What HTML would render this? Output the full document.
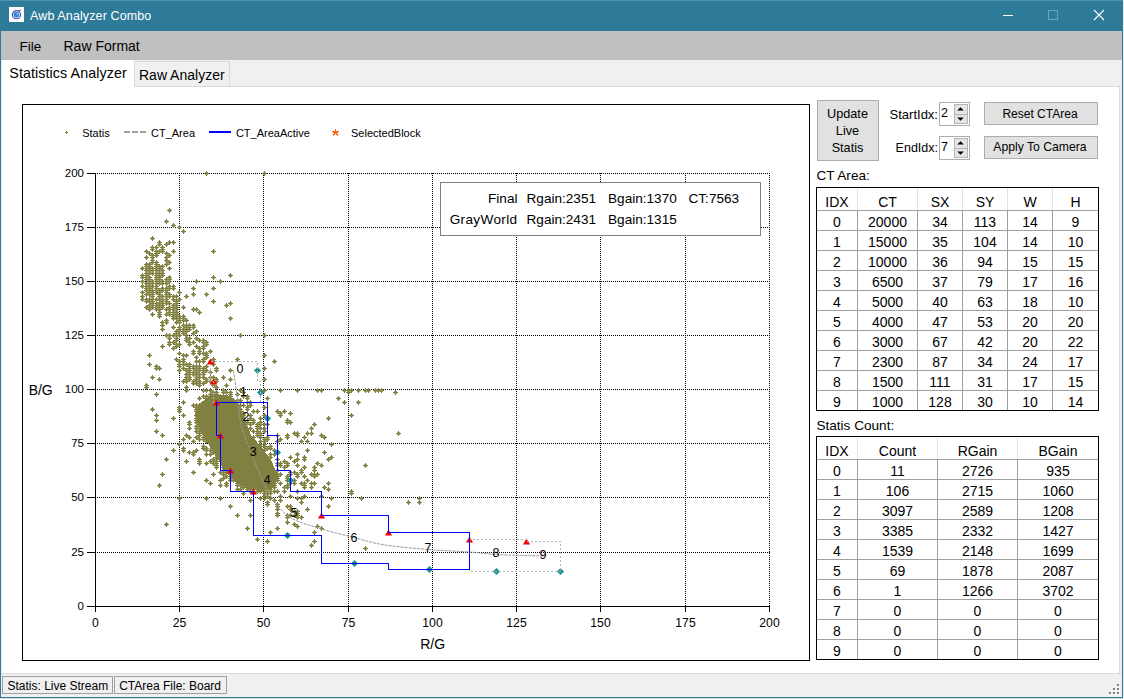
<!DOCTYPE html>
<html><head><meta charset="utf-8"><style>
html,body{margin:0;padding:0;width:1124px;height:699px;overflow:hidden;background:#f0f0f0}
body{position:relative;font-family:"Liberation Sans",sans-serif}
.b{position:absolute}
.t{position:absolute;white-space:pre}
svg.b{overflow:visible}
</style></head><body>
<div class="b" style="left:0px;top:0px;width:1124px;height:699px;background:#f0f0f0"></div>
<div class="b" style="left:0px;top:0px;width:1123px;height:31px;background:#2e7a99"></div>
<div class="b" style="left:0px;top:0px;width:1px;height:699px;background:#2e7a99"></div>
<div class="b" style="left:1122px;top:0px;width:1px;height:699px;background:#2e7a99"></div>
<div class="b" style="left:0px;top:697px;width:1123px;height:1px;background:#2e7a99"></div>
<div class="b" style="left:0px;top:698px;width:1124px;height:1px;background:#d8dcde"></div>
<div class="b" style="left:1123px;top:0px;width:1px;height:699px;background:#e8eef0"></div>
<svg class="b" style="left:9px;top:7px" width="15" height="15" viewBox="0 0 15 15"><rect width="15" height="15" fill="#fff"/><circle cx="7.5" cy="7.7" r="4.1" fill="none" stroke="#5246a8" stroke-width="1.1"/><circle cx="7.5" cy="7.7" r="2.9" fill="#2a8ae0"/><circle cx="8.3" cy="6.9" r="0.9" fill="#8cc4f4"/><path d="M9.8 4.4 L11.6 3.0" stroke="#5246a8" stroke-width="1.2"/></svg>
<div class="b" style="left:0px;top:0px;width:1123px;height:1px;background:#4f90aa"></div>
<div class="t" style="left:30.00px;top:9.72px;font-size:12.5px;line-height:12.5px;color:#fff;letter-spacing:0.12px">Awb Analyzer Combo</div>
<div class="b" style="left:1003px;top:15px;width:10px;height:1px;background:#fff"></div>
<div class="b" style="left:1048px;top:10px;width:10px;height:10px;border:1px solid #6fa3b8;box-sizing:border-box"></div>
<svg class="b" style="left:1094px;top:10px" width="10" height="10" viewBox="0 0 10 10"><path d="M0 0 L10 10 M10 0 L0 10" stroke="#fff" stroke-width="1.1"/></svg>
<div class="b" style="left:1px;top:31px;width:1121px;height:29px;background:#c0c0c0"></div>
<div class="t" style="left:19.50px;top:39.57px;font-size:13.5px;line-height:13.5px;color:#000;">File</div>
<div class="t" style="left:63.50px;top:39.15px;font-size:14px;line-height:14px;color:#000;">Raw Format</div>
<div class="b" style="left:1px;top:60px;width:1121px;height:27px;background:#f0f0f0"></div>
<div class="b" style="left:2px;top:86px;width:1118px;height:588px;background:#fff;border:1px solid #dadada;border-left:none;box-sizing:border-box"></div>
<div class="b" style="left:2px;top:60px;width:132px;height:28px;background:#fff"></div>
<div class="t" style="left:9.30px;top:65.90px;font-size:14.3px;line-height:14.3px;color:#000;letter-spacing:0.08px">Statistics Analyzer</div>
<div class="b" style="left:134px;top:61px;width:96px;height:25px;background:#f0f0f0;border:1px solid #d9d9d9;border-bottom:none;box-sizing:border-box"></div>
<div class="t" style="left:139.00px;top:68.15px;font-size:14px;line-height:14px;color:#000;">Raw Analyzer</div>
<div class="b" style="left:1px;top:673px;width:1121px;height:24px;background:#f0f0f0;border-top:1px solid #dcdcdc;box-sizing:border-box"></div>
<div class="b" style="left:2px;top:676px;width:111px;height:18px;border:1px solid #a0a0a0;box-sizing:border-box"></div>
<div class="t" style="left:7.50px;top:680.04px;font-size:12px;line-height:12px;color:#000;">Statis: Live Stream</div>
<div class="b" style="left:114px;top:676px;width:113px;height:18px;border:1px solid #a0a0a0;box-sizing:border-box"></div>
<div class="t" style="left:119.20px;top:679.64px;font-size:12px;line-height:12px;color:#000;">CTArea File: Board</div>
<div class="b" style="left:1118px;top:685px;width:2px;height:2px;background:#fff"></div>
<div class="b" style="left:1117px;top:684px;width:2px;height:2px;background:#808080"></div>
<div class="b" style="left:1114px;top:689px;width:2px;height:2px;background:#fff"></div>
<div class="b" style="left:1113px;top:688px;width:2px;height:2px;background:#808080"></div>
<div class="b" style="left:1118px;top:689px;width:2px;height:2px;background:#fff"></div>
<div class="b" style="left:1117px;top:688px;width:2px;height:2px;background:#808080"></div>
<div class="b" style="left:1110px;top:693px;width:2px;height:2px;background:#fff"></div>
<div class="b" style="left:1109px;top:692px;width:2px;height:2px;background:#808080"></div>
<div class="b" style="left:1114px;top:693px;width:2px;height:2px;background:#fff"></div>
<div class="b" style="left:1113px;top:692px;width:2px;height:2px;background:#808080"></div>
<div class="b" style="left:1118px;top:693px;width:2px;height:2px;background:#fff"></div>
<div class="b" style="left:1117px;top:692px;width:2px;height:2px;background:#808080"></div>
<div class="b" style="left:22px;top:104px;width:788px;height:557px;border:1px solid #000;box-sizing:border-box;background:#fff"></div>
<div class="b" style="left:817px;top:100px;width:62px;height:61px;background:#e1e1e1;border:1px solid #adadad;box-sizing:border-box"></div>
<div class="t" style="left:547.50px;width:600px;text-align:center;top:108.25px;font-size:12.7px;line-height:12.7px;color:#000;">Update</div>
<div class="t" style="left:547.50px;width:600px;text-align:center;top:125.25px;font-size:12.7px;line-height:12.7px;color:#000;">Live</div>
<div class="t" style="left:547.50px;width:600px;text-align:center;top:142.25px;font-size:12.7px;line-height:12.7px;color:#000;">Statis</div>
<div class="t" style="left:338.00px;width:600px;text-align:right;top:107.50px;font-size:13px;line-height:13px;color:#000;">StartIdx:</div>
<div class="t" style="left:338.00px;width:600px;text-align:right;top:141.72px;font-size:12.5px;line-height:12.5px;color:#000;">EndIdx:</div>
<div class="b" style="left:939px;top:102px;width:31px;height:24px;background:#fff;border:1px solid #adadad;box-sizing:border-box"></div>
<div class="t" style="left:941.00px;top:106.92px;font-size:12.5px;line-height:12.5px;color:#000;">2</div>
<div class="b" style="left:954px;top:104px;width:14px;height:11px;background:#e5e5e5;border:1px solid #b4b4b4;box-sizing:border-box"></div>
<div class="b" style="left:954px;top:114px;width:14px;height:10px;background:#e5e5e5;border:1px solid #b4b4b4;box-sizing:border-box"></div>
<svg class="b" style="left:957px;top:107px" width="8" height="16" viewBox="0 0 8 16"><path d="M3.5 0.3 L6.8 3.6 L0.2 3.6Z M3.5 13.8 L6.8 10.5 L0.2 10.5Z" fill="#000"/></svg>
<div class="b" style="left:939px;top:136px;width:31px;height:24px;background:#fff;border:1px solid #adadad;box-sizing:border-box"></div>
<div class="t" style="left:941.00px;top:140.92px;font-size:12.5px;line-height:12.5px;color:#000;">7</div>
<div class="b" style="left:954px;top:138px;width:14px;height:11px;background:#e5e5e5;border:1px solid #b4b4b4;box-sizing:border-box"></div>
<div class="b" style="left:954px;top:148px;width:14px;height:10px;background:#e5e5e5;border:1px solid #b4b4b4;box-sizing:border-box"></div>
<svg class="b" style="left:957px;top:141px" width="8" height="16" viewBox="0 0 8 16"><path d="M3.5 0.3 L6.8 3.6 L0.2 3.6Z M3.5 13.8 L6.8 10.5 L0.2 10.5Z" fill="#000"/></svg>
<div class="b" style="left:984px;top:102px;width:114px;height:23px;background:#e1e1e1;border:1px solid #adadad;box-sizing:border-box"></div>
<div class="t" style="left:740.00px;width:600px;text-align:center;top:108.04px;font-size:12px;line-height:12px;color:#000;">Reset CTArea</div>
<div class="b" style="left:984px;top:136px;width:114px;height:23px;background:#e1e1e1;border:1px solid #adadad;box-sizing:border-box"></div>
<div class="t" style="left:740.00px;width:600px;text-align:center;top:141.47px;font-size:12.2px;line-height:12.2px;color:#000;">Apply To Camera</div>
<div class="t" style="left:816.40px;top:168.89px;font-size:13.6px;line-height:13.6px;color:#000;">CT Area:</div>
<div class="t" style="left:816.40px;top:418.79px;font-size:13.6px;line-height:13.6px;color:#000;">Statis Count:</div>
<div class="b" style="left:816px;top:187px;width:283px;height:224px;border:1px solid #000;box-sizing:border-box;background:#fff"></div>
<div class="b" style="left:857px;top:188px;width:1px;height:22px;background:#e3e3e3"></div>
<div class="b" style="left:857px;top:210px;width:1px;height:200px;background:#a0a0a0"></div>
<div class="b" style="left:917px;top:188px;width:1px;height:22px;background:#e3e3e3"></div>
<div class="b" style="left:917px;top:210px;width:1px;height:200px;background:#a0a0a0"></div>
<div class="b" style="left:962px;top:188px;width:1px;height:22px;background:#e3e3e3"></div>
<div class="b" style="left:962px;top:210px;width:1px;height:200px;background:#a0a0a0"></div>
<div class="b" style="left:1007px;top:188px;width:1px;height:22px;background:#e3e3e3"></div>
<div class="b" style="left:1007px;top:210px;width:1px;height:200px;background:#a0a0a0"></div>
<div class="b" style="left:1052px;top:188px;width:1px;height:22px;background:#e3e3e3"></div>
<div class="b" style="left:1052px;top:210px;width:1px;height:200px;background:#a0a0a0"></div>
<div class="b" style="left:817px;top:210px;width:281px;height:1px;background:#a0a0a0"></div>
<div class="b" style="left:817px;top:230px;width:281px;height:1px;background:#a0a0a0"></div>
<div class="b" style="left:817px;top:250px;width:281px;height:1px;background:#a0a0a0"></div>
<div class="b" style="left:817px;top:270px;width:281px;height:1px;background:#a0a0a0"></div>
<div class="b" style="left:817px;top:290px;width:281px;height:1px;background:#a0a0a0"></div>
<div class="b" style="left:817px;top:310px;width:281px;height:1px;background:#a0a0a0"></div>
<div class="b" style="left:817px;top:330px;width:281px;height:1px;background:#a0a0a0"></div>
<div class="b" style="left:817px;top:350px;width:281px;height:1px;background:#a0a0a0"></div>
<div class="b" style="left:817px;top:370px;width:281px;height:1px;background:#a0a0a0"></div>
<div class="b" style="left:817px;top:390px;width:281px;height:1px;background:#a0a0a0"></div>
<div class="t" style="left:537.00px;width:600px;text-align:center;top:194.75px;font-size:14px;line-height:14px;color:#000;">IDX</div>
<div class="t" style="left:587.50px;width:600px;text-align:center;top:194.75px;font-size:14px;line-height:14px;color:#000;">CT</div>
<div class="t" style="left:640.00px;width:600px;text-align:center;top:194.75px;font-size:14px;line-height:14px;color:#000;">SX</div>
<div class="t" style="left:685.00px;width:600px;text-align:center;top:194.75px;font-size:14px;line-height:14px;color:#000;">SY</div>
<div class="t" style="left:730.00px;width:600px;text-align:center;top:194.75px;font-size:14px;line-height:14px;color:#000;">W</div>
<div class="t" style="left:775.50px;width:600px;text-align:center;top:194.75px;font-size:14px;line-height:14px;color:#000;">H</div>
<div class="t" style="left:537.00px;width:600px;text-align:center;top:215.25px;font-size:14px;line-height:14px;color:#000;">0</div>
<div class="t" style="left:587.50px;width:600px;text-align:center;top:215.25px;font-size:14px;line-height:14px;color:#000;">20000</div>
<div class="t" style="left:640.00px;width:600px;text-align:center;top:215.25px;font-size:14px;line-height:14px;color:#000;">34</div>
<div class="t" style="left:685.00px;width:600px;text-align:center;top:215.25px;font-size:14px;line-height:14px;color:#000;">113</div>
<div class="t" style="left:730.00px;width:600px;text-align:center;top:215.25px;font-size:14px;line-height:14px;color:#000;">14</div>
<div class="t" style="left:775.50px;width:600px;text-align:center;top:215.25px;font-size:14px;line-height:14px;color:#000;">9</div>
<div class="t" style="left:537.00px;width:600px;text-align:center;top:235.25px;font-size:14px;line-height:14px;color:#000;">1</div>
<div class="t" style="left:587.50px;width:600px;text-align:center;top:235.25px;font-size:14px;line-height:14px;color:#000;">15000</div>
<div class="t" style="left:640.00px;width:600px;text-align:center;top:235.25px;font-size:14px;line-height:14px;color:#000;">35</div>
<div class="t" style="left:685.00px;width:600px;text-align:center;top:235.25px;font-size:14px;line-height:14px;color:#000;">104</div>
<div class="t" style="left:730.00px;width:600px;text-align:center;top:235.25px;font-size:14px;line-height:14px;color:#000;">14</div>
<div class="t" style="left:775.50px;width:600px;text-align:center;top:235.25px;font-size:14px;line-height:14px;color:#000;">10</div>
<div class="t" style="left:537.00px;width:600px;text-align:center;top:255.25px;font-size:14px;line-height:14px;color:#000;">2</div>
<div class="t" style="left:587.50px;width:600px;text-align:center;top:255.25px;font-size:14px;line-height:14px;color:#000;">10000</div>
<div class="t" style="left:640.00px;width:600px;text-align:center;top:255.25px;font-size:14px;line-height:14px;color:#000;">36</div>
<div class="t" style="left:685.00px;width:600px;text-align:center;top:255.25px;font-size:14px;line-height:14px;color:#000;">94</div>
<div class="t" style="left:730.00px;width:600px;text-align:center;top:255.25px;font-size:14px;line-height:14px;color:#000;">15</div>
<div class="t" style="left:775.50px;width:600px;text-align:center;top:255.25px;font-size:14px;line-height:14px;color:#000;">15</div>
<div class="t" style="left:537.00px;width:600px;text-align:center;top:275.25px;font-size:14px;line-height:14px;color:#000;">3</div>
<div class="t" style="left:587.50px;width:600px;text-align:center;top:275.25px;font-size:14px;line-height:14px;color:#000;">6500</div>
<div class="t" style="left:640.00px;width:600px;text-align:center;top:275.25px;font-size:14px;line-height:14px;color:#000;">37</div>
<div class="t" style="left:685.00px;width:600px;text-align:center;top:275.25px;font-size:14px;line-height:14px;color:#000;">79</div>
<div class="t" style="left:730.00px;width:600px;text-align:center;top:275.25px;font-size:14px;line-height:14px;color:#000;">17</div>
<div class="t" style="left:775.50px;width:600px;text-align:center;top:275.25px;font-size:14px;line-height:14px;color:#000;">16</div>
<div class="t" style="left:537.00px;width:600px;text-align:center;top:295.25px;font-size:14px;line-height:14px;color:#000;">4</div>
<div class="t" style="left:587.50px;width:600px;text-align:center;top:295.25px;font-size:14px;line-height:14px;color:#000;">5000</div>
<div class="t" style="left:640.00px;width:600px;text-align:center;top:295.25px;font-size:14px;line-height:14px;color:#000;">40</div>
<div class="t" style="left:685.00px;width:600px;text-align:center;top:295.25px;font-size:14px;line-height:14px;color:#000;">63</div>
<div class="t" style="left:730.00px;width:600px;text-align:center;top:295.25px;font-size:14px;line-height:14px;color:#000;">18</div>
<div class="t" style="left:775.50px;width:600px;text-align:center;top:295.25px;font-size:14px;line-height:14px;color:#000;">10</div>
<div class="t" style="left:537.00px;width:600px;text-align:center;top:315.25px;font-size:14px;line-height:14px;color:#000;">5</div>
<div class="t" style="left:587.50px;width:600px;text-align:center;top:315.25px;font-size:14px;line-height:14px;color:#000;">4000</div>
<div class="t" style="left:640.00px;width:600px;text-align:center;top:315.25px;font-size:14px;line-height:14px;color:#000;">47</div>
<div class="t" style="left:685.00px;width:600px;text-align:center;top:315.25px;font-size:14px;line-height:14px;color:#000;">53</div>
<div class="t" style="left:730.00px;width:600px;text-align:center;top:315.25px;font-size:14px;line-height:14px;color:#000;">20</div>
<div class="t" style="left:775.50px;width:600px;text-align:center;top:315.25px;font-size:14px;line-height:14px;color:#000;">20</div>
<div class="t" style="left:537.00px;width:600px;text-align:center;top:335.25px;font-size:14px;line-height:14px;color:#000;">6</div>
<div class="t" style="left:587.50px;width:600px;text-align:center;top:335.25px;font-size:14px;line-height:14px;color:#000;">3000</div>
<div class="t" style="left:640.00px;width:600px;text-align:center;top:335.25px;font-size:14px;line-height:14px;color:#000;">67</div>
<div class="t" style="left:685.00px;width:600px;text-align:center;top:335.25px;font-size:14px;line-height:14px;color:#000;">42</div>
<div class="t" style="left:730.00px;width:600px;text-align:center;top:335.25px;font-size:14px;line-height:14px;color:#000;">20</div>
<div class="t" style="left:775.50px;width:600px;text-align:center;top:335.25px;font-size:14px;line-height:14px;color:#000;">22</div>
<div class="t" style="left:537.00px;width:600px;text-align:center;top:355.25px;font-size:14px;line-height:14px;color:#000;">7</div>
<div class="t" style="left:587.50px;width:600px;text-align:center;top:355.25px;font-size:14px;line-height:14px;color:#000;">2300</div>
<div class="t" style="left:640.00px;width:600px;text-align:center;top:355.25px;font-size:14px;line-height:14px;color:#000;">87</div>
<div class="t" style="left:685.00px;width:600px;text-align:center;top:355.25px;font-size:14px;line-height:14px;color:#000;">34</div>
<div class="t" style="left:730.00px;width:600px;text-align:center;top:355.25px;font-size:14px;line-height:14px;color:#000;">24</div>
<div class="t" style="left:775.50px;width:600px;text-align:center;top:355.25px;font-size:14px;line-height:14px;color:#000;">17</div>
<div class="t" style="left:537.00px;width:600px;text-align:center;top:375.25px;font-size:14px;line-height:14px;color:#000;">8</div>
<div class="t" style="left:587.50px;width:600px;text-align:center;top:375.25px;font-size:14px;line-height:14px;color:#000;">1500</div>
<div class="t" style="left:640.00px;width:600px;text-align:center;top:375.25px;font-size:14px;line-height:14px;color:#000;">111</div>
<div class="t" style="left:685.00px;width:600px;text-align:center;top:375.25px;font-size:14px;line-height:14px;color:#000;">31</div>
<div class="t" style="left:730.00px;width:600px;text-align:center;top:375.25px;font-size:14px;line-height:14px;color:#000;">17</div>
<div class="t" style="left:775.50px;width:600px;text-align:center;top:375.25px;font-size:14px;line-height:14px;color:#000;">15</div>
<div class="t" style="left:537.00px;width:600px;text-align:center;top:395.25px;font-size:14px;line-height:14px;color:#000;">9</div>
<div class="t" style="left:587.50px;width:600px;text-align:center;top:395.25px;font-size:14px;line-height:14px;color:#000;">1000</div>
<div class="t" style="left:640.00px;width:600px;text-align:center;top:395.25px;font-size:14px;line-height:14px;color:#000;">128</div>
<div class="t" style="left:685.00px;width:600px;text-align:center;top:395.25px;font-size:14px;line-height:14px;color:#000;">30</div>
<div class="t" style="left:730.00px;width:600px;text-align:center;top:395.25px;font-size:14px;line-height:14px;color:#000;">10</div>
<div class="t" style="left:775.50px;width:600px;text-align:center;top:395.25px;font-size:14px;line-height:14px;color:#000;">14</div>
<div class="b" style="left:816px;top:436px;width:283px;height:224px;border:1px solid #000;box-sizing:border-box;background:#fff"></div>
<div class="b" style="left:857px;top:437px;width:1px;height:22px;background:#e3e3e3"></div>
<div class="b" style="left:857px;top:459px;width:1px;height:200px;background:#a0a0a0"></div>
<div class="b" style="left:937px;top:437px;width:1px;height:22px;background:#e3e3e3"></div>
<div class="b" style="left:937px;top:459px;width:1px;height:200px;background:#a0a0a0"></div>
<div class="b" style="left:1017px;top:437px;width:1px;height:22px;background:#e3e3e3"></div>
<div class="b" style="left:1017px;top:459px;width:1px;height:200px;background:#a0a0a0"></div>
<div class="b" style="left:817px;top:459px;width:281px;height:1px;background:#a0a0a0"></div>
<div class="b" style="left:817px;top:479px;width:281px;height:1px;background:#a0a0a0"></div>
<div class="b" style="left:817px;top:499px;width:281px;height:1px;background:#a0a0a0"></div>
<div class="b" style="left:817px;top:519px;width:281px;height:1px;background:#a0a0a0"></div>
<div class="b" style="left:817px;top:539px;width:281px;height:1px;background:#a0a0a0"></div>
<div class="b" style="left:817px;top:559px;width:281px;height:1px;background:#a0a0a0"></div>
<div class="b" style="left:817px;top:579px;width:281px;height:1px;background:#a0a0a0"></div>
<div class="b" style="left:817px;top:599px;width:281px;height:1px;background:#a0a0a0"></div>
<div class="b" style="left:817px;top:619px;width:281px;height:1px;background:#a0a0a0"></div>
<div class="b" style="left:817px;top:639px;width:281px;height:1px;background:#a0a0a0"></div>
<div class="t" style="left:537.00px;width:600px;text-align:center;top:443.75px;font-size:14px;line-height:14px;color:#000;">IDX</div>
<div class="t" style="left:597.50px;width:600px;text-align:center;top:443.75px;font-size:14px;line-height:14px;color:#000;">Count</div>
<div class="t" style="left:677.50px;width:600px;text-align:center;top:443.75px;font-size:14px;line-height:14px;color:#000;">RGain</div>
<div class="t" style="left:758.00px;width:600px;text-align:center;top:443.75px;font-size:14px;line-height:14px;color:#000;">BGain</div>
<div class="t" style="left:537.00px;width:600px;text-align:center;top:464.25px;font-size:14px;line-height:14px;color:#000;">0</div>
<div class="t" style="left:597.50px;width:600px;text-align:center;top:464.25px;font-size:14px;line-height:14px;color:#000;">11</div>
<div class="t" style="left:677.50px;width:600px;text-align:center;top:464.25px;font-size:14px;line-height:14px;color:#000;">2726</div>
<div class="t" style="left:758.00px;width:600px;text-align:center;top:464.25px;font-size:14px;line-height:14px;color:#000;">935</div>
<div class="t" style="left:537.00px;width:600px;text-align:center;top:484.25px;font-size:14px;line-height:14px;color:#000;">1</div>
<div class="t" style="left:597.50px;width:600px;text-align:center;top:484.25px;font-size:14px;line-height:14px;color:#000;">106</div>
<div class="t" style="left:677.50px;width:600px;text-align:center;top:484.25px;font-size:14px;line-height:14px;color:#000;">2715</div>
<div class="t" style="left:758.00px;width:600px;text-align:center;top:484.25px;font-size:14px;line-height:14px;color:#000;">1060</div>
<div class="t" style="left:537.00px;width:600px;text-align:center;top:504.25px;font-size:14px;line-height:14px;color:#000;">2</div>
<div class="t" style="left:597.50px;width:600px;text-align:center;top:504.25px;font-size:14px;line-height:14px;color:#000;">3097</div>
<div class="t" style="left:677.50px;width:600px;text-align:center;top:504.25px;font-size:14px;line-height:14px;color:#000;">2589</div>
<div class="t" style="left:758.00px;width:600px;text-align:center;top:504.25px;font-size:14px;line-height:14px;color:#000;">1208</div>
<div class="t" style="left:537.00px;width:600px;text-align:center;top:524.25px;font-size:14px;line-height:14px;color:#000;">3</div>
<div class="t" style="left:597.50px;width:600px;text-align:center;top:524.25px;font-size:14px;line-height:14px;color:#000;">3385</div>
<div class="t" style="left:677.50px;width:600px;text-align:center;top:524.25px;font-size:14px;line-height:14px;color:#000;">2332</div>
<div class="t" style="left:758.00px;width:600px;text-align:center;top:524.25px;font-size:14px;line-height:14px;color:#000;">1427</div>
<div class="t" style="left:537.00px;width:600px;text-align:center;top:544.25px;font-size:14px;line-height:14px;color:#000;">4</div>
<div class="t" style="left:597.50px;width:600px;text-align:center;top:544.25px;font-size:14px;line-height:14px;color:#000;">1539</div>
<div class="t" style="left:677.50px;width:600px;text-align:center;top:544.25px;font-size:14px;line-height:14px;color:#000;">2148</div>
<div class="t" style="left:758.00px;width:600px;text-align:center;top:544.25px;font-size:14px;line-height:14px;color:#000;">1699</div>
<div class="t" style="left:537.00px;width:600px;text-align:center;top:564.25px;font-size:14px;line-height:14px;color:#000;">5</div>
<div class="t" style="left:597.50px;width:600px;text-align:center;top:564.25px;font-size:14px;line-height:14px;color:#000;">69</div>
<div class="t" style="left:677.50px;width:600px;text-align:center;top:564.25px;font-size:14px;line-height:14px;color:#000;">1878</div>
<div class="t" style="left:758.00px;width:600px;text-align:center;top:564.25px;font-size:14px;line-height:14px;color:#000;">2087</div>
<div class="t" style="left:537.00px;width:600px;text-align:center;top:584.25px;font-size:14px;line-height:14px;color:#000;">6</div>
<div class="t" style="left:597.50px;width:600px;text-align:center;top:584.25px;font-size:14px;line-height:14px;color:#000;">1</div>
<div class="t" style="left:677.50px;width:600px;text-align:center;top:584.25px;font-size:14px;line-height:14px;color:#000;">1266</div>
<div class="t" style="left:758.00px;width:600px;text-align:center;top:584.25px;font-size:14px;line-height:14px;color:#000;">3702</div>
<div class="t" style="left:537.00px;width:600px;text-align:center;top:604.25px;font-size:14px;line-height:14px;color:#000;">7</div>
<div class="t" style="left:597.50px;width:600px;text-align:center;top:604.25px;font-size:14px;line-height:14px;color:#000;">0</div>
<div class="t" style="left:677.50px;width:600px;text-align:center;top:604.25px;font-size:14px;line-height:14px;color:#000;">0</div>
<div class="t" style="left:758.00px;width:600px;text-align:center;top:604.25px;font-size:14px;line-height:14px;color:#000;">0</div>
<div class="t" style="left:537.00px;width:600px;text-align:center;top:624.25px;font-size:14px;line-height:14px;color:#000;">8</div>
<div class="t" style="left:597.50px;width:600px;text-align:center;top:624.25px;font-size:14px;line-height:14px;color:#000;">0</div>
<div class="t" style="left:677.50px;width:600px;text-align:center;top:624.25px;font-size:14px;line-height:14px;color:#000;">0</div>
<div class="t" style="left:758.00px;width:600px;text-align:center;top:624.25px;font-size:14px;line-height:14px;color:#000;">0</div>
<div class="t" style="left:537.00px;width:600px;text-align:center;top:644.25px;font-size:14px;line-height:14px;color:#000;">9</div>
<div class="t" style="left:597.50px;width:600px;text-align:center;top:644.25px;font-size:14px;line-height:14px;color:#000;">0</div>
<div class="t" style="left:677.50px;width:600px;text-align:center;top:644.25px;font-size:14px;line-height:14px;color:#000;">0</div>
<div class="t" style="left:758.00px;width:600px;text-align:center;top:644.25px;font-size:14px;line-height:14px;color:#000;">0</div>
<svg class="b" style="left:0;top:0" width="1124" height="699" font-family="Liberation Sans, sans-serif" shape-rendering="crispEdges"><path d="M179.5 173V606" stroke="#000" stroke-width="1" stroke-dasharray="1 1" /><path d="M263.5 173V606" stroke="#000" stroke-width="1" stroke-dasharray="1 1" /><path d="M348.5 173V606" stroke="#000" stroke-width="1" stroke-dasharray="1 1" /><path d="M432.5 173V606" stroke="#000" stroke-width="1" stroke-dasharray="1 1" /><path d="M516.5 173V606" stroke="#000" stroke-width="1" stroke-dasharray="1 1" /><path d="M600.5 173V606" stroke="#000" stroke-width="1" stroke-dasharray="1 1" /><path d="M685.5 173V606" stroke="#000" stroke-width="1" stroke-dasharray="1 1" /><path d="M769.5 173V606" stroke="#000" stroke-width="1" stroke-dasharray="1 1" /><path d="M97 552.5H770" stroke="#000" stroke-width="1" stroke-dasharray="1 1" /><path d="M97 497.5H770" stroke="#000" stroke-width="1" stroke-dasharray="1 1" /><path d="M97 443.5H770" stroke="#000" stroke-width="1" stroke-dasharray="1 1" /><path d="M97 389.5H770" stroke="#000" stroke-width="1" stroke-dasharray="1 1" /><path d="M97 335.5H770" stroke="#000" stroke-width="1" stroke-dasharray="1 1" /><path d="M97 281.5H770" stroke="#000" stroke-width="1" stroke-dasharray="1 1" /><path d="M97 227.5H770" stroke="#000" stroke-width="1" stroke-dasharray="1 1" /><path d="M97 173.5H770" stroke="#000" stroke-width="1" stroke-dasharray="1 1" /><path d="M95.5 173V606M87 606.5H770" stroke="#000" stroke-width="1" fill="none"/><path d="M87 606.5H95M87 552.5H95M87 497.5H95M87 443.5H95M87 389.5H95M87 335.5H95M87 281.5H95M87 227.5H95M87 173.5H95M95.5 607V612M179.5 607V612M263.5 607V612M348.5 607V612M432.5 607V612M516.5 607V612M600.5 607V612M685.5 607V612M769.5 607V612" stroke="#000" stroke-width="1"/><text x="84" y="610" font-size="11.5" text-anchor="end" fill="#000" >0</text><text x="84" y="556" font-size="11.5" text-anchor="end" fill="#000" >25</text><text x="84" y="501" font-size="11.5" text-anchor="end" fill="#000" >50</text><text x="84" y="447" font-size="11.5" text-anchor="end" fill="#000" >75</text><text x="84" y="393" font-size="11.5" text-anchor="end" fill="#000" >100</text><text x="84" y="339" font-size="11.5" text-anchor="end" fill="#000" >125</text><text x="84" y="285" font-size="11.5" text-anchor="end" fill="#000" >150</text><text x="84" y="231" font-size="11.5" text-anchor="end" fill="#000" >175</text><text x="84" y="177" font-size="11.5" text-anchor="end" fill="#000" >200</text><text x="95.5" y="627" font-size="12.2" text-anchor="middle" fill="#000" >0</text><text x="179.5" y="627" font-size="12.2" text-anchor="middle" fill="#000" >25</text><text x="263.5" y="627" font-size="12.2" text-anchor="middle" fill="#000" >50</text><text x="348.5" y="627" font-size="12.2" text-anchor="middle" fill="#000" >75</text><text x="432.5" y="627" font-size="12.2" text-anchor="middle" fill="#000" >100</text><text x="516.5" y="627" font-size="12.2" text-anchor="middle" fill="#000" >125</text><text x="600.5" y="627" font-size="12.2" text-anchor="middle" fill="#000" >150</text><text x="685.5" y="627" font-size="12.2" text-anchor="middle" fill="#000" >175</text><text x="769.5" y="627" font-size="12.2" text-anchor="middle" fill="#000" >200</text><text x="40.7" y="395.4" font-size="14" text-anchor="middle" fill="#000" >B/G</text><text x="432.6" y="649.4" font-size="14" text-anchor="middle" fill="#000" >R/G</text><path d="M66 130.5h1v1h1v1h-1v1h-1v-1h-1v-1h1z" fill="#7f7f3f"/><text x="82.2" y="136.8" font-size="11" text-anchor="start" fill="#000" >Statis</text><path d="M124 132H146" stroke="#a0a0a0" stroke-width="2" stroke-dasharray="6 2"/><text x="151" y="136.8" font-size="11" text-anchor="start" fill="#000" >CT_Area</text><path d="M209 132H231" stroke="#0000ff" stroke-width="2"/><text x="235.9" y="136.8" font-size="11" text-anchor="start" fill="#000" >CT_AreaActive</text><path d="M335.5 128.5l1.2 2.6 2.8 0.2-2.2 1.8 0.8 2.8-2.6-1.6-2.6 1.6 0.8-2.8-2.2-1.8 2.8-0.2z" fill="#ff6a1a"/><text x="351" y="136.8" font-size="11" text-anchor="start" fill="#000" >SelectedBlock</text><rect x="440.5" y="182.5" width="320" height="53" fill="#fff" stroke="#808080"/><text x="517.5" y="203" font-size="13.6" text-anchor="end" fill="#000" >Final</text><text x="517.5" y="224" font-size="13.6" text-anchor="end" fill="#000" letter-spacing="0.35">GrayWorld</text><text x="526.5" y="203" font-size="13.6" text-anchor="start" fill="#000" >Rgain:2351</text><text x="608" y="203" font-size="13.6" text-anchor="start" fill="#000" >Bgain:1370</text><text x="688.5" y="203" font-size="13.6" text-anchor="start" fill="#000" >CT:7563</text><text x="526.5" y="224" font-size="13.6" text-anchor="start" fill="#000" >Rgain:2431</text><text x="608" y="224" font-size="13.6" text-anchor="start" fill="#000" >Bgain:1315</text><path d="M200 403L212 395L227 395L239 404L245 420L251 435L262 448L272 462L278 477L274 488L262 491L247 489L234 481L224 469L215 455L207 442L199 429L195 414Z" fill="#808040"/><path d="M141 298h1v1h-1zM143 298h1v1h-1zM141 300h1v1h-1zM143 300h1v1h-1zM141 295h1v1h-1zM143 295h1v1h-1zM141 297h1v1h-1zM143 297h1v1h-1zM141 291h1v1h-1zM143 291h1v1h-1zM141 293h1v1h-1zM143 293h1v1h-1zM141 285h1v1h-1zM143 285h1v1h-1zM141 287h1v1h-1zM143 287h1v1h-1zM141 280h1v1h-1zM143 280h1v1h-1zM141 282h1v1h-1zM143 282h1v1h-1zM141 276h1v1h-1zM143 276h1v1h-1zM141 278h1v1h-1zM143 278h1v1h-1zM141 274h1v1h-1zM143 274h1v1h-1zM141 276h1v1h-1zM143 276h1v1h-1zM141 267h1v1h-1zM143 267h1v1h-1zM141 269h1v1h-1zM143 269h1v1h-1zM145 386h1v1h-1zM147 386h1v1h-1zM145 388h1v1h-1zM147 388h1v1h-1zM145 384h1v1h-1zM147 384h1v1h-1zM145 386h1v1h-1zM147 386h1v1h-1zM145 306h1v1h-1zM147 306h1v1h-1zM145 308h1v1h-1zM147 308h1v1h-1zM145 300h1v1h-1zM147 300h1v1h-1zM145 302h1v1h-1zM147 302h1v1h-1zM145 298h1v1h-1zM147 298h1v1h-1zM145 300h1v1h-1zM147 300h1v1h-1zM145 293h1v1h-1zM147 293h1v1h-1zM145 295h1v1h-1zM147 295h1v1h-1zM145 289h1v1h-1zM147 289h1v1h-1zM145 291h1v1h-1zM147 291h1v1h-1zM145 287h1v1h-1zM147 287h1v1h-1zM145 289h1v1h-1zM147 289h1v1h-1zM145 285h1v1h-1zM147 285h1v1h-1zM145 287h1v1h-1zM147 287h1v1h-1zM145 282h1v1h-1zM147 282h1v1h-1zM145 284h1v1h-1zM147 284h1v1h-1zM145 278h1v1h-1zM147 278h1v1h-1zM145 280h1v1h-1zM147 280h1v1h-1zM145 276h1v1h-1zM147 276h1v1h-1zM145 278h1v1h-1zM147 278h1v1h-1zM145 274h1v1h-1zM147 274h1v1h-1zM145 276h1v1h-1zM147 276h1v1h-1zM145 272h1v1h-1zM147 272h1v1h-1zM145 274h1v1h-1zM147 274h1v1h-1zM145 269h1v1h-1zM147 269h1v1h-1zM145 271h1v1h-1zM147 271h1v1h-1zM145 267h1v1h-1zM147 267h1v1h-1zM145 269h1v1h-1zM147 269h1v1h-1zM145 265h1v1h-1zM147 265h1v1h-1zM145 267h1v1h-1zM147 267h1v1h-1zM145 263h1v1h-1zM147 263h1v1h-1zM145 265h1v1h-1zM147 265h1v1h-1zM145 256h1v1h-1zM147 256h1v1h-1zM145 258h1v1h-1zM147 258h1v1h-1zM145 250h1v1h-1zM147 250h1v1h-1zM145 252h1v1h-1zM147 252h1v1h-1zM148 363h1v1h-1zM150 363h1v1h-1zM148 365h1v1h-1zM150 365h1v1h-1zM148 354h1v1h-1zM150 354h1v1h-1zM148 356h1v1h-1zM150 356h1v1h-1zM148 308h1v1h-1zM150 308h1v1h-1zM148 310h1v1h-1zM150 310h1v1h-1zM148 304h1v1h-1zM150 304h1v1h-1zM148 306h1v1h-1zM150 306h1v1h-1zM148 300h1v1h-1zM150 300h1v1h-1zM148 302h1v1h-1zM150 302h1v1h-1zM148 298h1v1h-1zM150 298h1v1h-1zM148 300h1v1h-1zM150 300h1v1h-1zM148 293h1v1h-1zM150 293h1v1h-1zM148 295h1v1h-1zM150 295h1v1h-1zM148 291h1v1h-1zM150 291h1v1h-1zM148 293h1v1h-1zM150 293h1v1h-1zM148 289h1v1h-1zM150 289h1v1h-1zM148 291h1v1h-1zM150 291h1v1h-1zM148 287h1v1h-1zM150 287h1v1h-1zM148 289h1v1h-1zM150 289h1v1h-1zM148 285h1v1h-1zM150 285h1v1h-1zM148 287h1v1h-1zM150 287h1v1h-1zM148 282h1v1h-1zM150 282h1v1h-1zM148 284h1v1h-1zM150 284h1v1h-1zM148 280h1v1h-1zM150 280h1v1h-1zM148 282h1v1h-1zM150 282h1v1h-1zM148 278h1v1h-1zM150 278h1v1h-1zM148 280h1v1h-1zM150 280h1v1h-1zM148 276h1v1h-1zM150 276h1v1h-1zM148 278h1v1h-1zM150 278h1v1h-1zM148 272h1v1h-1zM150 272h1v1h-1zM148 274h1v1h-1zM150 274h1v1h-1zM148 269h1v1h-1zM150 269h1v1h-1zM148 271h1v1h-1zM150 271h1v1h-1zM148 267h1v1h-1zM150 267h1v1h-1zM148 269h1v1h-1zM150 269h1v1h-1zM148 265h1v1h-1zM150 265h1v1h-1zM148 267h1v1h-1zM150 267h1v1h-1zM148 263h1v1h-1zM150 263h1v1h-1zM148 265h1v1h-1zM150 265h1v1h-1zM148 252h1v1h-1zM150 252h1v1h-1zM148 254h1v1h-1zM150 254h1v1h-1zM151 408h1v1h-1zM153 408h1v1h-1zM151 410h1v1h-1zM153 410h1v1h-1zM151 376h1v1h-1zM153 376h1v1h-1zM151 378h1v1h-1zM153 378h1v1h-1zM151 313h1v1h-1zM153 313h1v1h-1zM151 315h1v1h-1zM153 315h1v1h-1zM151 306h1v1h-1zM153 306h1v1h-1zM151 308h1v1h-1zM153 308h1v1h-1zM151 304h1v1h-1zM153 304h1v1h-1zM151 306h1v1h-1zM153 306h1v1h-1zM151 302h1v1h-1zM153 302h1v1h-1zM151 304h1v1h-1zM153 304h1v1h-1zM151 300h1v1h-1zM153 300h1v1h-1zM151 302h1v1h-1zM153 302h1v1h-1zM151 298h1v1h-1zM153 298h1v1h-1zM151 300h1v1h-1zM153 300h1v1h-1zM151 295h1v1h-1zM153 295h1v1h-1zM151 297h1v1h-1zM153 297h1v1h-1zM151 293h1v1h-1zM153 293h1v1h-1zM151 295h1v1h-1zM153 295h1v1h-1zM151 291h1v1h-1zM153 291h1v1h-1zM151 293h1v1h-1zM153 293h1v1h-1zM151 289h1v1h-1zM153 289h1v1h-1zM151 291h1v1h-1zM153 291h1v1h-1zM151 285h1v1h-1zM153 285h1v1h-1zM151 287h1v1h-1zM153 287h1v1h-1zM151 282h1v1h-1zM153 282h1v1h-1zM151 284h1v1h-1zM153 284h1v1h-1zM151 280h1v1h-1zM153 280h1v1h-1zM151 282h1v1h-1zM153 282h1v1h-1zM151 272h1v1h-1zM153 272h1v1h-1zM151 274h1v1h-1zM153 274h1v1h-1zM151 269h1v1h-1zM153 269h1v1h-1zM151 271h1v1h-1zM153 271h1v1h-1zM151 267h1v1h-1zM153 267h1v1h-1zM151 269h1v1h-1zM153 269h1v1h-1zM151 261h1v1h-1zM153 261h1v1h-1zM151 263h1v1h-1zM153 263h1v1h-1zM151 259h1v1h-1zM153 259h1v1h-1zM151 261h1v1h-1zM153 261h1v1h-1zM151 256h1v1h-1zM153 256h1v1h-1zM151 258h1v1h-1zM153 258h1v1h-1zM151 254h1v1h-1zM153 254h1v1h-1zM151 256h1v1h-1zM153 256h1v1h-1zM151 248h1v1h-1zM153 248h1v1h-1zM151 250h1v1h-1zM153 250h1v1h-1zM151 246h1v1h-1zM153 246h1v1h-1zM151 248h1v1h-1zM153 248h1v1h-1zM151 237h1v1h-1zM153 237h1v1h-1zM151 239h1v1h-1zM153 239h1v1h-1zM155 430h1v1h-1zM157 430h1v1h-1zM155 432h1v1h-1zM157 432h1v1h-1zM155 419h1v1h-1zM157 419h1v1h-1zM155 421h1v1h-1zM157 421h1v1h-1zM155 414h1v1h-1zM157 414h1v1h-1zM155 416h1v1h-1zM157 416h1v1h-1zM155 393h1v1h-1zM157 393h1v1h-1zM155 395h1v1h-1zM157 395h1v1h-1zM155 367h1v1h-1zM157 367h1v1h-1zM155 369h1v1h-1zM157 369h1v1h-1zM155 365h1v1h-1zM157 365h1v1h-1zM155 367h1v1h-1zM157 367h1v1h-1zM155 308h1v1h-1zM157 308h1v1h-1zM155 310h1v1h-1zM157 310h1v1h-1zM155 306h1v1h-1zM157 306h1v1h-1zM155 308h1v1h-1zM157 308h1v1h-1zM155 304h1v1h-1zM157 304h1v1h-1zM155 306h1v1h-1zM157 306h1v1h-1zM155 302h1v1h-1zM157 302h1v1h-1zM155 304h1v1h-1zM157 304h1v1h-1zM155 298h1v1h-1zM157 298h1v1h-1zM155 300h1v1h-1zM157 300h1v1h-1zM155 291h1v1h-1zM157 291h1v1h-1zM155 293h1v1h-1zM157 293h1v1h-1zM155 289h1v1h-1zM157 289h1v1h-1zM155 291h1v1h-1zM157 291h1v1h-1zM155 287h1v1h-1zM157 287h1v1h-1zM155 289h1v1h-1zM157 289h1v1h-1zM155 285h1v1h-1zM157 285h1v1h-1zM155 287h1v1h-1zM157 287h1v1h-1zM155 282h1v1h-1zM157 282h1v1h-1zM155 284h1v1h-1zM157 284h1v1h-1zM155 280h1v1h-1zM157 280h1v1h-1zM155 282h1v1h-1zM157 282h1v1h-1zM155 278h1v1h-1zM157 278h1v1h-1zM155 280h1v1h-1zM157 280h1v1h-1zM155 276h1v1h-1zM157 276h1v1h-1zM155 278h1v1h-1zM157 278h1v1h-1zM155 274h1v1h-1zM157 274h1v1h-1zM155 276h1v1h-1zM157 276h1v1h-1zM155 272h1v1h-1zM157 272h1v1h-1zM155 274h1v1h-1zM157 274h1v1h-1zM155 269h1v1h-1zM157 269h1v1h-1zM155 271h1v1h-1zM157 271h1v1h-1zM155 267h1v1h-1zM157 267h1v1h-1zM155 269h1v1h-1zM157 269h1v1h-1zM155 265h1v1h-1zM157 265h1v1h-1zM155 267h1v1h-1zM157 267h1v1h-1zM155 263h1v1h-1zM157 263h1v1h-1zM155 265h1v1h-1zM157 265h1v1h-1zM155 261h1v1h-1zM157 261h1v1h-1zM155 263h1v1h-1zM157 263h1v1h-1zM155 254h1v1h-1zM157 254h1v1h-1zM155 256h1v1h-1zM157 256h1v1h-1zM155 252h1v1h-1zM157 252h1v1h-1zM155 254h1v1h-1zM157 254h1v1h-1zM155 250h1v1h-1zM157 250h1v1h-1zM155 252h1v1h-1zM157 252h1v1h-1zM155 246h1v1h-1zM157 246h1v1h-1zM155 248h1v1h-1zM157 248h1v1h-1zM158 484h1v1h-1zM160 484h1v1h-1zM158 486h1v1h-1zM160 486h1v1h-1zM158 378h1v1h-1zM160 378h1v1h-1zM158 380h1v1h-1zM160 380h1v1h-1zM158 367h1v1h-1zM160 367h1v1h-1zM158 369h1v1h-1zM160 369h1v1h-1zM158 315h1v1h-1zM160 315h1v1h-1zM158 317h1v1h-1zM160 317h1v1h-1zM158 313h1v1h-1zM160 313h1v1h-1zM158 315h1v1h-1zM160 315h1v1h-1zM158 311h1v1h-1zM160 311h1v1h-1zM158 313h1v1h-1zM160 313h1v1h-1zM158 308h1v1h-1zM160 308h1v1h-1zM158 310h1v1h-1zM160 310h1v1h-1zM158 304h1v1h-1zM160 304h1v1h-1zM158 306h1v1h-1zM160 306h1v1h-1zM158 302h1v1h-1zM160 302h1v1h-1zM158 304h1v1h-1zM160 304h1v1h-1zM158 298h1v1h-1zM160 298h1v1h-1zM158 300h1v1h-1zM160 300h1v1h-1zM158 295h1v1h-1zM160 295h1v1h-1zM158 297h1v1h-1zM160 297h1v1h-1zM158 293h1v1h-1zM160 293h1v1h-1zM158 295h1v1h-1zM160 295h1v1h-1zM158 291h1v1h-1zM160 291h1v1h-1zM158 293h1v1h-1zM160 293h1v1h-1zM158 289h1v1h-1zM160 289h1v1h-1zM158 291h1v1h-1zM160 291h1v1h-1zM158 282h1v1h-1zM160 282h1v1h-1zM158 284h1v1h-1zM160 284h1v1h-1zM158 280h1v1h-1zM160 280h1v1h-1zM158 282h1v1h-1zM160 282h1v1h-1zM158 278h1v1h-1zM160 278h1v1h-1zM158 280h1v1h-1zM160 280h1v1h-1zM158 276h1v1h-1zM160 276h1v1h-1zM158 278h1v1h-1zM160 278h1v1h-1zM158 274h1v1h-1zM160 274h1v1h-1zM158 276h1v1h-1zM160 276h1v1h-1zM158 272h1v1h-1zM160 272h1v1h-1zM158 274h1v1h-1zM160 274h1v1h-1zM158 269h1v1h-1zM160 269h1v1h-1zM158 271h1v1h-1zM160 271h1v1h-1zM158 267h1v1h-1zM160 267h1v1h-1zM158 269h1v1h-1zM160 269h1v1h-1zM158 265h1v1h-1zM160 265h1v1h-1zM158 267h1v1h-1zM160 267h1v1h-1zM158 250h1v1h-1zM160 250h1v1h-1zM158 252h1v1h-1zM160 252h1v1h-1zM158 243h1v1h-1zM160 243h1v1h-1zM158 245h1v1h-1zM160 245h1v1h-1zM158 241h1v1h-1zM160 241h1v1h-1zM158 243h1v1h-1zM160 243h1v1h-1zM161 473h1v1h-1zM163 473h1v1h-1zM161 475h1v1h-1zM163 475h1v1h-1zM161 434h1v1h-1zM163 434h1v1h-1zM161 436h1v1h-1zM163 436h1v1h-1zM161 345h1v1h-1zM163 345h1v1h-1zM161 347h1v1h-1zM163 347h1v1h-1zM161 328h1v1h-1zM163 328h1v1h-1zM161 330h1v1h-1zM163 330h1v1h-1zM161 324h1v1h-1zM163 324h1v1h-1zM161 326h1v1h-1zM163 326h1v1h-1zM161 321h1v1h-1zM163 321h1v1h-1zM161 323h1v1h-1zM163 323h1v1h-1zM161 306h1v1h-1zM163 306h1v1h-1zM161 308h1v1h-1zM163 308h1v1h-1zM161 304h1v1h-1zM163 304h1v1h-1zM161 306h1v1h-1zM163 306h1v1h-1zM161 302h1v1h-1zM163 302h1v1h-1zM161 304h1v1h-1zM163 304h1v1h-1zM161 300h1v1h-1zM163 300h1v1h-1zM161 302h1v1h-1zM163 302h1v1h-1zM161 298h1v1h-1zM163 298h1v1h-1zM161 300h1v1h-1zM163 300h1v1h-1zM161 295h1v1h-1zM163 295h1v1h-1zM161 297h1v1h-1zM163 297h1v1h-1zM161 289h1v1h-1zM163 289h1v1h-1zM161 291h1v1h-1zM163 291h1v1h-1zM161 287h1v1h-1zM163 287h1v1h-1zM161 289h1v1h-1zM163 289h1v1h-1zM161 282h1v1h-1zM163 282h1v1h-1zM161 284h1v1h-1zM163 284h1v1h-1zM161 280h1v1h-1zM163 280h1v1h-1zM161 282h1v1h-1zM163 282h1v1h-1zM161 274h1v1h-1zM163 274h1v1h-1zM161 276h1v1h-1zM163 276h1v1h-1zM161 272h1v1h-1zM163 272h1v1h-1zM161 274h1v1h-1zM163 274h1v1h-1zM161 269h1v1h-1zM163 269h1v1h-1zM161 271h1v1h-1zM163 271h1v1h-1zM161 265h1v1h-1zM163 265h1v1h-1zM161 267h1v1h-1zM163 267h1v1h-1zM161 250h1v1h-1zM163 250h1v1h-1zM161 252h1v1h-1zM163 252h1v1h-1zM161 248h1v1h-1zM163 248h1v1h-1zM161 250h1v1h-1zM163 250h1v1h-1zM161 246h1v1h-1zM163 246h1v1h-1zM161 248h1v1h-1zM163 248h1v1h-1zM165 523h1v1h-1zM167 523h1v1h-1zM165 525h1v1h-1zM167 525h1v1h-1zM165 458h1v1h-1zM167 458h1v1h-1zM165 460h1v1h-1zM167 460h1v1h-1zM165 334h1v1h-1zM167 334h1v1h-1zM165 336h1v1h-1zM167 336h1v1h-1zM165 321h1v1h-1zM167 321h1v1h-1zM165 323h1v1h-1zM167 323h1v1h-1zM165 319h1v1h-1zM167 319h1v1h-1zM165 321h1v1h-1zM167 321h1v1h-1zM165 313h1v1h-1zM167 313h1v1h-1zM165 315h1v1h-1zM167 315h1v1h-1zM165 308h1v1h-1zM167 308h1v1h-1zM165 310h1v1h-1zM167 310h1v1h-1zM165 302h1v1h-1zM167 302h1v1h-1zM165 304h1v1h-1zM167 304h1v1h-1zM165 300h1v1h-1zM167 300h1v1h-1zM165 302h1v1h-1zM167 302h1v1h-1zM165 298h1v1h-1zM167 298h1v1h-1zM165 300h1v1h-1zM167 300h1v1h-1zM165 295h1v1h-1zM167 295h1v1h-1zM165 297h1v1h-1zM167 297h1v1h-1zM165 293h1v1h-1zM167 293h1v1h-1zM165 295h1v1h-1zM167 295h1v1h-1zM165 291h1v1h-1zM167 291h1v1h-1zM165 293h1v1h-1zM167 293h1v1h-1zM165 289h1v1h-1zM167 289h1v1h-1zM165 291h1v1h-1zM167 291h1v1h-1zM165 287h1v1h-1zM167 287h1v1h-1zM165 289h1v1h-1zM167 289h1v1h-1zM165 282h1v1h-1zM167 282h1v1h-1zM165 284h1v1h-1zM167 284h1v1h-1zM165 280h1v1h-1zM167 280h1v1h-1zM165 282h1v1h-1zM167 282h1v1h-1zM165 278h1v1h-1zM167 278h1v1h-1zM165 280h1v1h-1zM167 280h1v1h-1zM165 263h1v1h-1zM167 263h1v1h-1zM165 265h1v1h-1zM167 265h1v1h-1zM165 259h1v1h-1zM167 259h1v1h-1zM165 261h1v1h-1zM167 261h1v1h-1zM165 256h1v1h-1zM167 256h1v1h-1zM165 258h1v1h-1zM167 258h1v1h-1zM165 252h1v1h-1zM167 252h1v1h-1zM165 254h1v1h-1zM167 254h1v1h-1zM165 243h1v1h-1zM167 243h1v1h-1zM165 245h1v1h-1zM167 245h1v1h-1zM165 220h1v1h-1zM167 220h1v1h-1zM165 222h1v1h-1zM167 222h1v1h-1zM168 343h1v1h-1zM170 343h1v1h-1zM168 345h1v1h-1zM170 345h1v1h-1zM168 341h1v1h-1zM170 341h1v1h-1zM168 343h1v1h-1zM170 343h1v1h-1zM168 337h1v1h-1zM170 337h1v1h-1zM168 339h1v1h-1zM170 339h1v1h-1zM168 334h1v1h-1zM170 334h1v1h-1zM168 336h1v1h-1zM170 336h1v1h-1zM168 313h1v1h-1zM170 313h1v1h-1zM168 315h1v1h-1zM170 315h1v1h-1zM168 311h1v1h-1zM170 311h1v1h-1zM168 313h1v1h-1zM170 313h1v1h-1zM168 308h1v1h-1zM170 308h1v1h-1zM168 310h1v1h-1zM170 310h1v1h-1zM168 306h1v1h-1zM170 306h1v1h-1zM168 308h1v1h-1zM170 308h1v1h-1zM168 302h1v1h-1zM170 302h1v1h-1zM168 304h1v1h-1zM170 304h1v1h-1zM168 295h1v1h-1zM170 295h1v1h-1zM168 297h1v1h-1zM170 297h1v1h-1zM168 293h1v1h-1zM170 293h1v1h-1zM168 295h1v1h-1zM170 295h1v1h-1zM168 287h1v1h-1zM170 287h1v1h-1zM168 289h1v1h-1zM170 289h1v1h-1zM168 285h1v1h-1zM170 285h1v1h-1zM168 287h1v1h-1zM170 287h1v1h-1zM168 280h1v1h-1zM170 280h1v1h-1zM168 282h1v1h-1zM170 282h1v1h-1zM168 278h1v1h-1zM170 278h1v1h-1zM168 280h1v1h-1zM170 280h1v1h-1zM168 276h1v1h-1zM170 276h1v1h-1zM168 278h1v1h-1zM170 278h1v1h-1zM168 267h1v1h-1zM170 267h1v1h-1zM168 269h1v1h-1zM170 269h1v1h-1zM168 261h1v1h-1zM170 261h1v1h-1zM168 263h1v1h-1zM170 263h1v1h-1zM168 254h1v1h-1zM170 254h1v1h-1zM168 256h1v1h-1zM170 256h1v1h-1zM168 241h1v1h-1zM170 241h1v1h-1zM168 243h1v1h-1zM170 243h1v1h-1zM168 209h1v1h-1zM170 209h1v1h-1zM168 211h1v1h-1zM170 211h1v1h-1zM172 449h1v1h-1zM174 449h1v1h-1zM172 451h1v1h-1zM174 451h1v1h-1zM172 417h1v1h-1zM174 417h1v1h-1zM172 419h1v1h-1zM174 419h1v1h-1zM172 347h1v1h-1zM174 347h1v1h-1zM172 349h1v1h-1zM174 349h1v1h-1zM172 341h1v1h-1zM174 341h1v1h-1zM172 343h1v1h-1zM174 343h1v1h-1zM172 334h1v1h-1zM174 334h1v1h-1zM172 336h1v1h-1zM174 336h1v1h-1zM172 326h1v1h-1zM174 326h1v1h-1zM172 328h1v1h-1zM174 328h1v1h-1zM172 317h1v1h-1zM174 317h1v1h-1zM172 319h1v1h-1zM174 319h1v1h-1zM172 315h1v1h-1zM174 315h1v1h-1zM172 317h1v1h-1zM174 317h1v1h-1zM172 313h1v1h-1zM174 313h1v1h-1zM172 315h1v1h-1zM174 315h1v1h-1zM172 311h1v1h-1zM174 311h1v1h-1zM172 313h1v1h-1zM174 313h1v1h-1zM172 308h1v1h-1zM174 308h1v1h-1zM172 310h1v1h-1zM174 310h1v1h-1zM172 306h1v1h-1zM174 306h1v1h-1zM172 308h1v1h-1zM174 308h1v1h-1zM172 304h1v1h-1zM174 304h1v1h-1zM172 306h1v1h-1zM174 306h1v1h-1zM172 298h1v1h-1zM174 298h1v1h-1zM172 300h1v1h-1zM174 300h1v1h-1zM172 295h1v1h-1zM174 295h1v1h-1zM172 297h1v1h-1zM174 297h1v1h-1zM172 287h1v1h-1zM174 287h1v1h-1zM172 289h1v1h-1zM174 289h1v1h-1zM172 285h1v1h-1zM174 285h1v1h-1zM172 287h1v1h-1zM174 287h1v1h-1zM172 250h1v1h-1zM174 250h1v1h-1zM172 252h1v1h-1zM174 252h1v1h-1zM172 241h1v1h-1zM174 241h1v1h-1zM172 243h1v1h-1zM174 243h1v1h-1zM172 224h1v1h-1zM174 224h1v1h-1zM172 226h1v1h-1zM174 226h1v1h-1zM175 358h1v1h-1zM177 358h1v1h-1zM175 360h1v1h-1zM177 360h1v1h-1zM175 345h1v1h-1zM177 345h1v1h-1zM175 347h1v1h-1zM177 347h1v1h-1zM175 343h1v1h-1zM177 343h1v1h-1zM175 345h1v1h-1zM177 345h1v1h-1zM175 339h1v1h-1zM177 339h1v1h-1zM175 341h1v1h-1zM177 341h1v1h-1zM175 337h1v1h-1zM177 337h1v1h-1zM175 339h1v1h-1zM177 339h1v1h-1zM175 334h1v1h-1zM177 334h1v1h-1zM175 336h1v1h-1zM177 336h1v1h-1zM175 332h1v1h-1zM177 332h1v1h-1zM175 334h1v1h-1zM177 334h1v1h-1zM175 330h1v1h-1zM177 330h1v1h-1zM175 332h1v1h-1zM177 332h1v1h-1zM175 321h1v1h-1zM177 321h1v1h-1zM175 323h1v1h-1zM177 323h1v1h-1zM175 317h1v1h-1zM177 317h1v1h-1zM175 319h1v1h-1zM177 319h1v1h-1zM175 315h1v1h-1zM177 315h1v1h-1zM175 317h1v1h-1zM177 317h1v1h-1zM175 313h1v1h-1zM177 313h1v1h-1zM175 315h1v1h-1zM177 315h1v1h-1zM175 311h1v1h-1zM177 311h1v1h-1zM175 313h1v1h-1zM177 313h1v1h-1zM175 308h1v1h-1zM177 308h1v1h-1zM175 310h1v1h-1zM177 310h1v1h-1zM175 306h1v1h-1zM177 306h1v1h-1zM175 308h1v1h-1zM177 308h1v1h-1zM175 304h1v1h-1zM177 304h1v1h-1zM175 306h1v1h-1zM177 306h1v1h-1zM175 302h1v1h-1zM177 302h1v1h-1zM175 304h1v1h-1zM177 304h1v1h-1zM175 300h1v1h-1zM177 300h1v1h-1zM175 302h1v1h-1zM177 302h1v1h-1zM175 295h1v1h-1zM177 295h1v1h-1zM175 297h1v1h-1zM177 297h1v1h-1zM178 497h1v1h-1zM180 497h1v1h-1zM178 499h1v1h-1zM180 499h1v1h-1zM178 443h1v1h-1zM180 443h1v1h-1zM178 445h1v1h-1zM180 445h1v1h-1zM178 410h1v1h-1zM180 410h1v1h-1zM178 412h1v1h-1zM180 412h1v1h-1zM178 408h1v1h-1zM180 408h1v1h-1zM178 410h1v1h-1zM180 410h1v1h-1zM178 406h1v1h-1zM180 406h1v1h-1zM178 408h1v1h-1zM180 408h1v1h-1zM178 369h1v1h-1zM180 369h1v1h-1zM178 371h1v1h-1zM180 371h1v1h-1zM178 365h1v1h-1zM180 365h1v1h-1zM178 367h1v1h-1zM180 367h1v1h-1zM178 363h1v1h-1zM180 363h1v1h-1zM178 365h1v1h-1zM180 365h1v1h-1zM178 360h1v1h-1zM180 360h1v1h-1zM178 362h1v1h-1zM180 362h1v1h-1zM178 352h1v1h-1zM180 352h1v1h-1zM178 354h1v1h-1zM180 354h1v1h-1zM178 343h1v1h-1zM180 343h1v1h-1zM178 345h1v1h-1zM180 345h1v1h-1zM178 334h1v1h-1zM180 334h1v1h-1zM178 336h1v1h-1zM180 336h1v1h-1zM178 330h1v1h-1zM180 330h1v1h-1zM178 332h1v1h-1zM180 332h1v1h-1zM178 328h1v1h-1zM180 328h1v1h-1zM178 330h1v1h-1zM180 330h1v1h-1zM178 326h1v1h-1zM180 326h1v1h-1zM178 328h1v1h-1zM180 328h1v1h-1zM178 321h1v1h-1zM180 321h1v1h-1zM178 323h1v1h-1zM180 323h1v1h-1zM178 319h1v1h-1zM180 319h1v1h-1zM178 321h1v1h-1zM180 321h1v1h-1zM178 317h1v1h-1zM180 317h1v1h-1zM178 319h1v1h-1zM180 319h1v1h-1zM178 315h1v1h-1zM180 315h1v1h-1zM178 317h1v1h-1zM180 317h1v1h-1zM178 298h1v1h-1zM180 298h1v1h-1zM178 300h1v1h-1zM180 300h1v1h-1zM178 291h1v1h-1zM180 291h1v1h-1zM178 293h1v1h-1zM180 293h1v1h-1zM178 226h1v1h-1zM180 226h1v1h-1zM178 228h1v1h-1zM180 228h1v1h-1zM182 449h1v1h-1zM184 449h1v1h-1zM182 451h1v1h-1zM184 451h1v1h-1zM182 447h1v1h-1zM184 447h1v1h-1zM182 449h1v1h-1zM184 449h1v1h-1zM182 438h1v1h-1zM184 438h1v1h-1zM182 440h1v1h-1zM184 440h1v1h-1zM182 414h1v1h-1zM184 414h1v1h-1zM182 416h1v1h-1zM184 416h1v1h-1zM182 401h1v1h-1zM184 401h1v1h-1zM182 403h1v1h-1zM184 403h1v1h-1zM182 380h1v1h-1zM184 380h1v1h-1zM182 382h1v1h-1zM184 382h1v1h-1zM182 367h1v1h-1zM184 367h1v1h-1zM182 369h1v1h-1zM184 369h1v1h-1zM182 363h1v1h-1zM184 363h1v1h-1zM182 365h1v1h-1zM184 365h1v1h-1zM182 360h1v1h-1zM184 360h1v1h-1zM182 362h1v1h-1zM184 362h1v1h-1zM182 358h1v1h-1zM184 358h1v1h-1zM182 360h1v1h-1zM184 360h1v1h-1zM182 354h1v1h-1zM184 354h1v1h-1zM182 356h1v1h-1zM184 356h1v1h-1zM182 332h1v1h-1zM184 332h1v1h-1zM182 334h1v1h-1zM184 334h1v1h-1zM182 330h1v1h-1zM184 330h1v1h-1zM182 332h1v1h-1zM184 332h1v1h-1zM182 328h1v1h-1zM184 328h1v1h-1zM182 330h1v1h-1zM184 330h1v1h-1zM182 324h1v1h-1zM184 324h1v1h-1zM182 326h1v1h-1zM184 326h1v1h-1zM182 319h1v1h-1zM184 319h1v1h-1zM182 321h1v1h-1zM184 321h1v1h-1zM182 317h1v1h-1zM184 317h1v1h-1zM182 319h1v1h-1zM184 319h1v1h-1zM182 315h1v1h-1zM184 315h1v1h-1zM182 317h1v1h-1zM184 317h1v1h-1zM182 306h1v1h-1zM184 306h1v1h-1zM182 308h1v1h-1zM184 308h1v1h-1zM182 230h1v1h-1zM184 230h1v1h-1zM182 232h1v1h-1zM184 232h1v1h-1zM185 460h1v1h-1zM187 460h1v1h-1zM185 462h1v1h-1zM187 462h1v1h-1zM185 434h1v1h-1zM187 434h1v1h-1zM185 436h1v1h-1zM187 436h1v1h-1zM185 389h1v1h-1zM187 389h1v1h-1zM185 391h1v1h-1zM187 391h1v1h-1zM185 386h1v1h-1zM187 386h1v1h-1zM185 388h1v1h-1zM187 388h1v1h-1zM185 380h1v1h-1zM187 380h1v1h-1zM185 382h1v1h-1zM187 382h1v1h-1zM185 378h1v1h-1zM187 378h1v1h-1zM185 380h1v1h-1zM187 380h1v1h-1zM185 376h1v1h-1zM187 376h1v1h-1zM185 378h1v1h-1zM187 378h1v1h-1zM185 373h1v1h-1zM187 373h1v1h-1zM185 375h1v1h-1zM187 375h1v1h-1zM185 369h1v1h-1zM187 369h1v1h-1zM185 371h1v1h-1zM187 371h1v1h-1zM185 363h1v1h-1zM187 363h1v1h-1zM185 365h1v1h-1zM187 365h1v1h-1zM185 354h1v1h-1zM187 354h1v1h-1zM185 356h1v1h-1zM187 356h1v1h-1zM185 339h1v1h-1zM187 339h1v1h-1zM185 341h1v1h-1zM187 341h1v1h-1zM185 337h1v1h-1zM187 337h1v1h-1zM185 339h1v1h-1zM187 339h1v1h-1zM185 334h1v1h-1zM187 334h1v1h-1zM185 336h1v1h-1zM187 336h1v1h-1zM185 330h1v1h-1zM187 330h1v1h-1zM185 332h1v1h-1zM187 332h1v1h-1zM185 326h1v1h-1zM187 326h1v1h-1zM185 328h1v1h-1zM187 328h1v1h-1zM185 324h1v1h-1zM187 324h1v1h-1zM185 326h1v1h-1zM187 326h1v1h-1zM185 319h1v1h-1zM187 319h1v1h-1zM185 321h1v1h-1zM187 321h1v1h-1zM185 295h1v1h-1zM187 295h1v1h-1zM185 297h1v1h-1zM187 297h1v1h-1zM188 451h1v1h-1zM190 451h1v1h-1zM188 453h1v1h-1zM190 453h1v1h-1zM188 436h1v1h-1zM190 436h1v1h-1zM188 438h1v1h-1zM190 438h1v1h-1zM188 427h1v1h-1zM190 427h1v1h-1zM188 429h1v1h-1zM190 429h1v1h-1zM188 423h1v1h-1zM190 423h1v1h-1zM188 425h1v1h-1zM190 425h1v1h-1zM188 421h1v1h-1zM190 421h1v1h-1zM188 423h1v1h-1zM190 423h1v1h-1zM188 378h1v1h-1zM190 378h1v1h-1zM188 380h1v1h-1zM190 380h1v1h-1zM188 376h1v1h-1zM190 376h1v1h-1zM188 378h1v1h-1zM190 378h1v1h-1zM188 373h1v1h-1zM190 373h1v1h-1zM188 375h1v1h-1zM190 375h1v1h-1zM188 371h1v1h-1zM190 371h1v1h-1zM188 373h1v1h-1zM190 373h1v1h-1zM188 369h1v1h-1zM190 369h1v1h-1zM188 371h1v1h-1zM190 371h1v1h-1zM188 367h1v1h-1zM190 367h1v1h-1zM188 369h1v1h-1zM190 369h1v1h-1zM188 365h1v1h-1zM190 365h1v1h-1zM188 367h1v1h-1zM190 367h1v1h-1zM188 363h1v1h-1zM190 363h1v1h-1zM188 365h1v1h-1zM190 365h1v1h-1zM188 343h1v1h-1zM190 343h1v1h-1zM188 345h1v1h-1zM190 345h1v1h-1zM188 341h1v1h-1zM190 341h1v1h-1zM188 343h1v1h-1zM190 343h1v1h-1zM188 337h1v1h-1zM190 337h1v1h-1zM188 339h1v1h-1zM190 339h1v1h-1zM188 328h1v1h-1zM190 328h1v1h-1zM188 330h1v1h-1zM190 330h1v1h-1zM188 326h1v1h-1zM190 326h1v1h-1zM188 328h1v1h-1zM190 328h1v1h-1zM188 324h1v1h-1zM190 324h1v1h-1zM188 326h1v1h-1zM190 326h1v1h-1zM192 471h1v1h-1zM194 471h1v1h-1zM192 473h1v1h-1zM194 473h1v1h-1zM192 453h1v1h-1zM194 453h1v1h-1zM192 455h1v1h-1zM194 455h1v1h-1zM192 451h1v1h-1zM194 451h1v1h-1zM192 453h1v1h-1zM194 453h1v1h-1zM192 440h1v1h-1zM194 440h1v1h-1zM192 442h1v1h-1zM194 442h1v1h-1zM192 404h1v1h-1zM194 404h1v1h-1zM192 406h1v1h-1zM194 406h1v1h-1zM192 382h1v1h-1zM194 382h1v1h-1zM192 384h1v1h-1zM194 384h1v1h-1zM192 380h1v1h-1zM194 380h1v1h-1zM192 382h1v1h-1zM194 382h1v1h-1zM192 373h1v1h-1zM194 373h1v1h-1zM192 375h1v1h-1zM194 375h1v1h-1zM192 371h1v1h-1zM194 371h1v1h-1zM192 373h1v1h-1zM194 373h1v1h-1zM192 367h1v1h-1zM194 367h1v1h-1zM192 369h1v1h-1zM194 369h1v1h-1zM192 365h1v1h-1zM194 365h1v1h-1zM192 367h1v1h-1zM194 367h1v1h-1zM192 352h1v1h-1zM194 352h1v1h-1zM192 354h1v1h-1zM194 354h1v1h-1zM192 350h1v1h-1zM194 350h1v1h-1zM192 352h1v1h-1zM194 352h1v1h-1zM192 341h1v1h-1zM194 341h1v1h-1zM192 343h1v1h-1zM194 343h1v1h-1zM192 332h1v1h-1zM194 332h1v1h-1zM192 334h1v1h-1zM194 334h1v1h-1zM192 326h1v1h-1zM194 326h1v1h-1zM192 328h1v1h-1zM194 328h1v1h-1zM192 324h1v1h-1zM194 324h1v1h-1zM192 326h1v1h-1zM194 326h1v1h-1zM192 308h1v1h-1zM194 308h1v1h-1zM192 310h1v1h-1zM194 310h1v1h-1zM192 293h1v1h-1zM194 293h1v1h-1zM192 295h1v1h-1zM194 295h1v1h-1zM192 287h1v1h-1zM194 287h1v1h-1zM192 289h1v1h-1zM194 289h1v1h-1zM195 449h1v1h-1zM197 449h1v1h-1zM195 451h1v1h-1zM197 451h1v1h-1zM195 436h1v1h-1zM197 436h1v1h-1zM195 438h1v1h-1zM197 438h1v1h-1zM195 430h1v1h-1zM197 430h1v1h-1zM195 432h1v1h-1zM197 432h1v1h-1zM195 427h1v1h-1zM197 427h1v1h-1zM195 429h1v1h-1zM197 429h1v1h-1zM195 425h1v1h-1zM197 425h1v1h-1zM195 427h1v1h-1zM197 427h1v1h-1zM195 421h1v1h-1zM197 421h1v1h-1zM195 423h1v1h-1zM197 423h1v1h-1zM195 419h1v1h-1zM197 419h1v1h-1zM195 421h1v1h-1zM197 421h1v1h-1zM195 417h1v1h-1zM197 417h1v1h-1zM195 419h1v1h-1zM197 419h1v1h-1zM195 414h1v1h-1zM197 414h1v1h-1zM195 416h1v1h-1zM197 416h1v1h-1zM195 410h1v1h-1zM197 410h1v1h-1zM195 412h1v1h-1zM197 412h1v1h-1zM195 408h1v1h-1zM197 408h1v1h-1zM195 410h1v1h-1zM197 410h1v1h-1zM195 406h1v1h-1zM197 406h1v1h-1zM195 408h1v1h-1zM197 408h1v1h-1zM195 404h1v1h-1zM197 404h1v1h-1zM195 406h1v1h-1zM197 406h1v1h-1zM195 382h1v1h-1zM197 382h1v1h-1zM195 384h1v1h-1zM197 384h1v1h-1zM195 378h1v1h-1zM197 378h1v1h-1zM195 380h1v1h-1zM197 380h1v1h-1zM195 376h1v1h-1zM197 376h1v1h-1zM195 378h1v1h-1zM197 378h1v1h-1zM195 373h1v1h-1zM197 373h1v1h-1zM195 375h1v1h-1zM197 375h1v1h-1zM195 371h1v1h-1zM197 371h1v1h-1zM195 373h1v1h-1zM197 373h1v1h-1zM195 369h1v1h-1zM197 369h1v1h-1zM195 371h1v1h-1zM197 371h1v1h-1zM195 367h1v1h-1zM197 367h1v1h-1zM195 369h1v1h-1zM197 369h1v1h-1zM195 365h1v1h-1zM197 365h1v1h-1zM195 367h1v1h-1zM197 367h1v1h-1zM195 360h1v1h-1zM197 360h1v1h-1zM195 362h1v1h-1zM197 362h1v1h-1zM195 356h1v1h-1zM197 356h1v1h-1zM195 358h1v1h-1zM197 358h1v1h-1zM195 345h1v1h-1zM197 345h1v1h-1zM195 347h1v1h-1zM197 347h1v1h-1zM195 337h1v1h-1zM197 337h1v1h-1zM195 339h1v1h-1zM197 339h1v1h-1zM195 330h1v1h-1zM197 330h1v1h-1zM195 332h1v1h-1zM197 332h1v1h-1zM195 308h1v1h-1zM197 308h1v1h-1zM195 310h1v1h-1zM197 310h1v1h-1zM195 280h1v1h-1zM197 280h1v1h-1zM195 282h1v1h-1zM197 282h1v1h-1zM198 462h1v1h-1zM200 462h1v1h-1zM198 464h1v1h-1zM200 464h1v1h-1zM198 460h1v1h-1zM200 460h1v1h-1zM198 462h1v1h-1zM200 462h1v1h-1zM198 458h1v1h-1zM200 458h1v1h-1zM198 460h1v1h-1zM200 460h1v1h-1zM198 438h1v1h-1zM200 438h1v1h-1zM198 440h1v1h-1zM200 440h1v1h-1zM198 434h1v1h-1zM200 434h1v1h-1zM198 436h1v1h-1zM200 436h1v1h-1zM198 432h1v1h-1zM200 432h1v1h-1zM198 434h1v1h-1zM200 434h1v1h-1zM198 430h1v1h-1zM200 430h1v1h-1zM198 432h1v1h-1zM200 432h1v1h-1zM198 427h1v1h-1zM200 427h1v1h-1zM198 429h1v1h-1zM200 429h1v1h-1zM198 425h1v1h-1zM200 425h1v1h-1zM198 427h1v1h-1zM200 427h1v1h-1zM198 423h1v1h-1zM200 423h1v1h-1zM198 425h1v1h-1zM200 425h1v1h-1zM198 421h1v1h-1zM200 421h1v1h-1zM198 423h1v1h-1zM200 423h1v1h-1zM198 419h1v1h-1zM200 419h1v1h-1zM198 421h1v1h-1zM200 421h1v1h-1zM198 417h1v1h-1zM200 417h1v1h-1zM198 419h1v1h-1zM200 419h1v1h-1zM198 414h1v1h-1zM200 414h1v1h-1zM198 416h1v1h-1zM200 416h1v1h-1zM198 408h1v1h-1zM200 408h1v1h-1zM198 410h1v1h-1zM200 410h1v1h-1zM198 406h1v1h-1zM200 406h1v1h-1zM198 408h1v1h-1zM200 408h1v1h-1zM198 404h1v1h-1zM200 404h1v1h-1zM198 406h1v1h-1zM200 406h1v1h-1zM198 397h1v1h-1zM200 397h1v1h-1zM198 399h1v1h-1zM200 399h1v1h-1zM198 384h1v1h-1zM200 384h1v1h-1zM198 386h1v1h-1zM200 386h1v1h-1zM198 382h1v1h-1zM200 382h1v1h-1zM198 384h1v1h-1zM200 384h1v1h-1zM198 380h1v1h-1zM200 380h1v1h-1zM198 382h1v1h-1zM200 382h1v1h-1zM198 376h1v1h-1zM200 376h1v1h-1zM198 378h1v1h-1zM200 378h1v1h-1zM198 373h1v1h-1zM200 373h1v1h-1zM198 375h1v1h-1zM200 375h1v1h-1zM198 369h1v1h-1zM200 369h1v1h-1zM198 371h1v1h-1zM200 371h1v1h-1zM198 367h1v1h-1zM200 367h1v1h-1zM198 369h1v1h-1zM200 369h1v1h-1zM198 365h1v1h-1zM200 365h1v1h-1zM198 367h1v1h-1zM200 367h1v1h-1zM198 360h1v1h-1zM200 360h1v1h-1zM198 362h1v1h-1zM200 362h1v1h-1zM198 352h1v1h-1zM200 352h1v1h-1zM198 354h1v1h-1zM200 354h1v1h-1zM198 350h1v1h-1zM200 350h1v1h-1zM198 352h1v1h-1zM200 352h1v1h-1zM198 347h1v1h-1zM200 347h1v1h-1zM198 349h1v1h-1zM200 349h1v1h-1zM198 339h1v1h-1zM200 339h1v1h-1zM198 341h1v1h-1zM200 341h1v1h-1zM198 311h1v1h-1zM200 311h1v1h-1zM198 313h1v1h-1zM200 313h1v1h-1zM202 447h1v1h-1zM204 447h1v1h-1zM202 449h1v1h-1zM204 449h1v1h-1zM202 445h1v1h-1zM204 445h1v1h-1zM202 447h1v1h-1zM204 447h1v1h-1zM202 438h1v1h-1zM204 438h1v1h-1zM202 440h1v1h-1zM204 440h1v1h-1zM202 436h1v1h-1zM204 436h1v1h-1zM202 438h1v1h-1zM204 438h1v1h-1zM202 432h1v1h-1zM204 432h1v1h-1zM202 434h1v1h-1zM204 434h1v1h-1zM202 430h1v1h-1zM204 430h1v1h-1zM202 432h1v1h-1zM204 432h1v1h-1zM202 427h1v1h-1zM204 427h1v1h-1zM202 429h1v1h-1zM204 429h1v1h-1zM202 425h1v1h-1zM204 425h1v1h-1zM202 427h1v1h-1zM204 427h1v1h-1zM202 421h1v1h-1zM204 421h1v1h-1zM202 423h1v1h-1zM204 423h1v1h-1zM202 419h1v1h-1zM204 419h1v1h-1zM202 421h1v1h-1zM204 421h1v1h-1zM202 417h1v1h-1zM204 417h1v1h-1zM202 419h1v1h-1zM204 419h1v1h-1zM202 414h1v1h-1zM204 414h1v1h-1zM202 416h1v1h-1zM204 416h1v1h-1zM202 412h1v1h-1zM204 412h1v1h-1zM202 414h1v1h-1zM204 414h1v1h-1zM202 410h1v1h-1zM204 410h1v1h-1zM202 412h1v1h-1zM204 412h1v1h-1zM202 408h1v1h-1zM204 408h1v1h-1zM202 410h1v1h-1zM204 410h1v1h-1zM202 406h1v1h-1zM204 406h1v1h-1zM202 408h1v1h-1zM204 408h1v1h-1zM202 404h1v1h-1zM204 404h1v1h-1zM202 406h1v1h-1zM204 406h1v1h-1zM202 395h1v1h-1zM204 395h1v1h-1zM202 397h1v1h-1zM204 397h1v1h-1zM202 389h1v1h-1zM204 389h1v1h-1zM202 391h1v1h-1zM204 391h1v1h-1zM202 382h1v1h-1zM204 382h1v1h-1zM202 384h1v1h-1zM204 384h1v1h-1zM202 376h1v1h-1zM204 376h1v1h-1zM202 378h1v1h-1zM204 378h1v1h-1zM202 373h1v1h-1zM204 373h1v1h-1zM202 375h1v1h-1zM204 375h1v1h-1zM202 371h1v1h-1zM204 371h1v1h-1zM202 373h1v1h-1zM204 373h1v1h-1zM202 369h1v1h-1zM204 369h1v1h-1zM202 371h1v1h-1zM204 371h1v1h-1zM202 367h1v1h-1zM204 367h1v1h-1zM202 369h1v1h-1zM204 369h1v1h-1zM202 360h1v1h-1zM204 360h1v1h-1zM202 362h1v1h-1zM204 362h1v1h-1zM202 358h1v1h-1zM204 358h1v1h-1zM202 360h1v1h-1zM204 360h1v1h-1zM202 352h1v1h-1zM204 352h1v1h-1zM202 354h1v1h-1zM204 354h1v1h-1zM202 347h1v1h-1zM204 347h1v1h-1zM202 349h1v1h-1zM204 349h1v1h-1zM202 345h1v1h-1zM204 345h1v1h-1zM202 347h1v1h-1zM204 347h1v1h-1zM202 341h1v1h-1zM204 341h1v1h-1zM202 343h1v1h-1zM204 343h1v1h-1zM202 339h1v1h-1zM204 339h1v1h-1zM202 341h1v1h-1zM204 341h1v1h-1zM205 497h1v1h-1zM207 497h1v1h-1zM205 499h1v1h-1zM207 499h1v1h-1zM205 479h1v1h-1zM207 479h1v1h-1zM205 481h1v1h-1zM207 481h1v1h-1zM205 462h1v1h-1zM207 462h1v1h-1zM205 464h1v1h-1zM207 464h1v1h-1zM205 453h1v1h-1zM207 453h1v1h-1zM205 455h1v1h-1zM207 455h1v1h-1zM205 449h1v1h-1zM207 449h1v1h-1zM205 451h1v1h-1zM207 451h1v1h-1zM205 447h1v1h-1zM207 447h1v1h-1zM205 449h1v1h-1zM207 449h1v1h-1zM205 440h1v1h-1zM207 440h1v1h-1zM205 442h1v1h-1zM207 442h1v1h-1zM205 438h1v1h-1zM207 438h1v1h-1zM205 440h1v1h-1zM207 440h1v1h-1zM205 436h1v1h-1zM207 436h1v1h-1zM205 438h1v1h-1zM207 438h1v1h-1zM205 434h1v1h-1zM207 434h1v1h-1zM205 436h1v1h-1zM207 436h1v1h-1zM205 432h1v1h-1zM207 432h1v1h-1zM205 434h1v1h-1zM207 434h1v1h-1zM205 430h1v1h-1zM207 430h1v1h-1zM205 432h1v1h-1zM207 432h1v1h-1zM205 427h1v1h-1zM207 427h1v1h-1zM205 429h1v1h-1zM207 429h1v1h-1zM205 425h1v1h-1zM207 425h1v1h-1zM205 427h1v1h-1zM207 427h1v1h-1zM205 423h1v1h-1zM207 423h1v1h-1zM205 425h1v1h-1zM207 425h1v1h-1zM205 421h1v1h-1zM207 421h1v1h-1zM205 423h1v1h-1zM207 423h1v1h-1zM205 419h1v1h-1zM207 419h1v1h-1zM205 421h1v1h-1zM207 421h1v1h-1zM205 417h1v1h-1zM207 417h1v1h-1zM205 419h1v1h-1zM207 419h1v1h-1zM205 414h1v1h-1zM207 414h1v1h-1zM205 416h1v1h-1zM207 416h1v1h-1zM205 412h1v1h-1zM207 412h1v1h-1zM205 414h1v1h-1zM207 414h1v1h-1zM205 410h1v1h-1zM207 410h1v1h-1zM205 412h1v1h-1zM207 412h1v1h-1zM205 408h1v1h-1zM207 408h1v1h-1zM205 410h1v1h-1zM207 410h1v1h-1zM205 406h1v1h-1zM207 406h1v1h-1zM205 408h1v1h-1zM207 408h1v1h-1zM205 404h1v1h-1zM207 404h1v1h-1zM205 406h1v1h-1zM207 406h1v1h-1zM205 401h1v1h-1zM207 401h1v1h-1zM205 403h1v1h-1zM207 403h1v1h-1zM205 399h1v1h-1zM207 399h1v1h-1zM205 401h1v1h-1zM207 401h1v1h-1zM205 397h1v1h-1zM207 397h1v1h-1zM205 399h1v1h-1zM207 399h1v1h-1zM205 395h1v1h-1zM207 395h1v1h-1zM205 397h1v1h-1zM207 397h1v1h-1zM205 389h1v1h-1zM207 389h1v1h-1zM205 391h1v1h-1zM207 391h1v1h-1zM205 380h1v1h-1zM207 380h1v1h-1zM205 382h1v1h-1zM207 382h1v1h-1zM205 378h1v1h-1zM207 378h1v1h-1zM205 380h1v1h-1zM207 380h1v1h-1zM205 369h1v1h-1zM207 369h1v1h-1zM205 371h1v1h-1zM207 371h1v1h-1zM205 365h1v1h-1zM207 365h1v1h-1zM205 367h1v1h-1zM207 367h1v1h-1zM205 356h1v1h-1zM207 356h1v1h-1zM205 358h1v1h-1zM207 358h1v1h-1zM205 354h1v1h-1zM207 354h1v1h-1zM205 356h1v1h-1zM207 356h1v1h-1zM205 352h1v1h-1zM207 352h1v1h-1zM205 354h1v1h-1zM207 354h1v1h-1zM205 343h1v1h-1zM207 343h1v1h-1zM205 345h1v1h-1zM207 345h1v1h-1zM205 341h1v1h-1zM207 341h1v1h-1zM205 343h1v1h-1zM207 343h1v1h-1zM205 293h1v1h-1zM207 293h1v1h-1zM205 295h1v1h-1zM207 295h1v1h-1zM205 172h1v1h-1zM207 172h1v1h-1zM205 174h1v1h-1zM207 174h1v1h-1zM209 482h1v1h-1zM211 482h1v1h-1zM209 484h1v1h-1zM211 484h1v1h-1zM209 460h1v1h-1zM211 460h1v1h-1zM209 462h1v1h-1zM211 462h1v1h-1zM209 453h1v1h-1zM211 453h1v1h-1zM209 455h1v1h-1zM211 455h1v1h-1zM209 449h1v1h-1zM211 449h1v1h-1zM209 451h1v1h-1zM211 451h1v1h-1zM209 440h1v1h-1zM211 440h1v1h-1zM209 442h1v1h-1zM211 442h1v1h-1zM209 438h1v1h-1zM211 438h1v1h-1zM209 440h1v1h-1zM211 440h1v1h-1zM209 436h1v1h-1zM211 436h1v1h-1zM209 438h1v1h-1zM211 438h1v1h-1zM209 434h1v1h-1zM211 434h1v1h-1zM209 436h1v1h-1zM211 436h1v1h-1zM209 432h1v1h-1zM211 432h1v1h-1zM209 434h1v1h-1zM211 434h1v1h-1zM209 430h1v1h-1zM211 430h1v1h-1zM209 432h1v1h-1zM211 432h1v1h-1zM209 427h1v1h-1zM211 427h1v1h-1zM209 429h1v1h-1zM211 429h1v1h-1zM209 425h1v1h-1zM211 425h1v1h-1zM209 427h1v1h-1zM211 427h1v1h-1zM209 423h1v1h-1zM211 423h1v1h-1zM209 425h1v1h-1zM211 425h1v1h-1zM209 421h1v1h-1zM211 421h1v1h-1zM209 423h1v1h-1zM211 423h1v1h-1zM209 419h1v1h-1zM211 419h1v1h-1zM209 421h1v1h-1zM211 421h1v1h-1zM209 417h1v1h-1zM211 417h1v1h-1zM209 419h1v1h-1zM211 419h1v1h-1zM209 414h1v1h-1zM211 414h1v1h-1zM209 416h1v1h-1zM211 416h1v1h-1zM209 412h1v1h-1zM211 412h1v1h-1zM209 414h1v1h-1zM211 414h1v1h-1zM209 410h1v1h-1zM211 410h1v1h-1zM209 412h1v1h-1zM211 412h1v1h-1zM209 408h1v1h-1zM211 408h1v1h-1zM209 410h1v1h-1zM211 410h1v1h-1zM209 406h1v1h-1zM211 406h1v1h-1zM209 408h1v1h-1zM211 408h1v1h-1zM209 404h1v1h-1zM211 404h1v1h-1zM209 406h1v1h-1zM211 406h1v1h-1zM209 401h1v1h-1zM211 401h1v1h-1zM209 403h1v1h-1zM211 403h1v1h-1zM209 399h1v1h-1zM211 399h1v1h-1zM209 401h1v1h-1zM211 401h1v1h-1zM209 397h1v1h-1zM211 397h1v1h-1zM209 399h1v1h-1zM211 399h1v1h-1zM209 395h1v1h-1zM211 395h1v1h-1zM209 397h1v1h-1zM211 397h1v1h-1zM209 393h1v1h-1zM211 393h1v1h-1zM209 395h1v1h-1zM211 395h1v1h-1zM209 389h1v1h-1zM211 389h1v1h-1zM209 391h1v1h-1zM211 391h1v1h-1zM209 380h1v1h-1zM211 380h1v1h-1zM209 382h1v1h-1zM211 382h1v1h-1zM209 376h1v1h-1zM211 376h1v1h-1zM209 378h1v1h-1zM211 378h1v1h-1zM209 371h1v1h-1zM211 371h1v1h-1zM209 373h1v1h-1zM211 373h1v1h-1zM209 360h1v1h-1zM211 360h1v1h-1zM209 362h1v1h-1zM211 362h1v1h-1zM209 350h1v1h-1zM211 350h1v1h-1zM209 352h1v1h-1zM211 352h1v1h-1zM212 473h1v1h-1zM214 473h1v1h-1zM212 475h1v1h-1zM214 475h1v1h-1zM212 462h1v1h-1zM214 462h1v1h-1zM212 464h1v1h-1zM214 464h1v1h-1zM212 458h1v1h-1zM214 458h1v1h-1zM212 460h1v1h-1zM214 460h1v1h-1zM212 451h1v1h-1zM214 451h1v1h-1zM212 453h1v1h-1zM214 453h1v1h-1zM212 449h1v1h-1zM214 449h1v1h-1zM212 451h1v1h-1zM214 451h1v1h-1zM212 445h1v1h-1zM214 445h1v1h-1zM212 447h1v1h-1zM214 447h1v1h-1zM212 443h1v1h-1zM214 443h1v1h-1zM212 445h1v1h-1zM214 445h1v1h-1zM212 440h1v1h-1zM214 440h1v1h-1zM212 442h1v1h-1zM214 442h1v1h-1zM212 438h1v1h-1zM214 438h1v1h-1zM212 440h1v1h-1zM214 440h1v1h-1zM212 436h1v1h-1zM214 436h1v1h-1zM212 438h1v1h-1zM214 438h1v1h-1zM212 434h1v1h-1zM214 434h1v1h-1zM212 436h1v1h-1zM214 436h1v1h-1zM212 432h1v1h-1zM214 432h1v1h-1zM212 434h1v1h-1zM214 434h1v1h-1zM212 430h1v1h-1zM214 430h1v1h-1zM212 432h1v1h-1zM214 432h1v1h-1zM212 427h1v1h-1zM214 427h1v1h-1zM212 429h1v1h-1zM214 429h1v1h-1zM212 425h1v1h-1zM214 425h1v1h-1zM212 427h1v1h-1zM214 427h1v1h-1zM212 423h1v1h-1zM214 423h1v1h-1zM212 425h1v1h-1zM214 425h1v1h-1zM212 421h1v1h-1zM214 421h1v1h-1zM212 423h1v1h-1zM214 423h1v1h-1zM212 419h1v1h-1zM214 419h1v1h-1zM212 421h1v1h-1zM214 421h1v1h-1zM212 417h1v1h-1zM214 417h1v1h-1zM212 419h1v1h-1zM214 419h1v1h-1zM212 414h1v1h-1zM214 414h1v1h-1zM212 416h1v1h-1zM214 416h1v1h-1zM212 412h1v1h-1zM214 412h1v1h-1zM212 414h1v1h-1zM214 414h1v1h-1zM212 410h1v1h-1zM214 410h1v1h-1zM212 412h1v1h-1zM214 412h1v1h-1zM212 408h1v1h-1zM214 408h1v1h-1zM212 410h1v1h-1zM214 410h1v1h-1zM212 404h1v1h-1zM214 404h1v1h-1zM212 406h1v1h-1zM214 406h1v1h-1zM212 401h1v1h-1zM214 401h1v1h-1zM212 403h1v1h-1zM214 403h1v1h-1zM212 399h1v1h-1zM214 399h1v1h-1zM212 401h1v1h-1zM214 401h1v1h-1zM212 397h1v1h-1zM214 397h1v1h-1zM212 399h1v1h-1zM214 399h1v1h-1zM212 391h1v1h-1zM214 391h1v1h-1zM212 393h1v1h-1zM214 393h1v1h-1zM212 384h1v1h-1zM214 384h1v1h-1zM212 386h1v1h-1zM214 386h1v1h-1zM212 380h1v1h-1zM214 380h1v1h-1zM212 382h1v1h-1zM214 382h1v1h-1zM212 376h1v1h-1zM214 376h1v1h-1zM212 378h1v1h-1zM214 378h1v1h-1zM212 363h1v1h-1zM214 363h1v1h-1zM212 365h1v1h-1zM214 365h1v1h-1zM212 360h1v1h-1zM214 360h1v1h-1zM212 362h1v1h-1zM214 362h1v1h-1zM212 358h1v1h-1zM214 358h1v1h-1zM212 360h1v1h-1zM214 360h1v1h-1zM212 300h1v1h-1zM214 300h1v1h-1zM212 302h1v1h-1zM214 302h1v1h-1zM212 287h1v1h-1zM214 287h1v1h-1zM212 289h1v1h-1zM214 289h1v1h-1zM212 276h1v1h-1zM214 276h1v1h-1zM212 278h1v1h-1zM214 278h1v1h-1zM212 250h1v1h-1zM214 250h1v1h-1zM212 252h1v1h-1zM214 252h1v1h-1zM215 466h1v1h-1zM217 466h1v1h-1zM215 468h1v1h-1zM217 468h1v1h-1zM215 464h1v1h-1zM217 464h1v1h-1zM215 466h1v1h-1zM217 466h1v1h-1zM215 462h1v1h-1zM217 462h1v1h-1zM215 464h1v1h-1zM217 464h1v1h-1zM215 460h1v1h-1zM217 460h1v1h-1zM215 462h1v1h-1zM217 462h1v1h-1zM215 458h1v1h-1zM217 458h1v1h-1zM215 460h1v1h-1zM217 460h1v1h-1zM215 456h1v1h-1zM217 456h1v1h-1zM215 458h1v1h-1zM217 458h1v1h-1zM215 451h1v1h-1zM217 451h1v1h-1zM215 453h1v1h-1zM217 453h1v1h-1zM215 449h1v1h-1zM217 449h1v1h-1zM215 451h1v1h-1zM217 451h1v1h-1zM215 447h1v1h-1zM217 447h1v1h-1zM215 449h1v1h-1zM217 449h1v1h-1zM215 445h1v1h-1zM217 445h1v1h-1zM215 447h1v1h-1zM217 447h1v1h-1zM215 443h1v1h-1zM217 443h1v1h-1zM215 445h1v1h-1zM217 445h1v1h-1zM215 440h1v1h-1zM217 440h1v1h-1zM215 442h1v1h-1zM217 442h1v1h-1zM215 438h1v1h-1zM217 438h1v1h-1zM215 440h1v1h-1zM217 440h1v1h-1zM215 436h1v1h-1zM217 436h1v1h-1zM215 438h1v1h-1zM217 438h1v1h-1zM215 434h1v1h-1zM217 434h1v1h-1zM215 436h1v1h-1zM217 436h1v1h-1zM215 432h1v1h-1zM217 432h1v1h-1zM215 434h1v1h-1zM217 434h1v1h-1zM215 430h1v1h-1zM217 430h1v1h-1zM215 432h1v1h-1zM217 432h1v1h-1zM215 427h1v1h-1zM217 427h1v1h-1zM215 429h1v1h-1zM217 429h1v1h-1zM215 425h1v1h-1zM217 425h1v1h-1zM215 427h1v1h-1zM217 427h1v1h-1zM215 423h1v1h-1zM217 423h1v1h-1zM215 425h1v1h-1zM217 425h1v1h-1zM215 421h1v1h-1zM217 421h1v1h-1zM215 423h1v1h-1zM217 423h1v1h-1zM215 419h1v1h-1zM217 419h1v1h-1zM215 421h1v1h-1zM217 421h1v1h-1zM215 417h1v1h-1zM217 417h1v1h-1zM215 419h1v1h-1zM217 419h1v1h-1zM215 414h1v1h-1zM217 414h1v1h-1zM215 416h1v1h-1zM217 416h1v1h-1zM215 412h1v1h-1zM217 412h1v1h-1zM215 414h1v1h-1zM217 414h1v1h-1zM215 410h1v1h-1zM217 410h1v1h-1zM215 412h1v1h-1zM217 412h1v1h-1zM215 408h1v1h-1zM217 408h1v1h-1zM215 410h1v1h-1zM217 410h1v1h-1zM215 406h1v1h-1zM217 406h1v1h-1zM215 408h1v1h-1zM217 408h1v1h-1zM215 404h1v1h-1zM217 404h1v1h-1zM215 406h1v1h-1zM217 406h1v1h-1zM215 401h1v1h-1zM217 401h1v1h-1zM215 403h1v1h-1zM217 403h1v1h-1zM215 399h1v1h-1zM217 399h1v1h-1zM215 401h1v1h-1zM217 401h1v1h-1zM215 397h1v1h-1zM217 397h1v1h-1zM215 399h1v1h-1zM217 399h1v1h-1zM215 395h1v1h-1zM217 395h1v1h-1zM215 397h1v1h-1zM217 397h1v1h-1zM215 393h1v1h-1zM217 393h1v1h-1zM215 395h1v1h-1zM217 395h1v1h-1zM215 391h1v1h-1zM217 391h1v1h-1zM215 393h1v1h-1zM217 393h1v1h-1zM215 386h1v1h-1zM217 386h1v1h-1zM215 388h1v1h-1zM217 388h1v1h-1zM215 380h1v1h-1zM217 380h1v1h-1zM215 382h1v1h-1zM217 382h1v1h-1zM215 378h1v1h-1zM217 378h1v1h-1zM215 380h1v1h-1zM217 380h1v1h-1zM215 369h1v1h-1zM217 369h1v1h-1zM215 371h1v1h-1zM217 371h1v1h-1zM215 367h1v1h-1zM217 367h1v1h-1zM215 369h1v1h-1zM217 369h1v1h-1zM219 497h1v1h-1zM221 497h1v1h-1zM219 499h1v1h-1zM221 499h1v1h-1zM219 484h1v1h-1zM221 484h1v1h-1zM219 486h1v1h-1zM221 486h1v1h-1zM219 479h1v1h-1zM221 479h1v1h-1zM219 481h1v1h-1zM221 481h1v1h-1zM219 471h1v1h-1zM221 471h1v1h-1zM219 473h1v1h-1zM221 473h1v1h-1zM219 458h1v1h-1zM221 458h1v1h-1zM219 460h1v1h-1zM221 460h1v1h-1zM219 456h1v1h-1zM221 456h1v1h-1zM219 458h1v1h-1zM221 458h1v1h-1zM219 453h1v1h-1zM221 453h1v1h-1zM219 455h1v1h-1zM221 455h1v1h-1zM219 451h1v1h-1zM221 451h1v1h-1zM219 453h1v1h-1zM221 453h1v1h-1zM219 449h1v1h-1zM221 449h1v1h-1zM219 451h1v1h-1zM221 451h1v1h-1zM219 447h1v1h-1zM221 447h1v1h-1zM219 449h1v1h-1zM221 449h1v1h-1zM219 445h1v1h-1zM221 445h1v1h-1zM219 447h1v1h-1zM221 447h1v1h-1zM219 443h1v1h-1zM221 443h1v1h-1zM219 445h1v1h-1zM221 445h1v1h-1zM219 440h1v1h-1zM221 440h1v1h-1zM219 442h1v1h-1zM221 442h1v1h-1zM219 438h1v1h-1zM221 438h1v1h-1zM219 440h1v1h-1zM221 440h1v1h-1zM219 436h1v1h-1zM221 436h1v1h-1zM219 438h1v1h-1zM221 438h1v1h-1zM219 434h1v1h-1zM221 434h1v1h-1zM219 436h1v1h-1zM221 436h1v1h-1zM219 432h1v1h-1zM221 432h1v1h-1zM219 434h1v1h-1zM221 434h1v1h-1zM219 430h1v1h-1zM221 430h1v1h-1zM219 432h1v1h-1zM221 432h1v1h-1zM219 427h1v1h-1zM221 427h1v1h-1zM219 429h1v1h-1zM221 429h1v1h-1zM219 425h1v1h-1zM221 425h1v1h-1zM219 427h1v1h-1zM221 427h1v1h-1zM219 421h1v1h-1zM221 421h1v1h-1zM219 423h1v1h-1zM221 423h1v1h-1zM219 419h1v1h-1zM221 419h1v1h-1zM219 421h1v1h-1zM221 421h1v1h-1zM219 417h1v1h-1zM221 417h1v1h-1zM219 419h1v1h-1zM221 419h1v1h-1zM219 414h1v1h-1zM221 414h1v1h-1zM219 416h1v1h-1zM221 416h1v1h-1zM219 412h1v1h-1zM221 412h1v1h-1zM219 414h1v1h-1zM221 414h1v1h-1zM219 410h1v1h-1zM221 410h1v1h-1zM219 412h1v1h-1zM221 412h1v1h-1zM219 408h1v1h-1zM221 408h1v1h-1zM219 410h1v1h-1zM221 410h1v1h-1zM219 406h1v1h-1zM221 406h1v1h-1zM219 408h1v1h-1zM221 408h1v1h-1zM219 404h1v1h-1zM221 404h1v1h-1zM219 406h1v1h-1zM221 406h1v1h-1zM219 401h1v1h-1zM221 401h1v1h-1zM219 403h1v1h-1zM221 403h1v1h-1zM219 399h1v1h-1zM221 399h1v1h-1zM219 401h1v1h-1zM221 401h1v1h-1zM219 397h1v1h-1zM221 397h1v1h-1zM219 399h1v1h-1zM221 399h1v1h-1zM219 395h1v1h-1zM221 395h1v1h-1zM219 397h1v1h-1zM221 397h1v1h-1zM219 280h1v1h-1zM221 280h1v1h-1zM219 282h1v1h-1zM221 282h1v1h-1zM222 477h1v1h-1zM224 477h1v1h-1zM222 479h1v1h-1zM224 479h1v1h-1zM222 473h1v1h-1zM224 473h1v1h-1zM222 475h1v1h-1zM224 475h1v1h-1zM222 471h1v1h-1zM224 471h1v1h-1zM222 473h1v1h-1zM224 473h1v1h-1zM222 469h1v1h-1zM224 469h1v1h-1zM222 471h1v1h-1zM224 471h1v1h-1zM222 466h1v1h-1zM224 466h1v1h-1zM222 468h1v1h-1zM224 468h1v1h-1zM222 464h1v1h-1zM224 464h1v1h-1zM222 466h1v1h-1zM224 466h1v1h-1zM222 462h1v1h-1zM224 462h1v1h-1zM222 464h1v1h-1zM224 464h1v1h-1zM222 460h1v1h-1zM224 460h1v1h-1zM222 462h1v1h-1zM224 462h1v1h-1zM222 458h1v1h-1zM224 458h1v1h-1zM222 460h1v1h-1zM224 460h1v1h-1zM222 456h1v1h-1zM224 456h1v1h-1zM222 458h1v1h-1zM224 458h1v1h-1zM222 453h1v1h-1zM224 453h1v1h-1zM222 455h1v1h-1zM224 455h1v1h-1zM222 451h1v1h-1zM224 451h1v1h-1zM222 453h1v1h-1zM224 453h1v1h-1zM222 449h1v1h-1zM224 449h1v1h-1zM222 451h1v1h-1zM224 451h1v1h-1zM222 447h1v1h-1zM224 447h1v1h-1zM222 449h1v1h-1zM224 449h1v1h-1zM222 445h1v1h-1zM224 445h1v1h-1zM222 447h1v1h-1zM224 447h1v1h-1zM222 443h1v1h-1zM224 443h1v1h-1zM222 445h1v1h-1zM224 445h1v1h-1zM222 440h1v1h-1zM224 440h1v1h-1zM222 442h1v1h-1zM224 442h1v1h-1zM222 438h1v1h-1zM224 438h1v1h-1zM222 440h1v1h-1zM224 440h1v1h-1zM222 436h1v1h-1zM224 436h1v1h-1zM222 438h1v1h-1zM224 438h1v1h-1zM222 434h1v1h-1zM224 434h1v1h-1zM222 436h1v1h-1zM224 436h1v1h-1zM222 432h1v1h-1zM224 432h1v1h-1zM222 434h1v1h-1zM224 434h1v1h-1zM222 430h1v1h-1zM224 430h1v1h-1zM222 432h1v1h-1zM224 432h1v1h-1zM222 427h1v1h-1zM224 427h1v1h-1zM222 429h1v1h-1zM224 429h1v1h-1zM222 425h1v1h-1zM224 425h1v1h-1zM222 427h1v1h-1zM224 427h1v1h-1zM222 423h1v1h-1zM224 423h1v1h-1zM222 425h1v1h-1zM224 425h1v1h-1zM222 421h1v1h-1zM224 421h1v1h-1zM222 423h1v1h-1zM224 423h1v1h-1zM222 419h1v1h-1zM224 419h1v1h-1zM222 421h1v1h-1zM224 421h1v1h-1zM222 417h1v1h-1zM224 417h1v1h-1zM222 419h1v1h-1zM224 419h1v1h-1zM222 414h1v1h-1zM224 414h1v1h-1zM222 416h1v1h-1zM224 416h1v1h-1zM222 412h1v1h-1zM224 412h1v1h-1zM222 414h1v1h-1zM224 414h1v1h-1zM222 410h1v1h-1zM224 410h1v1h-1zM222 412h1v1h-1zM224 412h1v1h-1zM222 408h1v1h-1zM224 408h1v1h-1zM222 410h1v1h-1zM224 410h1v1h-1zM222 406h1v1h-1zM224 406h1v1h-1zM222 408h1v1h-1zM224 408h1v1h-1zM222 404h1v1h-1zM224 404h1v1h-1zM222 406h1v1h-1zM224 406h1v1h-1zM222 401h1v1h-1zM224 401h1v1h-1zM222 403h1v1h-1zM224 403h1v1h-1zM222 399h1v1h-1zM224 399h1v1h-1zM222 401h1v1h-1zM224 401h1v1h-1zM222 397h1v1h-1zM224 397h1v1h-1zM222 399h1v1h-1zM224 399h1v1h-1zM222 395h1v1h-1zM224 395h1v1h-1zM222 397h1v1h-1zM224 397h1v1h-1zM222 391h1v1h-1zM224 391h1v1h-1zM222 393h1v1h-1zM224 393h1v1h-1zM222 389h1v1h-1zM224 389h1v1h-1zM222 391h1v1h-1zM224 391h1v1h-1zM222 376h1v1h-1zM224 376h1v1h-1zM222 378h1v1h-1zM224 378h1v1h-1zM225 484h1v1h-1zM227 484h1v1h-1zM225 486h1v1h-1zM227 486h1v1h-1zM225 482h1v1h-1zM227 482h1v1h-1zM225 484h1v1h-1zM227 484h1v1h-1zM225 475h1v1h-1zM227 475h1v1h-1zM225 477h1v1h-1zM227 477h1v1h-1zM225 471h1v1h-1zM227 471h1v1h-1zM225 473h1v1h-1zM227 473h1v1h-1zM225 469h1v1h-1zM227 469h1v1h-1zM225 471h1v1h-1zM227 471h1v1h-1zM225 466h1v1h-1zM227 466h1v1h-1zM225 468h1v1h-1zM227 468h1v1h-1zM225 464h1v1h-1zM227 464h1v1h-1zM225 466h1v1h-1zM227 466h1v1h-1zM225 462h1v1h-1zM227 462h1v1h-1zM225 464h1v1h-1zM227 464h1v1h-1zM225 460h1v1h-1zM227 460h1v1h-1zM225 462h1v1h-1zM227 462h1v1h-1zM225 458h1v1h-1zM227 458h1v1h-1zM225 460h1v1h-1zM227 460h1v1h-1zM225 456h1v1h-1zM227 456h1v1h-1zM225 458h1v1h-1zM227 458h1v1h-1zM225 453h1v1h-1zM227 453h1v1h-1zM225 455h1v1h-1zM227 455h1v1h-1zM225 449h1v1h-1zM227 449h1v1h-1zM225 451h1v1h-1zM227 451h1v1h-1zM225 447h1v1h-1zM227 447h1v1h-1zM225 449h1v1h-1zM227 449h1v1h-1zM225 445h1v1h-1zM227 445h1v1h-1zM225 447h1v1h-1zM227 447h1v1h-1zM225 443h1v1h-1zM227 443h1v1h-1zM225 445h1v1h-1zM227 445h1v1h-1zM225 440h1v1h-1zM227 440h1v1h-1zM225 442h1v1h-1zM227 442h1v1h-1zM225 438h1v1h-1zM227 438h1v1h-1zM225 440h1v1h-1zM227 440h1v1h-1zM225 436h1v1h-1zM227 436h1v1h-1zM225 438h1v1h-1zM227 438h1v1h-1zM225 434h1v1h-1zM227 434h1v1h-1zM225 436h1v1h-1zM227 436h1v1h-1zM225 432h1v1h-1zM227 432h1v1h-1zM225 434h1v1h-1zM227 434h1v1h-1zM225 430h1v1h-1zM227 430h1v1h-1zM225 432h1v1h-1zM227 432h1v1h-1zM225 427h1v1h-1zM227 427h1v1h-1zM225 429h1v1h-1zM227 429h1v1h-1zM225 425h1v1h-1zM227 425h1v1h-1zM225 427h1v1h-1zM227 427h1v1h-1zM225 423h1v1h-1zM227 423h1v1h-1zM225 425h1v1h-1zM227 425h1v1h-1zM225 421h1v1h-1zM227 421h1v1h-1zM225 423h1v1h-1zM227 423h1v1h-1zM225 419h1v1h-1zM227 419h1v1h-1zM225 421h1v1h-1zM227 421h1v1h-1zM225 417h1v1h-1zM227 417h1v1h-1zM225 419h1v1h-1zM227 419h1v1h-1zM225 414h1v1h-1zM227 414h1v1h-1zM225 416h1v1h-1zM227 416h1v1h-1zM225 412h1v1h-1zM227 412h1v1h-1zM225 414h1v1h-1zM227 414h1v1h-1zM225 410h1v1h-1zM227 410h1v1h-1zM225 412h1v1h-1zM227 412h1v1h-1zM225 408h1v1h-1zM227 408h1v1h-1zM225 410h1v1h-1zM227 410h1v1h-1zM225 406h1v1h-1zM227 406h1v1h-1zM225 408h1v1h-1zM227 408h1v1h-1zM225 404h1v1h-1zM227 404h1v1h-1zM225 406h1v1h-1zM227 406h1v1h-1zM225 401h1v1h-1zM227 401h1v1h-1zM225 403h1v1h-1zM227 403h1v1h-1zM225 399h1v1h-1zM227 399h1v1h-1zM225 401h1v1h-1zM227 401h1v1h-1zM225 397h1v1h-1zM227 397h1v1h-1zM225 399h1v1h-1zM227 399h1v1h-1zM225 395h1v1h-1zM227 395h1v1h-1zM225 397h1v1h-1zM227 397h1v1h-1zM225 391h1v1h-1zM227 391h1v1h-1zM225 393h1v1h-1zM227 393h1v1h-1zM225 384h1v1h-1zM227 384h1v1h-1zM225 386h1v1h-1zM227 386h1v1h-1zM225 304h1v1h-1zM227 304h1v1h-1zM225 306h1v1h-1zM227 306h1v1h-1zM229 505h1v1h-1zM231 505h1v1h-1zM229 507h1v1h-1zM231 507h1v1h-1zM229 479h1v1h-1zM231 479h1v1h-1zM229 481h1v1h-1zM231 481h1v1h-1zM229 477h1v1h-1zM231 477h1v1h-1zM229 479h1v1h-1zM231 479h1v1h-1zM229 475h1v1h-1zM231 475h1v1h-1zM229 477h1v1h-1zM231 477h1v1h-1zM229 473h1v1h-1zM231 473h1v1h-1zM229 475h1v1h-1zM231 475h1v1h-1zM229 471h1v1h-1zM231 471h1v1h-1zM229 473h1v1h-1zM231 473h1v1h-1zM229 469h1v1h-1zM231 469h1v1h-1zM229 471h1v1h-1zM231 471h1v1h-1zM229 466h1v1h-1zM231 466h1v1h-1zM229 468h1v1h-1zM231 468h1v1h-1zM229 464h1v1h-1zM231 464h1v1h-1zM229 466h1v1h-1zM231 466h1v1h-1zM229 462h1v1h-1zM231 462h1v1h-1zM229 464h1v1h-1zM231 464h1v1h-1zM229 460h1v1h-1zM231 460h1v1h-1zM229 462h1v1h-1zM231 462h1v1h-1zM229 458h1v1h-1zM231 458h1v1h-1zM229 460h1v1h-1zM231 460h1v1h-1zM229 456h1v1h-1zM231 456h1v1h-1zM229 458h1v1h-1zM231 458h1v1h-1zM229 453h1v1h-1zM231 453h1v1h-1zM229 455h1v1h-1zM231 455h1v1h-1zM229 451h1v1h-1zM231 451h1v1h-1zM229 453h1v1h-1zM231 453h1v1h-1zM229 449h1v1h-1zM231 449h1v1h-1zM229 451h1v1h-1zM231 451h1v1h-1zM229 447h1v1h-1zM231 447h1v1h-1zM229 449h1v1h-1zM231 449h1v1h-1zM229 445h1v1h-1zM231 445h1v1h-1zM229 447h1v1h-1zM231 447h1v1h-1zM229 443h1v1h-1zM231 443h1v1h-1zM229 445h1v1h-1zM231 445h1v1h-1zM229 440h1v1h-1zM231 440h1v1h-1zM229 442h1v1h-1zM231 442h1v1h-1zM229 438h1v1h-1zM231 438h1v1h-1zM229 440h1v1h-1zM231 440h1v1h-1zM229 436h1v1h-1zM231 436h1v1h-1zM229 438h1v1h-1zM231 438h1v1h-1zM229 434h1v1h-1zM231 434h1v1h-1zM229 436h1v1h-1zM231 436h1v1h-1zM229 432h1v1h-1zM231 432h1v1h-1zM229 434h1v1h-1zM231 434h1v1h-1zM229 430h1v1h-1zM231 430h1v1h-1zM229 432h1v1h-1zM231 432h1v1h-1zM229 427h1v1h-1zM231 427h1v1h-1zM229 429h1v1h-1zM231 429h1v1h-1zM229 425h1v1h-1zM231 425h1v1h-1zM229 427h1v1h-1zM231 427h1v1h-1zM229 421h1v1h-1zM231 421h1v1h-1zM229 423h1v1h-1zM231 423h1v1h-1zM229 419h1v1h-1zM231 419h1v1h-1zM229 421h1v1h-1zM231 421h1v1h-1zM229 414h1v1h-1zM231 414h1v1h-1zM229 416h1v1h-1zM231 416h1v1h-1zM229 412h1v1h-1zM231 412h1v1h-1zM229 414h1v1h-1zM231 414h1v1h-1zM229 408h1v1h-1zM231 408h1v1h-1zM229 410h1v1h-1zM231 410h1v1h-1zM229 406h1v1h-1zM231 406h1v1h-1zM229 408h1v1h-1zM231 408h1v1h-1zM229 404h1v1h-1zM231 404h1v1h-1zM229 406h1v1h-1zM231 406h1v1h-1zM229 401h1v1h-1zM231 401h1v1h-1zM229 403h1v1h-1zM231 403h1v1h-1zM229 399h1v1h-1zM231 399h1v1h-1zM229 401h1v1h-1zM231 401h1v1h-1zM229 397h1v1h-1zM231 397h1v1h-1zM229 399h1v1h-1zM231 399h1v1h-1zM229 395h1v1h-1zM231 395h1v1h-1zM229 397h1v1h-1zM231 397h1v1h-1zM229 393h1v1h-1zM231 393h1v1h-1zM229 395h1v1h-1zM231 395h1v1h-1zM229 391h1v1h-1zM231 391h1v1h-1zM229 393h1v1h-1zM231 393h1v1h-1zM229 378h1v1h-1zM231 378h1v1h-1zM229 380h1v1h-1zM231 380h1v1h-1zM229 369h1v1h-1zM231 369h1v1h-1zM229 371h1v1h-1zM231 371h1v1h-1zM229 317h1v1h-1zM231 317h1v1h-1zM229 319h1v1h-1zM231 319h1v1h-1zM229 302h1v1h-1zM231 302h1v1h-1zM229 304h1v1h-1zM231 304h1v1h-1zM229 274h1v1h-1zM231 274h1v1h-1zM229 276h1v1h-1zM231 276h1v1h-1zM232 479h1v1h-1zM234 479h1v1h-1zM232 481h1v1h-1zM234 481h1v1h-1zM232 477h1v1h-1zM234 477h1v1h-1zM232 479h1v1h-1zM234 479h1v1h-1zM232 475h1v1h-1zM234 475h1v1h-1zM232 477h1v1h-1zM234 477h1v1h-1zM232 473h1v1h-1zM234 473h1v1h-1zM232 475h1v1h-1zM234 475h1v1h-1zM232 471h1v1h-1zM234 471h1v1h-1zM232 473h1v1h-1zM234 473h1v1h-1zM232 469h1v1h-1zM234 469h1v1h-1zM232 471h1v1h-1zM234 471h1v1h-1zM232 466h1v1h-1zM234 466h1v1h-1zM232 468h1v1h-1zM234 468h1v1h-1zM232 464h1v1h-1zM234 464h1v1h-1zM232 466h1v1h-1zM234 466h1v1h-1zM232 462h1v1h-1zM234 462h1v1h-1zM232 464h1v1h-1zM234 464h1v1h-1zM232 460h1v1h-1zM234 460h1v1h-1zM232 462h1v1h-1zM234 462h1v1h-1zM232 458h1v1h-1zM234 458h1v1h-1zM232 460h1v1h-1zM234 460h1v1h-1zM232 456h1v1h-1zM234 456h1v1h-1zM232 458h1v1h-1zM234 458h1v1h-1zM232 453h1v1h-1zM234 453h1v1h-1zM232 455h1v1h-1zM234 455h1v1h-1zM232 451h1v1h-1zM234 451h1v1h-1zM232 453h1v1h-1zM234 453h1v1h-1zM232 449h1v1h-1zM234 449h1v1h-1zM232 451h1v1h-1zM234 451h1v1h-1zM232 447h1v1h-1zM234 447h1v1h-1zM232 449h1v1h-1zM234 449h1v1h-1zM232 445h1v1h-1zM234 445h1v1h-1zM232 447h1v1h-1zM234 447h1v1h-1zM232 443h1v1h-1zM234 443h1v1h-1zM232 445h1v1h-1zM234 445h1v1h-1zM232 440h1v1h-1zM234 440h1v1h-1zM232 442h1v1h-1zM234 442h1v1h-1zM232 438h1v1h-1zM234 438h1v1h-1zM232 440h1v1h-1zM234 440h1v1h-1zM232 436h1v1h-1zM234 436h1v1h-1zM232 438h1v1h-1zM234 438h1v1h-1zM232 434h1v1h-1zM234 434h1v1h-1zM232 436h1v1h-1zM234 436h1v1h-1zM232 432h1v1h-1zM234 432h1v1h-1zM232 434h1v1h-1zM234 434h1v1h-1zM232 430h1v1h-1zM234 430h1v1h-1zM232 432h1v1h-1zM234 432h1v1h-1zM232 427h1v1h-1zM234 427h1v1h-1zM232 429h1v1h-1zM234 429h1v1h-1zM232 425h1v1h-1zM234 425h1v1h-1zM232 427h1v1h-1zM234 427h1v1h-1zM232 423h1v1h-1zM234 423h1v1h-1zM232 425h1v1h-1zM234 425h1v1h-1zM232 421h1v1h-1zM234 421h1v1h-1zM232 423h1v1h-1zM234 423h1v1h-1zM232 419h1v1h-1zM234 419h1v1h-1zM232 421h1v1h-1zM234 421h1v1h-1zM232 417h1v1h-1zM234 417h1v1h-1zM232 419h1v1h-1zM234 419h1v1h-1zM232 412h1v1h-1zM234 412h1v1h-1zM232 414h1v1h-1zM234 414h1v1h-1zM232 410h1v1h-1zM234 410h1v1h-1zM232 412h1v1h-1zM234 412h1v1h-1zM232 408h1v1h-1zM234 408h1v1h-1zM232 410h1v1h-1zM234 410h1v1h-1zM232 406h1v1h-1zM234 406h1v1h-1zM232 408h1v1h-1zM234 408h1v1h-1zM232 404h1v1h-1zM234 404h1v1h-1zM232 406h1v1h-1zM234 406h1v1h-1zM232 401h1v1h-1zM234 401h1v1h-1zM232 403h1v1h-1zM234 403h1v1h-1zM232 399h1v1h-1zM234 399h1v1h-1zM232 401h1v1h-1zM234 401h1v1h-1zM236 514h1v1h-1zM238 514h1v1h-1zM236 516h1v1h-1zM238 516h1v1h-1zM236 488h1v1h-1zM238 488h1v1h-1zM236 490h1v1h-1zM238 490h1v1h-1zM236 484h1v1h-1zM238 484h1v1h-1zM236 486h1v1h-1zM238 486h1v1h-1zM236 482h1v1h-1zM238 482h1v1h-1zM236 484h1v1h-1zM238 484h1v1h-1zM236 479h1v1h-1zM238 479h1v1h-1zM236 481h1v1h-1zM238 481h1v1h-1zM236 477h1v1h-1zM238 477h1v1h-1zM236 479h1v1h-1zM238 479h1v1h-1zM236 475h1v1h-1zM238 475h1v1h-1zM236 477h1v1h-1zM238 477h1v1h-1zM236 473h1v1h-1zM238 473h1v1h-1zM236 475h1v1h-1zM238 475h1v1h-1zM236 471h1v1h-1zM238 471h1v1h-1zM236 473h1v1h-1zM238 473h1v1h-1zM236 469h1v1h-1zM238 469h1v1h-1zM236 471h1v1h-1zM238 471h1v1h-1zM236 466h1v1h-1zM238 466h1v1h-1zM236 468h1v1h-1zM238 468h1v1h-1zM236 464h1v1h-1zM238 464h1v1h-1zM236 466h1v1h-1zM238 466h1v1h-1zM236 462h1v1h-1zM238 462h1v1h-1zM236 464h1v1h-1zM238 464h1v1h-1zM236 460h1v1h-1zM238 460h1v1h-1zM236 462h1v1h-1zM238 462h1v1h-1zM236 458h1v1h-1zM238 458h1v1h-1zM236 460h1v1h-1zM238 460h1v1h-1zM236 456h1v1h-1zM238 456h1v1h-1zM236 458h1v1h-1zM238 458h1v1h-1zM236 453h1v1h-1zM238 453h1v1h-1zM236 455h1v1h-1zM238 455h1v1h-1zM236 451h1v1h-1zM238 451h1v1h-1zM236 453h1v1h-1zM238 453h1v1h-1zM236 449h1v1h-1zM238 449h1v1h-1zM236 451h1v1h-1zM238 451h1v1h-1zM236 447h1v1h-1zM238 447h1v1h-1zM236 449h1v1h-1zM238 449h1v1h-1zM236 445h1v1h-1zM238 445h1v1h-1zM236 447h1v1h-1zM238 447h1v1h-1zM236 443h1v1h-1zM238 443h1v1h-1zM236 445h1v1h-1zM238 445h1v1h-1zM236 440h1v1h-1zM238 440h1v1h-1zM236 442h1v1h-1zM238 442h1v1h-1zM236 438h1v1h-1zM238 438h1v1h-1zM236 440h1v1h-1zM238 440h1v1h-1zM236 436h1v1h-1zM238 436h1v1h-1zM236 438h1v1h-1zM238 438h1v1h-1zM236 434h1v1h-1zM238 434h1v1h-1zM236 436h1v1h-1zM238 436h1v1h-1zM236 432h1v1h-1zM238 432h1v1h-1zM236 434h1v1h-1zM238 434h1v1h-1zM236 427h1v1h-1zM238 427h1v1h-1zM236 429h1v1h-1zM238 429h1v1h-1zM236 425h1v1h-1zM238 425h1v1h-1zM236 427h1v1h-1zM238 427h1v1h-1zM236 423h1v1h-1zM238 423h1v1h-1zM236 425h1v1h-1zM238 425h1v1h-1zM236 421h1v1h-1zM238 421h1v1h-1zM236 423h1v1h-1zM238 423h1v1h-1zM236 419h1v1h-1zM238 419h1v1h-1zM236 421h1v1h-1zM238 421h1v1h-1zM236 417h1v1h-1zM238 417h1v1h-1zM236 419h1v1h-1zM238 419h1v1h-1zM236 414h1v1h-1zM238 414h1v1h-1zM236 416h1v1h-1zM238 416h1v1h-1zM236 412h1v1h-1zM238 412h1v1h-1zM236 414h1v1h-1zM238 414h1v1h-1zM236 410h1v1h-1zM238 410h1v1h-1zM236 412h1v1h-1zM238 412h1v1h-1zM236 408h1v1h-1zM238 408h1v1h-1zM236 410h1v1h-1zM238 410h1v1h-1zM236 406h1v1h-1zM238 406h1v1h-1zM236 408h1v1h-1zM238 408h1v1h-1zM236 404h1v1h-1zM238 404h1v1h-1zM236 406h1v1h-1zM238 406h1v1h-1zM236 401h1v1h-1zM238 401h1v1h-1zM236 403h1v1h-1zM238 403h1v1h-1zM236 399h1v1h-1zM238 399h1v1h-1zM236 401h1v1h-1zM238 401h1v1h-1zM236 393h1v1h-1zM238 393h1v1h-1zM236 395h1v1h-1zM238 395h1v1h-1zM236 358h1v1h-1zM238 358h1v1h-1zM236 360h1v1h-1zM238 360h1v1h-1zM239 488h1v1h-1zM241 488h1v1h-1zM239 490h1v1h-1zM241 490h1v1h-1zM239 484h1v1h-1zM241 484h1v1h-1zM239 486h1v1h-1zM241 486h1v1h-1zM239 482h1v1h-1zM241 482h1v1h-1zM239 484h1v1h-1zM241 484h1v1h-1zM239 479h1v1h-1zM241 479h1v1h-1zM239 481h1v1h-1zM241 481h1v1h-1zM239 477h1v1h-1zM241 477h1v1h-1zM239 479h1v1h-1zM241 479h1v1h-1zM239 475h1v1h-1zM241 475h1v1h-1zM239 477h1v1h-1zM241 477h1v1h-1zM239 473h1v1h-1zM241 473h1v1h-1zM239 475h1v1h-1zM241 475h1v1h-1zM239 471h1v1h-1zM241 471h1v1h-1zM239 473h1v1h-1zM241 473h1v1h-1zM239 466h1v1h-1zM241 466h1v1h-1zM239 468h1v1h-1zM241 468h1v1h-1zM239 464h1v1h-1zM241 464h1v1h-1zM239 466h1v1h-1zM241 466h1v1h-1zM239 462h1v1h-1zM241 462h1v1h-1zM239 464h1v1h-1zM241 464h1v1h-1zM239 460h1v1h-1zM241 460h1v1h-1zM239 462h1v1h-1zM241 462h1v1h-1zM239 458h1v1h-1zM241 458h1v1h-1zM239 460h1v1h-1zM241 460h1v1h-1zM239 456h1v1h-1zM241 456h1v1h-1zM239 458h1v1h-1zM241 458h1v1h-1zM239 453h1v1h-1zM241 453h1v1h-1zM239 455h1v1h-1zM241 455h1v1h-1zM239 451h1v1h-1zM241 451h1v1h-1zM239 453h1v1h-1zM241 453h1v1h-1zM239 449h1v1h-1zM241 449h1v1h-1zM239 451h1v1h-1zM241 451h1v1h-1zM239 447h1v1h-1zM241 447h1v1h-1zM239 449h1v1h-1zM241 449h1v1h-1zM239 445h1v1h-1zM241 445h1v1h-1zM239 447h1v1h-1zM241 447h1v1h-1zM239 443h1v1h-1zM241 443h1v1h-1zM239 445h1v1h-1zM241 445h1v1h-1zM239 440h1v1h-1zM241 440h1v1h-1zM239 442h1v1h-1zM241 442h1v1h-1zM239 438h1v1h-1zM241 438h1v1h-1zM239 440h1v1h-1zM241 440h1v1h-1zM239 436h1v1h-1zM241 436h1v1h-1zM239 438h1v1h-1zM241 438h1v1h-1zM239 434h1v1h-1zM241 434h1v1h-1zM239 436h1v1h-1zM241 436h1v1h-1zM239 432h1v1h-1zM241 432h1v1h-1zM239 434h1v1h-1zM241 434h1v1h-1zM239 430h1v1h-1zM241 430h1v1h-1zM239 432h1v1h-1zM241 432h1v1h-1zM239 427h1v1h-1zM241 427h1v1h-1zM239 429h1v1h-1zM241 429h1v1h-1zM239 425h1v1h-1zM241 425h1v1h-1zM239 427h1v1h-1zM241 427h1v1h-1zM239 423h1v1h-1zM241 423h1v1h-1zM239 425h1v1h-1zM241 425h1v1h-1zM239 421h1v1h-1zM241 421h1v1h-1zM239 423h1v1h-1zM241 423h1v1h-1zM239 419h1v1h-1zM241 419h1v1h-1zM239 421h1v1h-1zM241 421h1v1h-1zM239 417h1v1h-1zM241 417h1v1h-1zM239 419h1v1h-1zM241 419h1v1h-1zM239 414h1v1h-1zM241 414h1v1h-1zM239 416h1v1h-1zM241 416h1v1h-1zM239 412h1v1h-1zM241 412h1v1h-1zM239 414h1v1h-1zM241 414h1v1h-1zM239 410h1v1h-1zM241 410h1v1h-1zM239 412h1v1h-1zM241 412h1v1h-1zM239 408h1v1h-1zM241 408h1v1h-1zM239 410h1v1h-1zM241 410h1v1h-1zM239 404h1v1h-1zM241 404h1v1h-1zM239 406h1v1h-1zM241 406h1v1h-1zM239 399h1v1h-1zM241 399h1v1h-1zM239 401h1v1h-1zM241 401h1v1h-1zM239 389h1v1h-1zM241 389h1v1h-1zM239 391h1v1h-1zM241 391h1v1h-1zM239 334h1v1h-1zM241 334h1v1h-1zM239 336h1v1h-1zM241 336h1v1h-1zM242 492h1v1h-1zM244 492h1v1h-1zM242 494h1v1h-1zM244 494h1v1h-1zM242 486h1v1h-1zM244 486h1v1h-1zM242 488h1v1h-1zM244 488h1v1h-1zM242 484h1v1h-1zM244 484h1v1h-1zM242 486h1v1h-1zM244 486h1v1h-1zM242 482h1v1h-1zM244 482h1v1h-1zM242 484h1v1h-1zM244 484h1v1h-1zM242 479h1v1h-1zM244 479h1v1h-1zM242 481h1v1h-1zM244 481h1v1h-1zM242 477h1v1h-1zM244 477h1v1h-1zM242 479h1v1h-1zM244 479h1v1h-1zM242 473h1v1h-1zM244 473h1v1h-1zM242 475h1v1h-1zM244 475h1v1h-1zM242 471h1v1h-1zM244 471h1v1h-1zM242 473h1v1h-1zM244 473h1v1h-1zM242 469h1v1h-1zM244 469h1v1h-1zM242 471h1v1h-1zM244 471h1v1h-1zM242 466h1v1h-1zM244 466h1v1h-1zM242 468h1v1h-1zM244 468h1v1h-1zM242 464h1v1h-1zM244 464h1v1h-1zM242 466h1v1h-1zM244 466h1v1h-1zM242 462h1v1h-1zM244 462h1v1h-1zM242 464h1v1h-1zM244 464h1v1h-1zM242 460h1v1h-1zM244 460h1v1h-1zM242 462h1v1h-1zM244 462h1v1h-1zM242 458h1v1h-1zM244 458h1v1h-1zM242 460h1v1h-1zM244 460h1v1h-1zM242 456h1v1h-1zM244 456h1v1h-1zM242 458h1v1h-1zM244 458h1v1h-1zM242 453h1v1h-1zM244 453h1v1h-1zM242 455h1v1h-1zM244 455h1v1h-1zM242 451h1v1h-1zM244 451h1v1h-1zM242 453h1v1h-1zM244 453h1v1h-1zM242 449h1v1h-1zM244 449h1v1h-1zM242 451h1v1h-1zM244 451h1v1h-1zM242 447h1v1h-1zM244 447h1v1h-1zM242 449h1v1h-1zM244 449h1v1h-1zM242 445h1v1h-1zM244 445h1v1h-1zM242 447h1v1h-1zM244 447h1v1h-1zM242 443h1v1h-1zM244 443h1v1h-1zM242 445h1v1h-1zM244 445h1v1h-1zM242 440h1v1h-1zM244 440h1v1h-1zM242 442h1v1h-1zM244 442h1v1h-1zM242 438h1v1h-1zM244 438h1v1h-1zM242 440h1v1h-1zM244 440h1v1h-1zM242 436h1v1h-1zM244 436h1v1h-1zM242 438h1v1h-1zM244 438h1v1h-1zM242 434h1v1h-1zM244 434h1v1h-1zM242 436h1v1h-1zM244 436h1v1h-1zM242 432h1v1h-1zM244 432h1v1h-1zM242 434h1v1h-1zM244 434h1v1h-1zM242 430h1v1h-1zM244 430h1v1h-1zM242 432h1v1h-1zM244 432h1v1h-1zM242 427h1v1h-1zM244 427h1v1h-1zM242 429h1v1h-1zM244 429h1v1h-1zM242 425h1v1h-1zM244 425h1v1h-1zM242 427h1v1h-1zM244 427h1v1h-1zM242 417h1v1h-1zM244 417h1v1h-1zM242 419h1v1h-1zM244 419h1v1h-1zM242 414h1v1h-1zM244 414h1v1h-1zM242 416h1v1h-1zM244 416h1v1h-1zM242 412h1v1h-1zM244 412h1v1h-1zM242 414h1v1h-1zM244 414h1v1h-1zM242 404h1v1h-1zM244 404h1v1h-1zM242 406h1v1h-1zM244 406h1v1h-1zM242 395h1v1h-1zM244 395h1v1h-1zM242 397h1v1h-1zM244 397h1v1h-1zM242 391h1v1h-1zM244 391h1v1h-1zM242 393h1v1h-1zM244 393h1v1h-1zM246 527h1v1h-1zM248 527h1v1h-1zM246 529h1v1h-1zM248 529h1v1h-1zM246 488h1v1h-1zM248 488h1v1h-1zM246 490h1v1h-1zM248 490h1v1h-1zM246 486h1v1h-1zM248 486h1v1h-1zM246 488h1v1h-1zM248 488h1v1h-1zM246 484h1v1h-1zM248 484h1v1h-1zM246 486h1v1h-1zM248 486h1v1h-1zM246 482h1v1h-1zM248 482h1v1h-1zM246 484h1v1h-1zM248 484h1v1h-1zM246 479h1v1h-1zM248 479h1v1h-1zM246 481h1v1h-1zM248 481h1v1h-1zM246 477h1v1h-1zM248 477h1v1h-1zM246 479h1v1h-1zM248 479h1v1h-1zM246 475h1v1h-1zM248 475h1v1h-1zM246 477h1v1h-1zM248 477h1v1h-1zM246 473h1v1h-1zM248 473h1v1h-1zM246 475h1v1h-1zM248 475h1v1h-1zM246 471h1v1h-1zM248 471h1v1h-1zM246 473h1v1h-1zM248 473h1v1h-1zM246 469h1v1h-1zM248 469h1v1h-1zM246 471h1v1h-1zM248 471h1v1h-1zM246 466h1v1h-1zM248 466h1v1h-1zM246 468h1v1h-1zM248 468h1v1h-1zM246 464h1v1h-1zM248 464h1v1h-1zM246 466h1v1h-1zM248 466h1v1h-1zM246 462h1v1h-1zM248 462h1v1h-1zM246 464h1v1h-1zM248 464h1v1h-1zM246 460h1v1h-1zM248 460h1v1h-1zM246 462h1v1h-1zM248 462h1v1h-1zM246 458h1v1h-1zM248 458h1v1h-1zM246 460h1v1h-1zM248 460h1v1h-1zM246 456h1v1h-1zM248 456h1v1h-1zM246 458h1v1h-1zM248 458h1v1h-1zM246 453h1v1h-1zM248 453h1v1h-1zM246 455h1v1h-1zM248 455h1v1h-1zM246 451h1v1h-1zM248 451h1v1h-1zM246 453h1v1h-1zM248 453h1v1h-1zM246 449h1v1h-1zM248 449h1v1h-1zM246 451h1v1h-1zM248 451h1v1h-1zM246 447h1v1h-1zM248 447h1v1h-1zM246 449h1v1h-1zM248 449h1v1h-1zM246 445h1v1h-1zM248 445h1v1h-1zM246 447h1v1h-1zM248 447h1v1h-1zM246 443h1v1h-1zM248 443h1v1h-1zM246 445h1v1h-1zM248 445h1v1h-1zM246 440h1v1h-1zM248 440h1v1h-1zM246 442h1v1h-1zM248 442h1v1h-1zM246 438h1v1h-1zM248 438h1v1h-1zM246 440h1v1h-1zM248 440h1v1h-1zM246 436h1v1h-1zM248 436h1v1h-1zM246 438h1v1h-1zM248 438h1v1h-1zM246 434h1v1h-1zM248 434h1v1h-1zM246 436h1v1h-1zM248 436h1v1h-1zM246 432h1v1h-1zM248 432h1v1h-1zM246 434h1v1h-1zM248 434h1v1h-1zM246 421h1v1h-1zM248 421h1v1h-1zM246 423h1v1h-1zM248 423h1v1h-1zM246 419h1v1h-1zM248 419h1v1h-1zM246 421h1v1h-1zM248 421h1v1h-1zM246 408h1v1h-1zM248 408h1v1h-1zM246 410h1v1h-1zM248 410h1v1h-1zM246 406h1v1h-1zM248 406h1v1h-1zM246 408h1v1h-1zM248 408h1v1h-1zM246 401h1v1h-1zM248 401h1v1h-1zM246 403h1v1h-1zM248 403h1v1h-1zM246 397h1v1h-1zM248 397h1v1h-1zM246 399h1v1h-1zM248 399h1v1h-1zM246 395h1v1h-1zM248 395h1v1h-1zM246 397h1v1h-1zM248 397h1v1h-1zM249 514h1v1h-1zM251 514h1v1h-1zM249 516h1v1h-1zM251 516h1v1h-1zM249 499h1v1h-1zM251 499h1v1h-1zM249 501h1v1h-1zM251 501h1v1h-1zM249 490h1v1h-1zM251 490h1v1h-1zM249 492h1v1h-1zM251 492h1v1h-1zM249 488h1v1h-1zM251 488h1v1h-1zM249 490h1v1h-1zM251 490h1v1h-1zM249 486h1v1h-1zM251 486h1v1h-1zM249 488h1v1h-1zM251 488h1v1h-1zM249 484h1v1h-1zM251 484h1v1h-1zM249 486h1v1h-1zM251 486h1v1h-1zM249 482h1v1h-1zM251 482h1v1h-1zM249 484h1v1h-1zM251 484h1v1h-1zM249 479h1v1h-1zM251 479h1v1h-1zM249 481h1v1h-1zM251 481h1v1h-1zM249 477h1v1h-1zM251 477h1v1h-1zM249 479h1v1h-1zM251 479h1v1h-1zM249 475h1v1h-1zM251 475h1v1h-1zM249 477h1v1h-1zM251 477h1v1h-1zM249 473h1v1h-1zM251 473h1v1h-1zM249 475h1v1h-1zM251 475h1v1h-1zM249 471h1v1h-1zM251 471h1v1h-1zM249 473h1v1h-1zM251 473h1v1h-1zM249 469h1v1h-1zM251 469h1v1h-1zM249 471h1v1h-1zM251 471h1v1h-1zM249 466h1v1h-1zM251 466h1v1h-1zM249 468h1v1h-1zM251 468h1v1h-1zM249 462h1v1h-1zM251 462h1v1h-1zM249 464h1v1h-1zM251 464h1v1h-1zM249 460h1v1h-1zM251 460h1v1h-1zM249 462h1v1h-1zM251 462h1v1h-1zM249 458h1v1h-1zM251 458h1v1h-1zM249 460h1v1h-1zM251 460h1v1h-1zM249 456h1v1h-1zM251 456h1v1h-1zM249 458h1v1h-1zM251 458h1v1h-1zM249 453h1v1h-1zM251 453h1v1h-1zM249 455h1v1h-1zM251 455h1v1h-1zM249 451h1v1h-1zM251 451h1v1h-1zM249 453h1v1h-1zM251 453h1v1h-1zM249 449h1v1h-1zM251 449h1v1h-1zM249 451h1v1h-1zM251 451h1v1h-1zM249 447h1v1h-1zM251 447h1v1h-1zM249 449h1v1h-1zM251 449h1v1h-1zM249 445h1v1h-1zM251 445h1v1h-1zM249 447h1v1h-1zM251 447h1v1h-1zM249 443h1v1h-1zM251 443h1v1h-1zM249 445h1v1h-1zM251 445h1v1h-1zM249 440h1v1h-1zM251 440h1v1h-1zM249 442h1v1h-1zM251 442h1v1h-1zM249 438h1v1h-1zM251 438h1v1h-1zM249 440h1v1h-1zM251 440h1v1h-1zM249 436h1v1h-1zM251 436h1v1h-1zM249 438h1v1h-1zM251 438h1v1h-1zM249 427h1v1h-1zM251 427h1v1h-1zM249 429h1v1h-1zM251 429h1v1h-1zM249 423h1v1h-1zM251 423h1v1h-1zM249 425h1v1h-1zM251 425h1v1h-1zM249 417h1v1h-1zM251 417h1v1h-1zM249 419h1v1h-1zM251 419h1v1h-1zM249 414h1v1h-1zM251 414h1v1h-1zM249 416h1v1h-1zM251 416h1v1h-1zM249 404h1v1h-1zM251 404h1v1h-1zM249 406h1v1h-1zM251 406h1v1h-1zM249 401h1v1h-1zM251 401h1v1h-1zM249 403h1v1h-1zM251 403h1v1h-1zM252 492h1v1h-1zM254 492h1v1h-1zM252 494h1v1h-1zM254 494h1v1h-1zM252 488h1v1h-1zM254 488h1v1h-1zM252 490h1v1h-1zM254 490h1v1h-1zM252 486h1v1h-1zM254 486h1v1h-1zM252 488h1v1h-1zM254 488h1v1h-1zM252 484h1v1h-1zM254 484h1v1h-1zM252 486h1v1h-1zM254 486h1v1h-1zM252 482h1v1h-1zM254 482h1v1h-1zM252 484h1v1h-1zM254 484h1v1h-1zM252 479h1v1h-1zM254 479h1v1h-1zM252 481h1v1h-1zM254 481h1v1h-1zM252 477h1v1h-1zM254 477h1v1h-1zM252 479h1v1h-1zM254 479h1v1h-1zM252 475h1v1h-1zM254 475h1v1h-1zM252 477h1v1h-1zM254 477h1v1h-1zM252 473h1v1h-1zM254 473h1v1h-1zM252 475h1v1h-1zM254 475h1v1h-1zM252 471h1v1h-1zM254 471h1v1h-1zM252 473h1v1h-1zM254 473h1v1h-1zM252 469h1v1h-1zM254 469h1v1h-1zM252 471h1v1h-1zM254 471h1v1h-1zM252 466h1v1h-1zM254 466h1v1h-1zM252 468h1v1h-1zM254 468h1v1h-1zM252 464h1v1h-1zM254 464h1v1h-1zM252 466h1v1h-1zM254 466h1v1h-1zM252 462h1v1h-1zM254 462h1v1h-1zM252 464h1v1h-1zM254 464h1v1h-1zM252 460h1v1h-1zM254 460h1v1h-1zM252 462h1v1h-1zM254 462h1v1h-1zM252 458h1v1h-1zM254 458h1v1h-1zM252 460h1v1h-1zM254 460h1v1h-1zM252 456h1v1h-1zM254 456h1v1h-1zM252 458h1v1h-1zM254 458h1v1h-1zM252 453h1v1h-1zM254 453h1v1h-1zM252 455h1v1h-1zM254 455h1v1h-1zM252 451h1v1h-1zM254 451h1v1h-1zM252 453h1v1h-1zM254 453h1v1h-1zM252 449h1v1h-1zM254 449h1v1h-1zM252 451h1v1h-1zM254 451h1v1h-1zM252 447h1v1h-1zM254 447h1v1h-1zM252 449h1v1h-1zM254 449h1v1h-1zM252 445h1v1h-1zM254 445h1v1h-1zM252 447h1v1h-1zM254 447h1v1h-1zM252 443h1v1h-1zM254 443h1v1h-1zM252 445h1v1h-1zM254 445h1v1h-1zM252 436h1v1h-1zM254 436h1v1h-1zM252 438h1v1h-1zM254 438h1v1h-1zM252 430h1v1h-1zM254 430h1v1h-1zM252 432h1v1h-1zM254 432h1v1h-1zM252 421h1v1h-1zM254 421h1v1h-1zM252 423h1v1h-1zM254 423h1v1h-1zM252 419h1v1h-1zM254 419h1v1h-1zM252 421h1v1h-1zM254 421h1v1h-1zM252 410h1v1h-1zM254 410h1v1h-1zM252 412h1v1h-1zM254 412h1v1h-1zM256 538h1v1h-1zM258 538h1v1h-1zM256 540h1v1h-1zM258 540h1v1h-1zM256 490h1v1h-1zM258 490h1v1h-1zM256 492h1v1h-1zM258 492h1v1h-1zM256 488h1v1h-1zM258 488h1v1h-1zM256 490h1v1h-1zM258 490h1v1h-1zM256 486h1v1h-1zM258 486h1v1h-1zM256 488h1v1h-1zM258 488h1v1h-1zM256 484h1v1h-1zM258 484h1v1h-1zM256 486h1v1h-1zM258 486h1v1h-1zM256 479h1v1h-1zM258 479h1v1h-1zM256 481h1v1h-1zM258 481h1v1h-1zM256 477h1v1h-1zM258 477h1v1h-1zM256 479h1v1h-1zM258 479h1v1h-1zM256 475h1v1h-1zM258 475h1v1h-1zM256 477h1v1h-1zM258 477h1v1h-1zM256 473h1v1h-1zM258 473h1v1h-1zM256 475h1v1h-1zM258 475h1v1h-1zM256 471h1v1h-1zM258 471h1v1h-1zM256 473h1v1h-1zM258 473h1v1h-1zM256 469h1v1h-1zM258 469h1v1h-1zM256 471h1v1h-1zM258 471h1v1h-1zM256 466h1v1h-1zM258 466h1v1h-1zM256 468h1v1h-1zM258 468h1v1h-1zM256 464h1v1h-1zM258 464h1v1h-1zM256 466h1v1h-1zM258 466h1v1h-1zM256 462h1v1h-1zM258 462h1v1h-1zM256 464h1v1h-1zM258 464h1v1h-1zM256 460h1v1h-1zM258 460h1v1h-1zM256 462h1v1h-1zM258 462h1v1h-1zM256 456h1v1h-1zM258 456h1v1h-1zM256 458h1v1h-1zM258 458h1v1h-1zM256 453h1v1h-1zM258 453h1v1h-1zM256 455h1v1h-1zM258 455h1v1h-1zM256 451h1v1h-1zM258 451h1v1h-1zM256 453h1v1h-1zM258 453h1v1h-1zM256 449h1v1h-1zM258 449h1v1h-1zM256 451h1v1h-1zM258 451h1v1h-1zM256 447h1v1h-1zM258 447h1v1h-1zM256 449h1v1h-1zM258 449h1v1h-1zM256 434h1v1h-1zM258 434h1v1h-1zM256 436h1v1h-1zM258 436h1v1h-1zM256 432h1v1h-1zM258 432h1v1h-1zM256 434h1v1h-1zM258 434h1v1h-1zM256 430h1v1h-1zM258 430h1v1h-1zM256 432h1v1h-1zM258 432h1v1h-1zM256 427h1v1h-1zM258 427h1v1h-1zM256 429h1v1h-1zM258 429h1v1h-1zM256 425h1v1h-1zM258 425h1v1h-1zM256 427h1v1h-1zM258 427h1v1h-1zM256 423h1v1h-1zM258 423h1v1h-1zM256 425h1v1h-1zM258 425h1v1h-1zM256 410h1v1h-1zM258 410h1v1h-1zM256 412h1v1h-1zM258 412h1v1h-1zM259 497h1v1h-1zM261 497h1v1h-1zM259 499h1v1h-1zM261 499h1v1h-1zM259 490h1v1h-1zM261 490h1v1h-1zM259 492h1v1h-1zM261 492h1v1h-1zM259 488h1v1h-1zM261 488h1v1h-1zM259 490h1v1h-1zM261 490h1v1h-1zM259 486h1v1h-1zM261 486h1v1h-1zM259 488h1v1h-1zM261 488h1v1h-1zM259 484h1v1h-1zM261 484h1v1h-1zM259 486h1v1h-1zM261 486h1v1h-1zM259 482h1v1h-1zM261 482h1v1h-1zM259 484h1v1h-1zM261 484h1v1h-1zM259 479h1v1h-1zM261 479h1v1h-1zM259 481h1v1h-1zM261 481h1v1h-1zM259 477h1v1h-1zM261 477h1v1h-1zM259 479h1v1h-1zM261 479h1v1h-1zM259 475h1v1h-1zM261 475h1v1h-1zM259 477h1v1h-1zM261 477h1v1h-1zM259 473h1v1h-1zM261 473h1v1h-1zM259 475h1v1h-1zM261 475h1v1h-1zM259 471h1v1h-1zM261 471h1v1h-1zM259 473h1v1h-1zM261 473h1v1h-1zM259 469h1v1h-1zM261 469h1v1h-1zM259 471h1v1h-1zM261 471h1v1h-1zM259 464h1v1h-1zM261 464h1v1h-1zM259 466h1v1h-1zM261 466h1v1h-1zM259 462h1v1h-1zM261 462h1v1h-1zM259 464h1v1h-1zM261 464h1v1h-1zM259 460h1v1h-1zM261 460h1v1h-1zM259 462h1v1h-1zM261 462h1v1h-1zM259 458h1v1h-1zM261 458h1v1h-1zM259 460h1v1h-1zM261 460h1v1h-1zM259 456h1v1h-1zM261 456h1v1h-1zM259 458h1v1h-1zM261 458h1v1h-1zM259 453h1v1h-1zM261 453h1v1h-1zM259 455h1v1h-1zM261 455h1v1h-1zM259 451h1v1h-1zM261 451h1v1h-1zM259 453h1v1h-1zM261 453h1v1h-1zM259 447h1v1h-1zM261 447h1v1h-1zM259 449h1v1h-1zM261 449h1v1h-1zM259 445h1v1h-1zM261 445h1v1h-1zM259 447h1v1h-1zM261 447h1v1h-1zM259 443h1v1h-1zM261 443h1v1h-1zM259 445h1v1h-1zM261 445h1v1h-1zM259 440h1v1h-1zM261 440h1v1h-1zM259 442h1v1h-1zM261 442h1v1h-1zM259 436h1v1h-1zM261 436h1v1h-1zM259 438h1v1h-1zM261 438h1v1h-1zM259 434h1v1h-1zM261 434h1v1h-1zM259 436h1v1h-1zM261 436h1v1h-1zM259 432h1v1h-1zM261 432h1v1h-1zM259 434h1v1h-1zM261 434h1v1h-1zM259 427h1v1h-1zM261 427h1v1h-1zM259 429h1v1h-1zM261 429h1v1h-1zM259 423h1v1h-1zM261 423h1v1h-1zM259 425h1v1h-1zM261 425h1v1h-1zM259 421h1v1h-1zM261 421h1v1h-1zM259 423h1v1h-1zM261 423h1v1h-1zM259 417h1v1h-1zM261 417h1v1h-1zM259 419h1v1h-1zM261 419h1v1h-1zM263 497h1v1h-1zM265 497h1v1h-1zM263 499h1v1h-1zM265 499h1v1h-1zM263 495h1v1h-1zM265 495h1v1h-1zM263 497h1v1h-1zM265 497h1v1h-1zM263 492h1v1h-1zM265 492h1v1h-1zM263 494h1v1h-1zM265 494h1v1h-1zM263 490h1v1h-1zM265 490h1v1h-1zM263 492h1v1h-1zM265 492h1v1h-1zM263 488h1v1h-1zM265 488h1v1h-1zM263 490h1v1h-1zM265 490h1v1h-1zM263 486h1v1h-1zM265 486h1v1h-1zM263 488h1v1h-1zM265 488h1v1h-1zM263 484h1v1h-1zM265 484h1v1h-1zM263 486h1v1h-1zM265 486h1v1h-1zM263 482h1v1h-1zM265 482h1v1h-1zM263 484h1v1h-1zM265 484h1v1h-1zM263 479h1v1h-1zM265 479h1v1h-1zM263 481h1v1h-1zM265 481h1v1h-1zM263 477h1v1h-1zM265 477h1v1h-1zM263 479h1v1h-1zM265 479h1v1h-1zM263 475h1v1h-1zM265 475h1v1h-1zM263 477h1v1h-1zM265 477h1v1h-1zM263 473h1v1h-1zM265 473h1v1h-1zM263 475h1v1h-1zM265 475h1v1h-1zM263 471h1v1h-1zM265 471h1v1h-1zM263 473h1v1h-1zM265 473h1v1h-1zM263 469h1v1h-1zM265 469h1v1h-1zM263 471h1v1h-1zM265 471h1v1h-1zM263 466h1v1h-1zM265 466h1v1h-1zM263 468h1v1h-1zM265 468h1v1h-1zM263 464h1v1h-1zM265 464h1v1h-1zM263 466h1v1h-1zM265 466h1v1h-1zM263 462h1v1h-1zM265 462h1v1h-1zM263 464h1v1h-1zM265 464h1v1h-1zM263 460h1v1h-1zM265 460h1v1h-1zM263 462h1v1h-1zM265 462h1v1h-1zM263 456h1v1h-1zM265 456h1v1h-1zM263 458h1v1h-1zM265 458h1v1h-1zM263 453h1v1h-1zM265 453h1v1h-1zM263 455h1v1h-1zM265 455h1v1h-1zM263 449h1v1h-1zM265 449h1v1h-1zM263 451h1v1h-1zM265 451h1v1h-1zM263 445h1v1h-1zM265 445h1v1h-1zM263 447h1v1h-1zM265 447h1v1h-1zM263 443h1v1h-1zM265 443h1v1h-1zM263 445h1v1h-1zM265 445h1v1h-1zM263 440h1v1h-1zM265 440h1v1h-1zM263 442h1v1h-1zM265 442h1v1h-1zM263 438h1v1h-1zM265 438h1v1h-1zM263 440h1v1h-1zM265 440h1v1h-1zM263 430h1v1h-1zM265 430h1v1h-1zM263 432h1v1h-1zM265 432h1v1h-1zM263 427h1v1h-1zM265 427h1v1h-1zM263 429h1v1h-1zM265 429h1v1h-1zM263 423h1v1h-1zM265 423h1v1h-1zM263 425h1v1h-1zM265 425h1v1h-1zM263 414h1v1h-1zM265 414h1v1h-1zM263 416h1v1h-1zM265 416h1v1h-1zM263 406h1v1h-1zM265 406h1v1h-1zM263 408h1v1h-1zM265 408h1v1h-1zM263 389h1v1h-1zM265 389h1v1h-1zM263 391h1v1h-1zM265 391h1v1h-1zM263 378h1v1h-1zM265 378h1v1h-1zM263 380h1v1h-1zM265 380h1v1h-1zM263 367h1v1h-1zM265 367h1v1h-1zM263 369h1v1h-1zM265 369h1v1h-1zM263 354h1v1h-1zM265 354h1v1h-1zM263 356h1v1h-1zM265 356h1v1h-1zM263 334h1v1h-1zM265 334h1v1h-1zM263 336h1v1h-1zM265 336h1v1h-1zM263 172h1v1h-1zM265 172h1v1h-1zM263 174h1v1h-1zM265 174h1v1h-1zM266 540h1v1h-1zM268 540h1v1h-1zM266 542h1v1h-1zM268 542h1v1h-1zM266 503h1v1h-1zM268 503h1v1h-1zM266 505h1v1h-1zM268 505h1v1h-1zM266 501h1v1h-1zM268 501h1v1h-1zM266 503h1v1h-1zM268 503h1v1h-1zM266 495h1v1h-1zM268 495h1v1h-1zM266 497h1v1h-1zM268 497h1v1h-1zM266 492h1v1h-1zM268 492h1v1h-1zM266 494h1v1h-1zM268 494h1v1h-1zM266 490h1v1h-1zM268 490h1v1h-1zM266 492h1v1h-1zM268 492h1v1h-1zM266 488h1v1h-1zM268 488h1v1h-1zM266 490h1v1h-1zM268 490h1v1h-1zM266 486h1v1h-1zM268 486h1v1h-1zM266 488h1v1h-1zM268 488h1v1h-1zM266 484h1v1h-1zM268 484h1v1h-1zM266 486h1v1h-1zM268 486h1v1h-1zM266 482h1v1h-1zM268 482h1v1h-1zM266 484h1v1h-1zM268 484h1v1h-1zM266 479h1v1h-1zM268 479h1v1h-1zM266 481h1v1h-1zM268 481h1v1h-1zM266 477h1v1h-1zM268 477h1v1h-1zM266 479h1v1h-1zM268 479h1v1h-1zM266 475h1v1h-1zM268 475h1v1h-1zM266 477h1v1h-1zM268 477h1v1h-1zM266 473h1v1h-1zM268 473h1v1h-1zM266 475h1v1h-1zM268 475h1v1h-1zM266 471h1v1h-1zM268 471h1v1h-1zM266 473h1v1h-1zM268 473h1v1h-1zM266 469h1v1h-1zM268 469h1v1h-1zM266 471h1v1h-1zM268 471h1v1h-1zM266 466h1v1h-1zM268 466h1v1h-1zM266 468h1v1h-1zM268 468h1v1h-1zM266 464h1v1h-1zM268 464h1v1h-1zM266 466h1v1h-1zM268 466h1v1h-1zM266 462h1v1h-1zM268 462h1v1h-1zM266 464h1v1h-1zM268 464h1v1h-1zM266 460h1v1h-1zM268 460h1v1h-1zM266 462h1v1h-1zM268 462h1v1h-1zM266 458h1v1h-1zM268 458h1v1h-1zM266 460h1v1h-1zM268 460h1v1h-1zM266 456h1v1h-1zM268 456h1v1h-1zM266 458h1v1h-1zM268 458h1v1h-1zM266 447h1v1h-1zM268 447h1v1h-1zM266 449h1v1h-1zM268 449h1v1h-1zM266 438h1v1h-1zM268 438h1v1h-1zM266 440h1v1h-1zM268 440h1v1h-1zM266 436h1v1h-1zM268 436h1v1h-1zM266 438h1v1h-1zM268 438h1v1h-1zM266 423h1v1h-1zM268 423h1v1h-1zM266 425h1v1h-1zM268 425h1v1h-1zM266 397h1v1h-1zM268 397h1v1h-1zM266 399h1v1h-1zM268 399h1v1h-1zM269 531h1v1h-1zM271 531h1v1h-1zM269 533h1v1h-1zM271 533h1v1h-1zM269 497h1v1h-1zM271 497h1v1h-1zM269 499h1v1h-1zM271 499h1v1h-1zM269 492h1v1h-1zM271 492h1v1h-1zM269 494h1v1h-1zM271 494h1v1h-1zM269 490h1v1h-1zM271 490h1v1h-1zM269 492h1v1h-1zM271 492h1v1h-1zM269 488h1v1h-1zM271 488h1v1h-1zM269 490h1v1h-1zM271 490h1v1h-1zM269 486h1v1h-1zM271 486h1v1h-1zM269 488h1v1h-1zM271 488h1v1h-1zM269 484h1v1h-1zM271 484h1v1h-1zM269 486h1v1h-1zM271 486h1v1h-1zM269 482h1v1h-1zM271 482h1v1h-1zM269 484h1v1h-1zM271 484h1v1h-1zM269 479h1v1h-1zM271 479h1v1h-1zM269 481h1v1h-1zM271 481h1v1h-1zM269 477h1v1h-1zM271 477h1v1h-1zM269 479h1v1h-1zM271 479h1v1h-1zM269 475h1v1h-1zM271 475h1v1h-1zM269 477h1v1h-1zM271 477h1v1h-1zM269 473h1v1h-1zM271 473h1v1h-1zM269 475h1v1h-1zM271 475h1v1h-1zM269 471h1v1h-1zM271 471h1v1h-1zM269 473h1v1h-1zM271 473h1v1h-1zM269 469h1v1h-1zM271 469h1v1h-1zM269 471h1v1h-1zM271 471h1v1h-1zM269 466h1v1h-1zM271 466h1v1h-1zM269 468h1v1h-1zM271 468h1v1h-1zM269 464h1v1h-1zM271 464h1v1h-1zM269 466h1v1h-1zM271 466h1v1h-1zM269 462h1v1h-1zM271 462h1v1h-1zM269 464h1v1h-1zM271 464h1v1h-1zM269 456h1v1h-1zM271 456h1v1h-1zM269 458h1v1h-1zM271 458h1v1h-1zM269 453h1v1h-1zM271 453h1v1h-1zM269 455h1v1h-1zM271 455h1v1h-1zM269 447h1v1h-1zM271 447h1v1h-1zM269 449h1v1h-1zM271 449h1v1h-1zM269 445h1v1h-1zM271 445h1v1h-1zM269 447h1v1h-1zM271 447h1v1h-1zM273 499h1v1h-1zM275 499h1v1h-1zM273 501h1v1h-1zM275 501h1v1h-1zM273 490h1v1h-1zM275 490h1v1h-1zM273 492h1v1h-1zM275 492h1v1h-1zM273 486h1v1h-1zM275 486h1v1h-1zM273 488h1v1h-1zM275 488h1v1h-1zM273 484h1v1h-1zM275 484h1v1h-1zM273 486h1v1h-1zM275 486h1v1h-1zM273 482h1v1h-1zM275 482h1v1h-1zM273 484h1v1h-1zM275 484h1v1h-1zM273 479h1v1h-1zM275 479h1v1h-1zM273 481h1v1h-1zM275 481h1v1h-1zM273 477h1v1h-1zM275 477h1v1h-1zM273 479h1v1h-1zM275 479h1v1h-1zM273 475h1v1h-1zM275 475h1v1h-1zM273 477h1v1h-1zM275 477h1v1h-1zM273 473h1v1h-1zM275 473h1v1h-1zM273 475h1v1h-1zM275 475h1v1h-1zM273 471h1v1h-1zM275 471h1v1h-1zM273 473h1v1h-1zM275 473h1v1h-1zM273 453h1v1h-1zM275 453h1v1h-1zM273 455h1v1h-1zM275 455h1v1h-1zM273 449h1v1h-1zM275 449h1v1h-1zM273 451h1v1h-1zM275 451h1v1h-1zM273 360h1v1h-1zM275 360h1v1h-1zM273 362h1v1h-1zM275 362h1v1h-1zM276 527h1v1h-1zM278 527h1v1h-1zM276 529h1v1h-1zM278 529h1v1h-1zM276 514h1v1h-1zM278 514h1v1h-1zM276 516h1v1h-1zM278 516h1v1h-1zM276 512h1v1h-1zM278 512h1v1h-1zM276 514h1v1h-1zM278 514h1v1h-1zM276 508h1v1h-1zM278 508h1v1h-1zM276 510h1v1h-1zM278 510h1v1h-1zM276 505h1v1h-1zM278 505h1v1h-1zM276 507h1v1h-1zM278 507h1v1h-1zM276 503h1v1h-1zM278 503h1v1h-1zM276 505h1v1h-1zM278 505h1v1h-1zM276 490h1v1h-1zM278 490h1v1h-1zM276 492h1v1h-1zM278 492h1v1h-1zM276 479h1v1h-1zM278 479h1v1h-1zM276 481h1v1h-1zM278 481h1v1h-1zM276 477h1v1h-1zM278 477h1v1h-1zM276 479h1v1h-1zM278 479h1v1h-1zM276 475h1v1h-1zM278 475h1v1h-1zM276 477h1v1h-1zM278 477h1v1h-1zM276 473h1v1h-1zM278 473h1v1h-1zM276 475h1v1h-1zM278 475h1v1h-1zM276 469h1v1h-1zM278 469h1v1h-1zM276 471h1v1h-1zM278 471h1v1h-1zM276 464h1v1h-1zM278 464h1v1h-1zM276 466h1v1h-1zM278 466h1v1h-1zM276 462h1v1h-1zM278 462h1v1h-1zM276 464h1v1h-1zM278 464h1v1h-1zM276 458h1v1h-1zM278 458h1v1h-1zM276 460h1v1h-1zM278 460h1v1h-1zM276 440h1v1h-1zM278 440h1v1h-1zM276 442h1v1h-1zM278 442h1v1h-1zM276 434h1v1h-1zM278 434h1v1h-1zM276 436h1v1h-1zM278 436h1v1h-1zM276 410h1v1h-1zM278 410h1v1h-1zM276 412h1v1h-1zM278 412h1v1h-1zM279 499h1v1h-1zM281 499h1v1h-1zM279 501h1v1h-1zM281 501h1v1h-1zM279 495h1v1h-1zM281 495h1v1h-1zM279 497h1v1h-1zM281 497h1v1h-1zM279 482h1v1h-1zM281 482h1v1h-1zM279 484h1v1h-1zM281 484h1v1h-1zM279 473h1v1h-1zM281 473h1v1h-1zM279 475h1v1h-1zM281 475h1v1h-1zM279 464h1v1h-1zM281 464h1v1h-1zM279 466h1v1h-1zM281 466h1v1h-1zM279 462h1v1h-1zM281 462h1v1h-1zM279 464h1v1h-1zM281 464h1v1h-1zM279 438h1v1h-1zM281 438h1v1h-1zM279 440h1v1h-1zM281 440h1v1h-1zM279 414h1v1h-1zM281 414h1v1h-1zM279 416h1v1h-1zM281 416h1v1h-1zM279 412h1v1h-1zM281 412h1v1h-1zM279 414h1v1h-1zM281 414h1v1h-1zM279 389h1v1h-1zM281 389h1v1h-1zM279 391h1v1h-1zM281 391h1v1h-1zM283 490h1v1h-1zM285 490h1v1h-1zM283 492h1v1h-1zM285 492h1v1h-1zM283 486h1v1h-1zM285 486h1v1h-1zM283 488h1v1h-1zM285 488h1v1h-1zM283 466h1v1h-1zM285 466h1v1h-1zM283 468h1v1h-1zM285 468h1v1h-1zM283 460h1v1h-1zM285 460h1v1h-1zM283 462h1v1h-1zM285 462h1v1h-1zM283 410h1v1h-1zM285 410h1v1h-1zM283 412h1v1h-1zM285 412h1v1h-1zM286 521h1v1h-1zM288 521h1v1h-1zM286 523h1v1h-1zM288 523h1v1h-1zM286 516h1v1h-1zM288 516h1v1h-1zM286 518h1v1h-1zM288 518h1v1h-1zM286 514h1v1h-1zM288 514h1v1h-1zM286 516h1v1h-1zM288 516h1v1h-1zM286 505h1v1h-1zM288 505h1v1h-1zM286 507h1v1h-1zM288 507h1v1h-1zM286 486h1v1h-1zM288 486h1v1h-1zM286 488h1v1h-1zM288 488h1v1h-1zM286 484h1v1h-1zM288 484h1v1h-1zM286 486h1v1h-1zM288 486h1v1h-1zM286 479h1v1h-1zM288 479h1v1h-1zM286 481h1v1h-1zM288 481h1v1h-1zM286 477h1v1h-1zM288 477h1v1h-1zM286 479h1v1h-1zM288 479h1v1h-1zM286 475h1v1h-1zM288 475h1v1h-1zM286 477h1v1h-1zM288 477h1v1h-1zM286 464h1v1h-1zM288 464h1v1h-1zM286 466h1v1h-1zM288 466h1v1h-1zM286 462h1v1h-1zM288 462h1v1h-1zM286 464h1v1h-1zM288 464h1v1h-1zM286 436h1v1h-1zM288 436h1v1h-1zM286 438h1v1h-1zM288 438h1v1h-1zM286 434h1v1h-1zM288 434h1v1h-1zM286 436h1v1h-1zM288 436h1v1h-1zM286 421h1v1h-1zM288 421h1v1h-1zM286 423h1v1h-1zM288 423h1v1h-1zM286 419h1v1h-1zM288 419h1v1h-1zM286 421h1v1h-1zM288 421h1v1h-1zM289 514h1v1h-1zM291 514h1v1h-1zM289 516h1v1h-1zM291 516h1v1h-1zM289 508h1v1h-1zM291 508h1v1h-1zM289 510h1v1h-1zM291 510h1v1h-1zM289 505h1v1h-1zM291 505h1v1h-1zM289 507h1v1h-1zM291 507h1v1h-1zM289 495h1v1h-1zM291 495h1v1h-1zM289 497h1v1h-1zM291 497h1v1h-1zM289 482h1v1h-1zM291 482h1v1h-1zM289 484h1v1h-1zM291 484h1v1h-1zM289 473h1v1h-1zM291 473h1v1h-1zM289 475h1v1h-1zM291 475h1v1h-1zM289 471h1v1h-1zM291 471h1v1h-1zM289 473h1v1h-1zM291 473h1v1h-1zM289 456h1v1h-1zM291 456h1v1h-1zM289 458h1v1h-1zM291 458h1v1h-1zM289 421h1v1h-1zM291 421h1v1h-1zM289 423h1v1h-1zM291 423h1v1h-1zM289 412h1v1h-1zM291 412h1v1h-1zM289 414h1v1h-1zM291 414h1v1h-1zM293 523h1v1h-1zM295 523h1v1h-1zM293 525h1v1h-1zM295 525h1v1h-1zM293 514h1v1h-1zM295 514h1v1h-1zM293 516h1v1h-1zM295 516h1v1h-1zM293 510h1v1h-1zM295 510h1v1h-1zM293 512h1v1h-1zM295 512h1v1h-1zM293 482h1v1h-1zM295 482h1v1h-1zM293 484h1v1h-1zM295 484h1v1h-1zM293 479h1v1h-1zM295 479h1v1h-1zM293 481h1v1h-1zM295 481h1v1h-1zM293 471h1v1h-1zM295 471h1v1h-1zM293 473h1v1h-1zM295 473h1v1h-1zM293 460h1v1h-1zM295 460h1v1h-1zM293 462h1v1h-1zM295 462h1v1h-1zM293 432h1v1h-1zM295 432h1v1h-1zM293 434h1v1h-1zM295 434h1v1h-1zM296 525h1v1h-1zM298 525h1v1h-1zM296 527h1v1h-1zM298 527h1v1h-1zM296 516h1v1h-1zM298 516h1v1h-1zM296 518h1v1h-1zM298 518h1v1h-1zM296 514h1v1h-1zM298 514h1v1h-1zM296 516h1v1h-1zM298 516h1v1h-1zM296 512h1v1h-1zM298 512h1v1h-1zM296 514h1v1h-1zM298 514h1v1h-1zM296 510h1v1h-1zM298 510h1v1h-1zM296 512h1v1h-1zM298 512h1v1h-1zM296 497h1v1h-1zM298 497h1v1h-1zM296 499h1v1h-1zM298 499h1v1h-1zM296 490h1v1h-1zM298 490h1v1h-1zM296 492h1v1h-1zM298 492h1v1h-1zM296 475h1v1h-1zM298 475h1v1h-1zM296 477h1v1h-1zM298 477h1v1h-1zM296 473h1v1h-1zM298 473h1v1h-1zM296 475h1v1h-1zM298 475h1v1h-1zM296 464h1v1h-1zM298 464h1v1h-1zM296 466h1v1h-1zM298 466h1v1h-1zM296 458h1v1h-1zM298 458h1v1h-1zM296 460h1v1h-1zM298 460h1v1h-1zM296 453h1v1h-1zM298 453h1v1h-1zM296 455h1v1h-1zM298 455h1v1h-1zM296 434h1v1h-1zM298 434h1v1h-1zM296 436h1v1h-1zM298 436h1v1h-1zM296 432h1v1h-1zM298 432h1v1h-1zM296 434h1v1h-1zM298 434h1v1h-1zM296 389h1v1h-1zM298 389h1v1h-1zM296 391h1v1h-1zM298 391h1v1h-1zM300 516h1v1h-1zM302 516h1v1h-1zM300 518h1v1h-1zM302 518h1v1h-1zM300 501h1v1h-1zM302 501h1v1h-1zM300 503h1v1h-1zM302 503h1v1h-1zM300 497h1v1h-1zM302 497h1v1h-1zM300 499h1v1h-1zM302 499h1v1h-1zM300 482h1v1h-1zM302 482h1v1h-1zM300 484h1v1h-1zM302 484h1v1h-1zM300 471h1v1h-1zM302 471h1v1h-1zM300 473h1v1h-1zM302 473h1v1h-1zM300 469h1v1h-1zM302 469h1v1h-1zM300 471h1v1h-1zM302 471h1v1h-1zM300 440h1v1h-1zM302 440h1v1h-1zM300 442h1v1h-1zM302 442h1v1h-1zM303 495h1v1h-1zM305 495h1v1h-1zM303 497h1v1h-1zM305 497h1v1h-1zM303 486h1v1h-1zM305 486h1v1h-1zM303 488h1v1h-1zM305 488h1v1h-1zM303 484h1v1h-1zM305 484h1v1h-1zM303 486h1v1h-1zM305 486h1v1h-1zM303 482h1v1h-1zM305 482h1v1h-1zM303 484h1v1h-1zM305 484h1v1h-1zM303 475h1v1h-1zM305 475h1v1h-1zM303 477h1v1h-1zM305 477h1v1h-1zM303 466h1v1h-1zM305 466h1v1h-1zM303 468h1v1h-1zM305 468h1v1h-1zM303 458h1v1h-1zM305 458h1v1h-1zM303 460h1v1h-1zM305 460h1v1h-1zM303 456h1v1h-1zM305 456h1v1h-1zM303 458h1v1h-1zM305 458h1v1h-1zM303 436h1v1h-1zM305 436h1v1h-1zM303 438h1v1h-1zM305 438h1v1h-1zM306 508h1v1h-1zM308 508h1v1h-1zM306 510h1v1h-1zM308 510h1v1h-1zM306 479h1v1h-1zM308 479h1v1h-1zM306 481h1v1h-1zM308 481h1v1h-1zM306 449h1v1h-1zM308 449h1v1h-1zM306 451h1v1h-1zM308 451h1v1h-1zM306 440h1v1h-1zM308 440h1v1h-1zM306 442h1v1h-1zM308 442h1v1h-1zM306 432h1v1h-1zM308 432h1v1h-1zM306 434h1v1h-1zM308 434h1v1h-1zM310 544h1v1h-1zM312 544h1v1h-1zM310 546h1v1h-1zM312 546h1v1h-1zM310 486h1v1h-1zM312 486h1v1h-1zM310 488h1v1h-1zM312 488h1v1h-1zM310 482h1v1h-1zM312 482h1v1h-1zM310 484h1v1h-1zM312 484h1v1h-1zM310 473h1v1h-1zM312 473h1v1h-1zM310 475h1v1h-1zM312 475h1v1h-1zM310 432h1v1h-1zM312 432h1v1h-1zM310 434h1v1h-1zM312 434h1v1h-1zM310 427h1v1h-1zM312 427h1v1h-1zM310 429h1v1h-1zM312 429h1v1h-1zM313 540h1v1h-1zM315 540h1v1h-1zM313 542h1v1h-1zM315 542h1v1h-1zM313 531h1v1h-1zM315 531h1v1h-1zM313 533h1v1h-1zM315 533h1v1h-1zM313 482h1v1h-1zM315 482h1v1h-1zM313 484h1v1h-1zM315 484h1v1h-1zM313 475h1v1h-1zM315 475h1v1h-1zM313 477h1v1h-1zM315 477h1v1h-1zM313 473h1v1h-1zM315 473h1v1h-1zM313 475h1v1h-1zM315 475h1v1h-1zM313 469h1v1h-1zM315 469h1v1h-1zM313 471h1v1h-1zM315 471h1v1h-1zM313 466h1v1h-1zM315 466h1v1h-1zM313 468h1v1h-1zM315 468h1v1h-1zM313 423h1v1h-1zM315 423h1v1h-1zM313 425h1v1h-1zM315 425h1v1h-1zM316 525h1v1h-1zM318 525h1v1h-1zM316 527h1v1h-1zM318 527h1v1h-1zM316 473h1v1h-1zM318 473h1v1h-1zM316 475h1v1h-1zM318 475h1v1h-1zM316 462h1v1h-1zM318 462h1v1h-1zM316 464h1v1h-1zM318 464h1v1h-1zM316 389h1v1h-1zM318 389h1v1h-1zM316 391h1v1h-1zM318 391h1v1h-1zM320 527h1v1h-1zM322 527h1v1h-1zM320 529h1v1h-1zM322 529h1v1h-1zM320 495h1v1h-1zM322 495h1v1h-1zM320 497h1v1h-1zM322 497h1v1h-1zM320 464h1v1h-1zM322 464h1v1h-1zM320 466h1v1h-1zM322 466h1v1h-1zM320 434h1v1h-1zM322 434h1v1h-1zM320 436h1v1h-1zM322 436h1v1h-1zM320 389h1v1h-1zM322 389h1v1h-1zM320 391h1v1h-1zM322 391h1v1h-1zM323 486h1v1h-1zM325 486h1v1h-1zM323 488h1v1h-1zM325 488h1v1h-1zM323 451h1v1h-1zM325 451h1v1h-1zM323 453h1v1h-1zM325 453h1v1h-1zM323 436h1v1h-1zM325 436h1v1h-1zM323 438h1v1h-1zM325 438h1v1h-1zM327 505h1v1h-1zM329 505h1v1h-1zM327 507h1v1h-1zM329 507h1v1h-1zM327 488h1v1h-1zM329 488h1v1h-1zM327 490h1v1h-1zM329 490h1v1h-1zM327 482h1v1h-1zM329 482h1v1h-1zM327 484h1v1h-1zM329 484h1v1h-1zM327 458h1v1h-1zM329 458h1v1h-1zM327 460h1v1h-1zM329 460h1v1h-1zM327 417h1v1h-1zM329 417h1v1h-1zM327 419h1v1h-1zM329 419h1v1h-1zM330 497h1v1h-1zM332 497h1v1h-1zM330 499h1v1h-1zM332 499h1v1h-1zM330 456h1v1h-1zM332 456h1v1h-1zM330 458h1v1h-1zM332 458h1v1h-1zM330 443h1v1h-1zM332 443h1v1h-1zM330 445h1v1h-1zM332 445h1v1h-1zM337 397h1v1h-1zM339 397h1v1h-1zM337 399h1v1h-1zM339 399h1v1h-1zM343 401h1v1h-1zM345 401h1v1h-1zM343 403h1v1h-1zM345 403h1v1h-1zM343 389h1v1h-1zM345 389h1v1h-1zM343 391h1v1h-1zM345 391h1v1h-1zM347 391h1v1h-1zM349 391h1v1h-1zM347 393h1v1h-1zM349 393h1v1h-1zM347 389h1v1h-1zM349 389h1v1h-1zM347 391h1v1h-1zM349 391h1v1h-1zM350 492h1v1h-1zM352 492h1v1h-1zM350 494h1v1h-1zM352 494h1v1h-1zM350 490h1v1h-1zM352 490h1v1h-1zM350 492h1v1h-1zM352 492h1v1h-1zM350 414h1v1h-1zM352 414h1v1h-1zM350 416h1v1h-1zM352 416h1v1h-1zM350 389h1v1h-1zM352 389h1v1h-1zM350 391h1v1h-1zM352 391h1v1h-1zM357 401h1v1h-1zM359 401h1v1h-1zM357 403h1v1h-1zM359 403h1v1h-1zM357 389h1v1h-1zM359 389h1v1h-1zM357 391h1v1h-1zM359 391h1v1h-1zM360 497h1v1h-1zM362 497h1v1h-1zM360 499h1v1h-1zM362 499h1v1h-1zM364 547h1v1h-1zM366 547h1v1h-1zM364 549h1v1h-1zM366 549h1v1h-1zM364 464h1v1h-1zM366 464h1v1h-1zM364 466h1v1h-1zM366 466h1v1h-1zM364 389h1v1h-1zM366 389h1v1h-1zM364 391h1v1h-1zM366 391h1v1h-1zM367 389h1v1h-1zM369 389h1v1h-1zM367 391h1v1h-1zM369 391h1v1h-1zM374 389h1v1h-1zM376 389h1v1h-1zM374 391h1v1h-1zM376 391h1v1h-1zM377 389h1v1h-1zM379 389h1v1h-1zM377 391h1v1h-1zM379 391h1v1h-1zM380 389h1v1h-1zM382 389h1v1h-1zM380 391h1v1h-1zM382 391h1v1h-1zM394 391h1v1h-1zM396 391h1v1h-1zM394 393h1v1h-1zM396 393h1v1h-1zM397 432h1v1h-1zM399 432h1v1h-1zM397 434h1v1h-1zM399 434h1v1h-1zM407 501h1v1h-1zM409 501h1v1h-1zM407 503h1v1h-1zM409 503h1v1h-1zM418 501h1v1h-1zM420 501h1v1h-1zM418 503h1v1h-1zM420 503h1v1h-1zM418 497h1v1h-1zM420 497h1v1h-1zM418 499h1v1h-1zM420 499h1v1h-1z" fill="#808040" fill-opacity="0.7"/><path d="M142 297h1v2h2v1h-2v2h-1v-2h-2v-1h2zM142 294h1v2h2v1h-2v2h-1v-2h-2v-1h2zM142 290h1v2h2v1h-2v2h-1v-2h-2v-1h2zM142 284h1v2h2v1h-2v2h-1v-2h-2v-1h2zM142 279h1v2h2v1h-2v2h-1v-2h-2v-1h2zM142 275h1v2h2v1h-2v2h-1v-2h-2v-1h2zM142 273h1v2h2v1h-2v2h-1v-2h-2v-1h2zM142 266h1v2h2v1h-2v2h-1v-2h-2v-1h2zM146 385h1v2h2v1h-2v2h-1v-2h-2v-1h2zM146 383h1v2h2v1h-2v2h-1v-2h-2v-1h2zM146 305h1v2h2v1h-2v2h-1v-2h-2v-1h2zM146 299h1v2h2v1h-2v2h-1v-2h-2v-1h2zM146 297h1v2h2v1h-2v2h-1v-2h-2v-1h2zM146 292h1v2h2v1h-2v2h-1v-2h-2v-1h2zM146 288h1v2h2v1h-2v2h-1v-2h-2v-1h2zM146 286h1v2h2v1h-2v2h-1v-2h-2v-1h2zM146 284h1v2h2v1h-2v2h-1v-2h-2v-1h2zM146 281h1v2h2v1h-2v2h-1v-2h-2v-1h2zM146 277h1v2h2v1h-2v2h-1v-2h-2v-1h2zM146 275h1v2h2v1h-2v2h-1v-2h-2v-1h2zM146 273h1v2h2v1h-2v2h-1v-2h-2v-1h2zM146 271h1v2h2v1h-2v2h-1v-2h-2v-1h2zM146 268h1v2h2v1h-2v2h-1v-2h-2v-1h2zM146 266h1v2h2v1h-2v2h-1v-2h-2v-1h2zM146 264h1v2h2v1h-2v2h-1v-2h-2v-1h2zM146 262h1v2h2v1h-2v2h-1v-2h-2v-1h2zM146 255h1v2h2v1h-2v2h-1v-2h-2v-1h2zM146 249h1v2h2v1h-2v2h-1v-2h-2v-1h2zM149 362h1v2h2v1h-2v2h-1v-2h-2v-1h2zM149 353h1v2h2v1h-2v2h-1v-2h-2v-1h2zM149 307h1v2h2v1h-2v2h-1v-2h-2v-1h2zM149 303h1v2h2v1h-2v2h-1v-2h-2v-1h2zM149 299h1v2h2v1h-2v2h-1v-2h-2v-1h2zM149 297h1v2h2v1h-2v2h-1v-2h-2v-1h2zM149 292h1v2h2v1h-2v2h-1v-2h-2v-1h2zM149 290h1v2h2v1h-2v2h-1v-2h-2v-1h2zM149 288h1v2h2v1h-2v2h-1v-2h-2v-1h2zM149 286h1v2h2v1h-2v2h-1v-2h-2v-1h2zM149 284h1v2h2v1h-2v2h-1v-2h-2v-1h2zM149 281h1v2h2v1h-2v2h-1v-2h-2v-1h2zM149 279h1v2h2v1h-2v2h-1v-2h-2v-1h2zM149 277h1v2h2v1h-2v2h-1v-2h-2v-1h2zM149 275h1v2h2v1h-2v2h-1v-2h-2v-1h2zM149 271h1v2h2v1h-2v2h-1v-2h-2v-1h2zM149 268h1v2h2v1h-2v2h-1v-2h-2v-1h2zM149 266h1v2h2v1h-2v2h-1v-2h-2v-1h2zM149 264h1v2h2v1h-2v2h-1v-2h-2v-1h2zM149 262h1v2h2v1h-2v2h-1v-2h-2v-1h2zM149 251h1v2h2v1h-2v2h-1v-2h-2v-1h2zM152 407h1v2h2v1h-2v2h-1v-2h-2v-1h2zM152 375h1v2h2v1h-2v2h-1v-2h-2v-1h2zM152 312h1v2h2v1h-2v2h-1v-2h-2v-1h2zM152 305h1v2h2v1h-2v2h-1v-2h-2v-1h2zM152 303h1v2h2v1h-2v2h-1v-2h-2v-1h2zM152 301h1v2h2v1h-2v2h-1v-2h-2v-1h2zM152 299h1v2h2v1h-2v2h-1v-2h-2v-1h2zM152 297h1v2h2v1h-2v2h-1v-2h-2v-1h2zM152 294h1v2h2v1h-2v2h-1v-2h-2v-1h2zM152 292h1v2h2v1h-2v2h-1v-2h-2v-1h2zM152 290h1v2h2v1h-2v2h-1v-2h-2v-1h2zM152 288h1v2h2v1h-2v2h-1v-2h-2v-1h2zM152 284h1v2h2v1h-2v2h-1v-2h-2v-1h2zM152 281h1v2h2v1h-2v2h-1v-2h-2v-1h2zM152 279h1v2h2v1h-2v2h-1v-2h-2v-1h2zM152 271h1v2h2v1h-2v2h-1v-2h-2v-1h2zM152 268h1v2h2v1h-2v2h-1v-2h-2v-1h2zM152 266h1v2h2v1h-2v2h-1v-2h-2v-1h2zM152 260h1v2h2v1h-2v2h-1v-2h-2v-1h2zM152 258h1v2h2v1h-2v2h-1v-2h-2v-1h2zM152 255h1v2h2v1h-2v2h-1v-2h-2v-1h2zM152 253h1v2h2v1h-2v2h-1v-2h-2v-1h2zM152 247h1v2h2v1h-2v2h-1v-2h-2v-1h2zM152 245h1v2h2v1h-2v2h-1v-2h-2v-1h2zM152 236h1v2h2v1h-2v2h-1v-2h-2v-1h2zM156 429h1v2h2v1h-2v2h-1v-2h-2v-1h2zM156 418h1v2h2v1h-2v2h-1v-2h-2v-1h2zM156 413h1v2h2v1h-2v2h-1v-2h-2v-1h2zM156 392h1v2h2v1h-2v2h-1v-2h-2v-1h2zM156 366h1v2h2v1h-2v2h-1v-2h-2v-1h2zM156 364h1v2h2v1h-2v2h-1v-2h-2v-1h2zM156 307h1v2h2v1h-2v2h-1v-2h-2v-1h2zM156 305h1v2h2v1h-2v2h-1v-2h-2v-1h2zM156 303h1v2h2v1h-2v2h-1v-2h-2v-1h2zM156 301h1v2h2v1h-2v2h-1v-2h-2v-1h2zM156 297h1v2h2v1h-2v2h-1v-2h-2v-1h2zM156 290h1v2h2v1h-2v2h-1v-2h-2v-1h2zM156 288h1v2h2v1h-2v2h-1v-2h-2v-1h2zM156 286h1v2h2v1h-2v2h-1v-2h-2v-1h2zM156 284h1v2h2v1h-2v2h-1v-2h-2v-1h2zM156 281h1v2h2v1h-2v2h-1v-2h-2v-1h2zM156 279h1v2h2v1h-2v2h-1v-2h-2v-1h2zM156 277h1v2h2v1h-2v2h-1v-2h-2v-1h2zM156 275h1v2h2v1h-2v2h-1v-2h-2v-1h2zM156 273h1v2h2v1h-2v2h-1v-2h-2v-1h2zM156 271h1v2h2v1h-2v2h-1v-2h-2v-1h2zM156 268h1v2h2v1h-2v2h-1v-2h-2v-1h2zM156 266h1v2h2v1h-2v2h-1v-2h-2v-1h2zM156 264h1v2h2v1h-2v2h-1v-2h-2v-1h2zM156 262h1v2h2v1h-2v2h-1v-2h-2v-1h2zM156 260h1v2h2v1h-2v2h-1v-2h-2v-1h2zM156 253h1v2h2v1h-2v2h-1v-2h-2v-1h2zM156 251h1v2h2v1h-2v2h-1v-2h-2v-1h2zM156 249h1v2h2v1h-2v2h-1v-2h-2v-1h2zM156 245h1v2h2v1h-2v2h-1v-2h-2v-1h2zM159 483h1v2h2v1h-2v2h-1v-2h-2v-1h2zM159 377h1v2h2v1h-2v2h-1v-2h-2v-1h2zM159 366h1v2h2v1h-2v2h-1v-2h-2v-1h2zM159 314h1v2h2v1h-2v2h-1v-2h-2v-1h2zM159 312h1v2h2v1h-2v2h-1v-2h-2v-1h2zM159 310h1v2h2v1h-2v2h-1v-2h-2v-1h2zM159 307h1v2h2v1h-2v2h-1v-2h-2v-1h2zM159 303h1v2h2v1h-2v2h-1v-2h-2v-1h2zM159 301h1v2h2v1h-2v2h-1v-2h-2v-1h2zM159 297h1v2h2v1h-2v2h-1v-2h-2v-1h2zM159 294h1v2h2v1h-2v2h-1v-2h-2v-1h2zM159 292h1v2h2v1h-2v2h-1v-2h-2v-1h2zM159 290h1v2h2v1h-2v2h-1v-2h-2v-1h2zM159 288h1v2h2v1h-2v2h-1v-2h-2v-1h2zM159 281h1v2h2v1h-2v2h-1v-2h-2v-1h2zM159 279h1v2h2v1h-2v2h-1v-2h-2v-1h2zM159 277h1v2h2v1h-2v2h-1v-2h-2v-1h2zM159 275h1v2h2v1h-2v2h-1v-2h-2v-1h2zM159 273h1v2h2v1h-2v2h-1v-2h-2v-1h2zM159 271h1v2h2v1h-2v2h-1v-2h-2v-1h2zM159 268h1v2h2v1h-2v2h-1v-2h-2v-1h2zM159 266h1v2h2v1h-2v2h-1v-2h-2v-1h2zM159 264h1v2h2v1h-2v2h-1v-2h-2v-1h2zM159 249h1v2h2v1h-2v2h-1v-2h-2v-1h2zM159 242h1v2h2v1h-2v2h-1v-2h-2v-1h2zM159 240h1v2h2v1h-2v2h-1v-2h-2v-1h2zM162 472h1v2h2v1h-2v2h-1v-2h-2v-1h2zM162 433h1v2h2v1h-2v2h-1v-2h-2v-1h2zM162 344h1v2h2v1h-2v2h-1v-2h-2v-1h2zM162 327h1v2h2v1h-2v2h-1v-2h-2v-1h2zM162 323h1v2h2v1h-2v2h-1v-2h-2v-1h2zM162 320h1v2h2v1h-2v2h-1v-2h-2v-1h2zM162 305h1v2h2v1h-2v2h-1v-2h-2v-1h2zM162 303h1v2h2v1h-2v2h-1v-2h-2v-1h2zM162 301h1v2h2v1h-2v2h-1v-2h-2v-1h2zM162 299h1v2h2v1h-2v2h-1v-2h-2v-1h2zM162 297h1v2h2v1h-2v2h-1v-2h-2v-1h2zM162 294h1v2h2v1h-2v2h-1v-2h-2v-1h2zM162 288h1v2h2v1h-2v2h-1v-2h-2v-1h2zM162 286h1v2h2v1h-2v2h-1v-2h-2v-1h2zM162 281h1v2h2v1h-2v2h-1v-2h-2v-1h2zM162 279h1v2h2v1h-2v2h-1v-2h-2v-1h2zM162 273h1v2h2v1h-2v2h-1v-2h-2v-1h2zM162 271h1v2h2v1h-2v2h-1v-2h-2v-1h2zM162 268h1v2h2v1h-2v2h-1v-2h-2v-1h2zM162 264h1v2h2v1h-2v2h-1v-2h-2v-1h2zM162 249h1v2h2v1h-2v2h-1v-2h-2v-1h2zM162 247h1v2h2v1h-2v2h-1v-2h-2v-1h2zM162 245h1v2h2v1h-2v2h-1v-2h-2v-1h2zM166 522h1v2h2v1h-2v2h-1v-2h-2v-1h2zM166 457h1v2h2v1h-2v2h-1v-2h-2v-1h2zM166 333h1v2h2v1h-2v2h-1v-2h-2v-1h2zM166 320h1v2h2v1h-2v2h-1v-2h-2v-1h2zM166 318h1v2h2v1h-2v2h-1v-2h-2v-1h2zM166 312h1v2h2v1h-2v2h-1v-2h-2v-1h2zM166 307h1v2h2v1h-2v2h-1v-2h-2v-1h2zM166 301h1v2h2v1h-2v2h-1v-2h-2v-1h2zM166 299h1v2h2v1h-2v2h-1v-2h-2v-1h2zM166 297h1v2h2v1h-2v2h-1v-2h-2v-1h2zM166 294h1v2h2v1h-2v2h-1v-2h-2v-1h2zM166 292h1v2h2v1h-2v2h-1v-2h-2v-1h2zM166 290h1v2h2v1h-2v2h-1v-2h-2v-1h2zM166 288h1v2h2v1h-2v2h-1v-2h-2v-1h2zM166 286h1v2h2v1h-2v2h-1v-2h-2v-1h2zM166 281h1v2h2v1h-2v2h-1v-2h-2v-1h2zM166 279h1v2h2v1h-2v2h-1v-2h-2v-1h2zM166 277h1v2h2v1h-2v2h-1v-2h-2v-1h2zM166 262h1v2h2v1h-2v2h-1v-2h-2v-1h2zM166 258h1v2h2v1h-2v2h-1v-2h-2v-1h2zM166 255h1v2h2v1h-2v2h-1v-2h-2v-1h2zM166 251h1v2h2v1h-2v2h-1v-2h-2v-1h2zM166 242h1v2h2v1h-2v2h-1v-2h-2v-1h2zM166 219h1v2h2v1h-2v2h-1v-2h-2v-1h2zM169 342h1v2h2v1h-2v2h-1v-2h-2v-1h2zM169 340h1v2h2v1h-2v2h-1v-2h-2v-1h2zM169 336h1v2h2v1h-2v2h-1v-2h-2v-1h2zM169 333h1v2h2v1h-2v2h-1v-2h-2v-1h2zM169 312h1v2h2v1h-2v2h-1v-2h-2v-1h2zM169 310h1v2h2v1h-2v2h-1v-2h-2v-1h2zM169 307h1v2h2v1h-2v2h-1v-2h-2v-1h2zM169 305h1v2h2v1h-2v2h-1v-2h-2v-1h2zM169 301h1v2h2v1h-2v2h-1v-2h-2v-1h2zM169 294h1v2h2v1h-2v2h-1v-2h-2v-1h2zM169 292h1v2h2v1h-2v2h-1v-2h-2v-1h2zM169 286h1v2h2v1h-2v2h-1v-2h-2v-1h2zM169 284h1v2h2v1h-2v2h-1v-2h-2v-1h2zM169 279h1v2h2v1h-2v2h-1v-2h-2v-1h2zM169 277h1v2h2v1h-2v2h-1v-2h-2v-1h2zM169 275h1v2h2v1h-2v2h-1v-2h-2v-1h2zM169 266h1v2h2v1h-2v2h-1v-2h-2v-1h2zM169 260h1v2h2v1h-2v2h-1v-2h-2v-1h2zM169 253h1v2h2v1h-2v2h-1v-2h-2v-1h2zM169 240h1v2h2v1h-2v2h-1v-2h-2v-1h2zM169 208h1v2h2v1h-2v2h-1v-2h-2v-1h2zM173 448h1v2h2v1h-2v2h-1v-2h-2v-1h2zM173 416h1v2h2v1h-2v2h-1v-2h-2v-1h2zM173 346h1v2h2v1h-2v2h-1v-2h-2v-1h2zM173 340h1v2h2v1h-2v2h-1v-2h-2v-1h2zM173 333h1v2h2v1h-2v2h-1v-2h-2v-1h2zM173 325h1v2h2v1h-2v2h-1v-2h-2v-1h2zM173 316h1v2h2v1h-2v2h-1v-2h-2v-1h2zM173 314h1v2h2v1h-2v2h-1v-2h-2v-1h2zM173 312h1v2h2v1h-2v2h-1v-2h-2v-1h2zM173 310h1v2h2v1h-2v2h-1v-2h-2v-1h2zM173 307h1v2h2v1h-2v2h-1v-2h-2v-1h2zM173 305h1v2h2v1h-2v2h-1v-2h-2v-1h2zM173 303h1v2h2v1h-2v2h-1v-2h-2v-1h2zM173 297h1v2h2v1h-2v2h-1v-2h-2v-1h2zM173 294h1v2h2v1h-2v2h-1v-2h-2v-1h2zM173 286h1v2h2v1h-2v2h-1v-2h-2v-1h2zM173 284h1v2h2v1h-2v2h-1v-2h-2v-1h2zM173 249h1v2h2v1h-2v2h-1v-2h-2v-1h2zM173 240h1v2h2v1h-2v2h-1v-2h-2v-1h2zM173 223h1v2h2v1h-2v2h-1v-2h-2v-1h2zM176 357h1v2h2v1h-2v2h-1v-2h-2v-1h2zM176 344h1v2h2v1h-2v2h-1v-2h-2v-1h2zM176 342h1v2h2v1h-2v2h-1v-2h-2v-1h2zM176 338h1v2h2v1h-2v2h-1v-2h-2v-1h2zM176 336h1v2h2v1h-2v2h-1v-2h-2v-1h2zM176 333h1v2h2v1h-2v2h-1v-2h-2v-1h2zM176 331h1v2h2v1h-2v2h-1v-2h-2v-1h2zM176 329h1v2h2v1h-2v2h-1v-2h-2v-1h2zM176 320h1v2h2v1h-2v2h-1v-2h-2v-1h2zM176 316h1v2h2v1h-2v2h-1v-2h-2v-1h2zM176 314h1v2h2v1h-2v2h-1v-2h-2v-1h2zM176 312h1v2h2v1h-2v2h-1v-2h-2v-1h2zM176 310h1v2h2v1h-2v2h-1v-2h-2v-1h2zM176 307h1v2h2v1h-2v2h-1v-2h-2v-1h2zM176 305h1v2h2v1h-2v2h-1v-2h-2v-1h2zM176 303h1v2h2v1h-2v2h-1v-2h-2v-1h2zM176 301h1v2h2v1h-2v2h-1v-2h-2v-1h2zM176 299h1v2h2v1h-2v2h-1v-2h-2v-1h2zM176 294h1v2h2v1h-2v2h-1v-2h-2v-1h2zM179 496h1v2h2v1h-2v2h-1v-2h-2v-1h2zM179 442h1v2h2v1h-2v2h-1v-2h-2v-1h2zM179 409h1v2h2v1h-2v2h-1v-2h-2v-1h2zM179 407h1v2h2v1h-2v2h-1v-2h-2v-1h2zM179 405h1v2h2v1h-2v2h-1v-2h-2v-1h2zM179 368h1v2h2v1h-2v2h-1v-2h-2v-1h2zM179 364h1v2h2v1h-2v2h-1v-2h-2v-1h2zM179 362h1v2h2v1h-2v2h-1v-2h-2v-1h2zM179 359h1v2h2v1h-2v2h-1v-2h-2v-1h2zM179 351h1v2h2v1h-2v2h-1v-2h-2v-1h2zM179 342h1v2h2v1h-2v2h-1v-2h-2v-1h2zM179 333h1v2h2v1h-2v2h-1v-2h-2v-1h2zM179 329h1v2h2v1h-2v2h-1v-2h-2v-1h2zM179 327h1v2h2v1h-2v2h-1v-2h-2v-1h2zM179 325h1v2h2v1h-2v2h-1v-2h-2v-1h2zM179 320h1v2h2v1h-2v2h-1v-2h-2v-1h2zM179 318h1v2h2v1h-2v2h-1v-2h-2v-1h2zM179 316h1v2h2v1h-2v2h-1v-2h-2v-1h2zM179 314h1v2h2v1h-2v2h-1v-2h-2v-1h2zM179 297h1v2h2v1h-2v2h-1v-2h-2v-1h2zM179 290h1v2h2v1h-2v2h-1v-2h-2v-1h2zM179 225h1v2h2v1h-2v2h-1v-2h-2v-1h2zM183 448h1v2h2v1h-2v2h-1v-2h-2v-1h2zM183 446h1v2h2v1h-2v2h-1v-2h-2v-1h2zM183 437h1v2h2v1h-2v2h-1v-2h-2v-1h2zM183 413h1v2h2v1h-2v2h-1v-2h-2v-1h2zM183 400h1v2h2v1h-2v2h-1v-2h-2v-1h2zM183 379h1v2h2v1h-2v2h-1v-2h-2v-1h2zM183 366h1v2h2v1h-2v2h-1v-2h-2v-1h2zM183 362h1v2h2v1h-2v2h-1v-2h-2v-1h2zM183 359h1v2h2v1h-2v2h-1v-2h-2v-1h2zM183 357h1v2h2v1h-2v2h-1v-2h-2v-1h2zM183 353h1v2h2v1h-2v2h-1v-2h-2v-1h2zM183 331h1v2h2v1h-2v2h-1v-2h-2v-1h2zM183 329h1v2h2v1h-2v2h-1v-2h-2v-1h2zM183 327h1v2h2v1h-2v2h-1v-2h-2v-1h2zM183 323h1v2h2v1h-2v2h-1v-2h-2v-1h2zM183 318h1v2h2v1h-2v2h-1v-2h-2v-1h2zM183 316h1v2h2v1h-2v2h-1v-2h-2v-1h2zM183 314h1v2h2v1h-2v2h-1v-2h-2v-1h2zM183 305h1v2h2v1h-2v2h-1v-2h-2v-1h2zM183 229h1v2h2v1h-2v2h-1v-2h-2v-1h2zM186 459h1v2h2v1h-2v2h-1v-2h-2v-1h2zM186 433h1v2h2v1h-2v2h-1v-2h-2v-1h2zM186 388h1v2h2v1h-2v2h-1v-2h-2v-1h2zM186 385h1v2h2v1h-2v2h-1v-2h-2v-1h2zM186 379h1v2h2v1h-2v2h-1v-2h-2v-1h2zM186 377h1v2h2v1h-2v2h-1v-2h-2v-1h2zM186 375h1v2h2v1h-2v2h-1v-2h-2v-1h2zM186 372h1v2h2v1h-2v2h-1v-2h-2v-1h2zM186 368h1v2h2v1h-2v2h-1v-2h-2v-1h2zM186 362h1v2h2v1h-2v2h-1v-2h-2v-1h2zM186 353h1v2h2v1h-2v2h-1v-2h-2v-1h2zM186 338h1v2h2v1h-2v2h-1v-2h-2v-1h2zM186 336h1v2h2v1h-2v2h-1v-2h-2v-1h2zM186 333h1v2h2v1h-2v2h-1v-2h-2v-1h2zM186 329h1v2h2v1h-2v2h-1v-2h-2v-1h2zM186 325h1v2h2v1h-2v2h-1v-2h-2v-1h2zM186 323h1v2h2v1h-2v2h-1v-2h-2v-1h2zM186 318h1v2h2v1h-2v2h-1v-2h-2v-1h2zM186 294h1v2h2v1h-2v2h-1v-2h-2v-1h2zM189 450h1v2h2v1h-2v2h-1v-2h-2v-1h2zM189 435h1v2h2v1h-2v2h-1v-2h-2v-1h2zM189 426h1v2h2v1h-2v2h-1v-2h-2v-1h2zM189 422h1v2h2v1h-2v2h-1v-2h-2v-1h2zM189 420h1v2h2v1h-2v2h-1v-2h-2v-1h2zM189 377h1v2h2v1h-2v2h-1v-2h-2v-1h2zM189 375h1v2h2v1h-2v2h-1v-2h-2v-1h2zM189 372h1v2h2v1h-2v2h-1v-2h-2v-1h2zM189 370h1v2h2v1h-2v2h-1v-2h-2v-1h2zM189 368h1v2h2v1h-2v2h-1v-2h-2v-1h2zM189 366h1v2h2v1h-2v2h-1v-2h-2v-1h2zM189 364h1v2h2v1h-2v2h-1v-2h-2v-1h2zM189 362h1v2h2v1h-2v2h-1v-2h-2v-1h2zM189 342h1v2h2v1h-2v2h-1v-2h-2v-1h2zM189 340h1v2h2v1h-2v2h-1v-2h-2v-1h2zM189 336h1v2h2v1h-2v2h-1v-2h-2v-1h2zM189 327h1v2h2v1h-2v2h-1v-2h-2v-1h2zM189 325h1v2h2v1h-2v2h-1v-2h-2v-1h2zM189 323h1v2h2v1h-2v2h-1v-2h-2v-1h2zM193 470h1v2h2v1h-2v2h-1v-2h-2v-1h2zM193 452h1v2h2v1h-2v2h-1v-2h-2v-1h2zM193 450h1v2h2v1h-2v2h-1v-2h-2v-1h2zM193 439h1v2h2v1h-2v2h-1v-2h-2v-1h2zM193 403h1v2h2v1h-2v2h-1v-2h-2v-1h2zM193 381h1v2h2v1h-2v2h-1v-2h-2v-1h2zM193 379h1v2h2v1h-2v2h-1v-2h-2v-1h2zM193 372h1v2h2v1h-2v2h-1v-2h-2v-1h2zM193 370h1v2h2v1h-2v2h-1v-2h-2v-1h2zM193 366h1v2h2v1h-2v2h-1v-2h-2v-1h2zM193 364h1v2h2v1h-2v2h-1v-2h-2v-1h2zM193 351h1v2h2v1h-2v2h-1v-2h-2v-1h2zM193 349h1v2h2v1h-2v2h-1v-2h-2v-1h2zM193 340h1v2h2v1h-2v2h-1v-2h-2v-1h2zM193 331h1v2h2v1h-2v2h-1v-2h-2v-1h2zM193 325h1v2h2v1h-2v2h-1v-2h-2v-1h2zM193 323h1v2h2v1h-2v2h-1v-2h-2v-1h2zM193 307h1v2h2v1h-2v2h-1v-2h-2v-1h2zM193 292h1v2h2v1h-2v2h-1v-2h-2v-1h2zM193 286h1v2h2v1h-2v2h-1v-2h-2v-1h2zM196 448h1v2h2v1h-2v2h-1v-2h-2v-1h2zM196 435h1v2h2v1h-2v2h-1v-2h-2v-1h2zM196 429h1v2h2v1h-2v2h-1v-2h-2v-1h2zM196 426h1v2h2v1h-2v2h-1v-2h-2v-1h2zM196 424h1v2h2v1h-2v2h-1v-2h-2v-1h2zM196 420h1v2h2v1h-2v2h-1v-2h-2v-1h2zM196 418h1v2h2v1h-2v2h-1v-2h-2v-1h2zM196 416h1v2h2v1h-2v2h-1v-2h-2v-1h2zM196 413h1v2h2v1h-2v2h-1v-2h-2v-1h2zM196 409h1v2h2v1h-2v2h-1v-2h-2v-1h2zM196 407h1v2h2v1h-2v2h-1v-2h-2v-1h2zM196 405h1v2h2v1h-2v2h-1v-2h-2v-1h2zM196 403h1v2h2v1h-2v2h-1v-2h-2v-1h2zM196 381h1v2h2v1h-2v2h-1v-2h-2v-1h2zM196 377h1v2h2v1h-2v2h-1v-2h-2v-1h2zM196 375h1v2h2v1h-2v2h-1v-2h-2v-1h2zM196 372h1v2h2v1h-2v2h-1v-2h-2v-1h2zM196 370h1v2h2v1h-2v2h-1v-2h-2v-1h2zM196 368h1v2h2v1h-2v2h-1v-2h-2v-1h2zM196 366h1v2h2v1h-2v2h-1v-2h-2v-1h2zM196 364h1v2h2v1h-2v2h-1v-2h-2v-1h2zM196 359h1v2h2v1h-2v2h-1v-2h-2v-1h2zM196 355h1v2h2v1h-2v2h-1v-2h-2v-1h2zM196 344h1v2h2v1h-2v2h-1v-2h-2v-1h2zM196 336h1v2h2v1h-2v2h-1v-2h-2v-1h2zM196 329h1v2h2v1h-2v2h-1v-2h-2v-1h2zM196 307h1v2h2v1h-2v2h-1v-2h-2v-1h2zM196 279h1v2h2v1h-2v2h-1v-2h-2v-1h2zM199 461h1v2h2v1h-2v2h-1v-2h-2v-1h2zM199 459h1v2h2v1h-2v2h-1v-2h-2v-1h2zM199 457h1v2h2v1h-2v2h-1v-2h-2v-1h2zM199 437h1v2h2v1h-2v2h-1v-2h-2v-1h2zM199 433h1v2h2v1h-2v2h-1v-2h-2v-1h2zM199 431h1v2h2v1h-2v2h-1v-2h-2v-1h2zM199 429h1v2h2v1h-2v2h-1v-2h-2v-1h2zM199 426h1v2h2v1h-2v2h-1v-2h-2v-1h2zM199 424h1v2h2v1h-2v2h-1v-2h-2v-1h2zM199 422h1v2h2v1h-2v2h-1v-2h-2v-1h2zM199 420h1v2h2v1h-2v2h-1v-2h-2v-1h2zM199 418h1v2h2v1h-2v2h-1v-2h-2v-1h2zM199 416h1v2h2v1h-2v2h-1v-2h-2v-1h2zM199 413h1v2h2v1h-2v2h-1v-2h-2v-1h2zM199 407h1v2h2v1h-2v2h-1v-2h-2v-1h2zM199 405h1v2h2v1h-2v2h-1v-2h-2v-1h2zM199 403h1v2h2v1h-2v2h-1v-2h-2v-1h2zM199 396h1v2h2v1h-2v2h-1v-2h-2v-1h2zM199 383h1v2h2v1h-2v2h-1v-2h-2v-1h2zM199 381h1v2h2v1h-2v2h-1v-2h-2v-1h2zM199 379h1v2h2v1h-2v2h-1v-2h-2v-1h2zM199 375h1v2h2v1h-2v2h-1v-2h-2v-1h2zM199 372h1v2h2v1h-2v2h-1v-2h-2v-1h2zM199 368h1v2h2v1h-2v2h-1v-2h-2v-1h2zM199 366h1v2h2v1h-2v2h-1v-2h-2v-1h2zM199 364h1v2h2v1h-2v2h-1v-2h-2v-1h2zM199 359h1v2h2v1h-2v2h-1v-2h-2v-1h2zM199 351h1v2h2v1h-2v2h-1v-2h-2v-1h2zM199 349h1v2h2v1h-2v2h-1v-2h-2v-1h2zM199 346h1v2h2v1h-2v2h-1v-2h-2v-1h2zM199 338h1v2h2v1h-2v2h-1v-2h-2v-1h2zM199 310h1v2h2v1h-2v2h-1v-2h-2v-1h2zM203 446h1v2h2v1h-2v2h-1v-2h-2v-1h2zM203 444h1v2h2v1h-2v2h-1v-2h-2v-1h2zM203 437h1v2h2v1h-2v2h-1v-2h-2v-1h2zM203 435h1v2h2v1h-2v2h-1v-2h-2v-1h2zM203 431h1v2h2v1h-2v2h-1v-2h-2v-1h2zM203 429h1v2h2v1h-2v2h-1v-2h-2v-1h2zM203 426h1v2h2v1h-2v2h-1v-2h-2v-1h2zM203 424h1v2h2v1h-2v2h-1v-2h-2v-1h2zM203 420h1v2h2v1h-2v2h-1v-2h-2v-1h2zM203 418h1v2h2v1h-2v2h-1v-2h-2v-1h2zM203 416h1v2h2v1h-2v2h-1v-2h-2v-1h2zM203 413h1v2h2v1h-2v2h-1v-2h-2v-1h2zM203 411h1v2h2v1h-2v2h-1v-2h-2v-1h2zM203 409h1v2h2v1h-2v2h-1v-2h-2v-1h2zM203 407h1v2h2v1h-2v2h-1v-2h-2v-1h2zM203 405h1v2h2v1h-2v2h-1v-2h-2v-1h2zM203 403h1v2h2v1h-2v2h-1v-2h-2v-1h2zM203 394h1v2h2v1h-2v2h-1v-2h-2v-1h2zM203 388h1v2h2v1h-2v2h-1v-2h-2v-1h2zM203 381h1v2h2v1h-2v2h-1v-2h-2v-1h2zM203 375h1v2h2v1h-2v2h-1v-2h-2v-1h2zM203 372h1v2h2v1h-2v2h-1v-2h-2v-1h2zM203 370h1v2h2v1h-2v2h-1v-2h-2v-1h2zM203 368h1v2h2v1h-2v2h-1v-2h-2v-1h2zM203 366h1v2h2v1h-2v2h-1v-2h-2v-1h2zM203 359h1v2h2v1h-2v2h-1v-2h-2v-1h2zM203 357h1v2h2v1h-2v2h-1v-2h-2v-1h2zM203 351h1v2h2v1h-2v2h-1v-2h-2v-1h2zM203 346h1v2h2v1h-2v2h-1v-2h-2v-1h2zM203 344h1v2h2v1h-2v2h-1v-2h-2v-1h2zM203 340h1v2h2v1h-2v2h-1v-2h-2v-1h2zM203 338h1v2h2v1h-2v2h-1v-2h-2v-1h2zM206 496h1v2h2v1h-2v2h-1v-2h-2v-1h2zM206 478h1v2h2v1h-2v2h-1v-2h-2v-1h2zM206 461h1v2h2v1h-2v2h-1v-2h-2v-1h2zM206 452h1v2h2v1h-2v2h-1v-2h-2v-1h2zM206 448h1v2h2v1h-2v2h-1v-2h-2v-1h2zM206 446h1v2h2v1h-2v2h-1v-2h-2v-1h2zM206 439h1v2h2v1h-2v2h-1v-2h-2v-1h2zM206 437h1v2h2v1h-2v2h-1v-2h-2v-1h2zM206 435h1v2h2v1h-2v2h-1v-2h-2v-1h2zM206 433h1v2h2v1h-2v2h-1v-2h-2v-1h2zM206 431h1v2h2v1h-2v2h-1v-2h-2v-1h2zM206 429h1v2h2v1h-2v2h-1v-2h-2v-1h2zM206 426h1v2h2v1h-2v2h-1v-2h-2v-1h2zM206 424h1v2h2v1h-2v2h-1v-2h-2v-1h2zM206 422h1v2h2v1h-2v2h-1v-2h-2v-1h2zM206 420h1v2h2v1h-2v2h-1v-2h-2v-1h2zM206 418h1v2h2v1h-2v2h-1v-2h-2v-1h2zM206 416h1v2h2v1h-2v2h-1v-2h-2v-1h2zM206 413h1v2h2v1h-2v2h-1v-2h-2v-1h2zM206 411h1v2h2v1h-2v2h-1v-2h-2v-1h2zM206 409h1v2h2v1h-2v2h-1v-2h-2v-1h2zM206 407h1v2h2v1h-2v2h-1v-2h-2v-1h2zM206 405h1v2h2v1h-2v2h-1v-2h-2v-1h2zM206 403h1v2h2v1h-2v2h-1v-2h-2v-1h2zM206 400h1v2h2v1h-2v2h-1v-2h-2v-1h2zM206 398h1v2h2v1h-2v2h-1v-2h-2v-1h2zM206 396h1v2h2v1h-2v2h-1v-2h-2v-1h2zM206 394h1v2h2v1h-2v2h-1v-2h-2v-1h2zM206 388h1v2h2v1h-2v2h-1v-2h-2v-1h2zM206 379h1v2h2v1h-2v2h-1v-2h-2v-1h2zM206 377h1v2h2v1h-2v2h-1v-2h-2v-1h2zM206 368h1v2h2v1h-2v2h-1v-2h-2v-1h2zM206 364h1v2h2v1h-2v2h-1v-2h-2v-1h2zM206 355h1v2h2v1h-2v2h-1v-2h-2v-1h2zM206 353h1v2h2v1h-2v2h-1v-2h-2v-1h2zM206 351h1v2h2v1h-2v2h-1v-2h-2v-1h2zM206 342h1v2h2v1h-2v2h-1v-2h-2v-1h2zM206 340h1v2h2v1h-2v2h-1v-2h-2v-1h2zM206 292h1v2h2v1h-2v2h-1v-2h-2v-1h2zM206 171h1v2h2v1h-2v2h-1v-2h-2v-1h2zM210 481h1v2h2v1h-2v2h-1v-2h-2v-1h2zM210 459h1v2h2v1h-2v2h-1v-2h-2v-1h2zM210 452h1v2h2v1h-2v2h-1v-2h-2v-1h2zM210 448h1v2h2v1h-2v2h-1v-2h-2v-1h2zM210 439h1v2h2v1h-2v2h-1v-2h-2v-1h2zM210 437h1v2h2v1h-2v2h-1v-2h-2v-1h2zM210 435h1v2h2v1h-2v2h-1v-2h-2v-1h2zM210 433h1v2h2v1h-2v2h-1v-2h-2v-1h2zM210 431h1v2h2v1h-2v2h-1v-2h-2v-1h2zM210 429h1v2h2v1h-2v2h-1v-2h-2v-1h2zM210 426h1v2h2v1h-2v2h-1v-2h-2v-1h2zM210 424h1v2h2v1h-2v2h-1v-2h-2v-1h2zM210 422h1v2h2v1h-2v2h-1v-2h-2v-1h2zM210 420h1v2h2v1h-2v2h-1v-2h-2v-1h2zM210 418h1v2h2v1h-2v2h-1v-2h-2v-1h2zM210 416h1v2h2v1h-2v2h-1v-2h-2v-1h2zM210 413h1v2h2v1h-2v2h-1v-2h-2v-1h2zM210 411h1v2h2v1h-2v2h-1v-2h-2v-1h2zM210 409h1v2h2v1h-2v2h-1v-2h-2v-1h2zM210 407h1v2h2v1h-2v2h-1v-2h-2v-1h2zM210 405h1v2h2v1h-2v2h-1v-2h-2v-1h2zM210 403h1v2h2v1h-2v2h-1v-2h-2v-1h2zM210 400h1v2h2v1h-2v2h-1v-2h-2v-1h2zM210 398h1v2h2v1h-2v2h-1v-2h-2v-1h2zM210 396h1v2h2v1h-2v2h-1v-2h-2v-1h2zM210 394h1v2h2v1h-2v2h-1v-2h-2v-1h2zM210 392h1v2h2v1h-2v2h-1v-2h-2v-1h2zM210 388h1v2h2v1h-2v2h-1v-2h-2v-1h2zM210 379h1v2h2v1h-2v2h-1v-2h-2v-1h2zM210 375h1v2h2v1h-2v2h-1v-2h-2v-1h2zM210 370h1v2h2v1h-2v2h-1v-2h-2v-1h2zM210 359h1v2h2v1h-2v2h-1v-2h-2v-1h2zM210 349h1v2h2v1h-2v2h-1v-2h-2v-1h2zM213 472h1v2h2v1h-2v2h-1v-2h-2v-1h2zM213 461h1v2h2v1h-2v2h-1v-2h-2v-1h2zM213 457h1v2h2v1h-2v2h-1v-2h-2v-1h2zM213 450h1v2h2v1h-2v2h-1v-2h-2v-1h2zM213 448h1v2h2v1h-2v2h-1v-2h-2v-1h2zM213 444h1v2h2v1h-2v2h-1v-2h-2v-1h2zM213 442h1v2h2v1h-2v2h-1v-2h-2v-1h2zM213 439h1v2h2v1h-2v2h-1v-2h-2v-1h2zM213 437h1v2h2v1h-2v2h-1v-2h-2v-1h2zM213 435h1v2h2v1h-2v2h-1v-2h-2v-1h2zM213 433h1v2h2v1h-2v2h-1v-2h-2v-1h2zM213 431h1v2h2v1h-2v2h-1v-2h-2v-1h2zM213 429h1v2h2v1h-2v2h-1v-2h-2v-1h2zM213 426h1v2h2v1h-2v2h-1v-2h-2v-1h2zM213 424h1v2h2v1h-2v2h-1v-2h-2v-1h2zM213 422h1v2h2v1h-2v2h-1v-2h-2v-1h2zM213 420h1v2h2v1h-2v2h-1v-2h-2v-1h2zM213 418h1v2h2v1h-2v2h-1v-2h-2v-1h2zM213 416h1v2h2v1h-2v2h-1v-2h-2v-1h2zM213 413h1v2h2v1h-2v2h-1v-2h-2v-1h2zM213 411h1v2h2v1h-2v2h-1v-2h-2v-1h2zM213 409h1v2h2v1h-2v2h-1v-2h-2v-1h2zM213 407h1v2h2v1h-2v2h-1v-2h-2v-1h2zM213 403h1v2h2v1h-2v2h-1v-2h-2v-1h2zM213 400h1v2h2v1h-2v2h-1v-2h-2v-1h2zM213 398h1v2h2v1h-2v2h-1v-2h-2v-1h2zM213 396h1v2h2v1h-2v2h-1v-2h-2v-1h2zM213 390h1v2h2v1h-2v2h-1v-2h-2v-1h2zM213 383h1v2h2v1h-2v2h-1v-2h-2v-1h2zM213 379h1v2h2v1h-2v2h-1v-2h-2v-1h2zM213 375h1v2h2v1h-2v2h-1v-2h-2v-1h2zM213 362h1v2h2v1h-2v2h-1v-2h-2v-1h2zM213 359h1v2h2v1h-2v2h-1v-2h-2v-1h2zM213 357h1v2h2v1h-2v2h-1v-2h-2v-1h2zM213 299h1v2h2v1h-2v2h-1v-2h-2v-1h2zM213 286h1v2h2v1h-2v2h-1v-2h-2v-1h2zM213 275h1v2h2v1h-2v2h-1v-2h-2v-1h2zM213 249h1v2h2v1h-2v2h-1v-2h-2v-1h2zM216 465h1v2h2v1h-2v2h-1v-2h-2v-1h2zM216 463h1v2h2v1h-2v2h-1v-2h-2v-1h2zM216 461h1v2h2v1h-2v2h-1v-2h-2v-1h2zM216 459h1v2h2v1h-2v2h-1v-2h-2v-1h2zM216 457h1v2h2v1h-2v2h-1v-2h-2v-1h2zM216 455h1v2h2v1h-2v2h-1v-2h-2v-1h2zM216 450h1v2h2v1h-2v2h-1v-2h-2v-1h2zM216 448h1v2h2v1h-2v2h-1v-2h-2v-1h2zM216 446h1v2h2v1h-2v2h-1v-2h-2v-1h2zM216 444h1v2h2v1h-2v2h-1v-2h-2v-1h2zM216 442h1v2h2v1h-2v2h-1v-2h-2v-1h2zM216 439h1v2h2v1h-2v2h-1v-2h-2v-1h2zM216 437h1v2h2v1h-2v2h-1v-2h-2v-1h2zM216 435h1v2h2v1h-2v2h-1v-2h-2v-1h2zM216 433h1v2h2v1h-2v2h-1v-2h-2v-1h2zM216 431h1v2h2v1h-2v2h-1v-2h-2v-1h2zM216 429h1v2h2v1h-2v2h-1v-2h-2v-1h2zM216 426h1v2h2v1h-2v2h-1v-2h-2v-1h2zM216 424h1v2h2v1h-2v2h-1v-2h-2v-1h2zM216 422h1v2h2v1h-2v2h-1v-2h-2v-1h2zM216 420h1v2h2v1h-2v2h-1v-2h-2v-1h2zM216 418h1v2h2v1h-2v2h-1v-2h-2v-1h2zM216 416h1v2h2v1h-2v2h-1v-2h-2v-1h2zM216 413h1v2h2v1h-2v2h-1v-2h-2v-1h2zM216 411h1v2h2v1h-2v2h-1v-2h-2v-1h2zM216 409h1v2h2v1h-2v2h-1v-2h-2v-1h2zM216 407h1v2h2v1h-2v2h-1v-2h-2v-1h2zM216 405h1v2h2v1h-2v2h-1v-2h-2v-1h2zM216 403h1v2h2v1h-2v2h-1v-2h-2v-1h2zM216 400h1v2h2v1h-2v2h-1v-2h-2v-1h2zM216 398h1v2h2v1h-2v2h-1v-2h-2v-1h2zM216 396h1v2h2v1h-2v2h-1v-2h-2v-1h2zM216 394h1v2h2v1h-2v2h-1v-2h-2v-1h2zM216 392h1v2h2v1h-2v2h-1v-2h-2v-1h2zM216 390h1v2h2v1h-2v2h-1v-2h-2v-1h2zM216 385h1v2h2v1h-2v2h-1v-2h-2v-1h2zM216 379h1v2h2v1h-2v2h-1v-2h-2v-1h2zM216 377h1v2h2v1h-2v2h-1v-2h-2v-1h2zM216 368h1v2h2v1h-2v2h-1v-2h-2v-1h2zM216 366h1v2h2v1h-2v2h-1v-2h-2v-1h2zM220 496h1v2h2v1h-2v2h-1v-2h-2v-1h2zM220 483h1v2h2v1h-2v2h-1v-2h-2v-1h2zM220 478h1v2h2v1h-2v2h-1v-2h-2v-1h2zM220 470h1v2h2v1h-2v2h-1v-2h-2v-1h2zM220 457h1v2h2v1h-2v2h-1v-2h-2v-1h2zM220 455h1v2h2v1h-2v2h-1v-2h-2v-1h2zM220 452h1v2h2v1h-2v2h-1v-2h-2v-1h2zM220 450h1v2h2v1h-2v2h-1v-2h-2v-1h2zM220 448h1v2h2v1h-2v2h-1v-2h-2v-1h2zM220 446h1v2h2v1h-2v2h-1v-2h-2v-1h2zM220 444h1v2h2v1h-2v2h-1v-2h-2v-1h2zM220 442h1v2h2v1h-2v2h-1v-2h-2v-1h2zM220 439h1v2h2v1h-2v2h-1v-2h-2v-1h2zM220 437h1v2h2v1h-2v2h-1v-2h-2v-1h2zM220 435h1v2h2v1h-2v2h-1v-2h-2v-1h2zM220 433h1v2h2v1h-2v2h-1v-2h-2v-1h2zM220 431h1v2h2v1h-2v2h-1v-2h-2v-1h2zM220 429h1v2h2v1h-2v2h-1v-2h-2v-1h2zM220 426h1v2h2v1h-2v2h-1v-2h-2v-1h2zM220 424h1v2h2v1h-2v2h-1v-2h-2v-1h2zM220 420h1v2h2v1h-2v2h-1v-2h-2v-1h2zM220 418h1v2h2v1h-2v2h-1v-2h-2v-1h2zM220 416h1v2h2v1h-2v2h-1v-2h-2v-1h2zM220 413h1v2h2v1h-2v2h-1v-2h-2v-1h2zM220 411h1v2h2v1h-2v2h-1v-2h-2v-1h2zM220 409h1v2h2v1h-2v2h-1v-2h-2v-1h2zM220 407h1v2h2v1h-2v2h-1v-2h-2v-1h2zM220 405h1v2h2v1h-2v2h-1v-2h-2v-1h2zM220 403h1v2h2v1h-2v2h-1v-2h-2v-1h2zM220 400h1v2h2v1h-2v2h-1v-2h-2v-1h2zM220 398h1v2h2v1h-2v2h-1v-2h-2v-1h2zM220 396h1v2h2v1h-2v2h-1v-2h-2v-1h2zM220 394h1v2h2v1h-2v2h-1v-2h-2v-1h2zM220 279h1v2h2v1h-2v2h-1v-2h-2v-1h2zM223 476h1v2h2v1h-2v2h-1v-2h-2v-1h2zM223 472h1v2h2v1h-2v2h-1v-2h-2v-1h2zM223 470h1v2h2v1h-2v2h-1v-2h-2v-1h2zM223 468h1v2h2v1h-2v2h-1v-2h-2v-1h2zM223 465h1v2h2v1h-2v2h-1v-2h-2v-1h2zM223 463h1v2h2v1h-2v2h-1v-2h-2v-1h2zM223 461h1v2h2v1h-2v2h-1v-2h-2v-1h2zM223 459h1v2h2v1h-2v2h-1v-2h-2v-1h2zM223 457h1v2h2v1h-2v2h-1v-2h-2v-1h2zM223 455h1v2h2v1h-2v2h-1v-2h-2v-1h2zM223 452h1v2h2v1h-2v2h-1v-2h-2v-1h2zM223 450h1v2h2v1h-2v2h-1v-2h-2v-1h2zM223 448h1v2h2v1h-2v2h-1v-2h-2v-1h2zM223 446h1v2h2v1h-2v2h-1v-2h-2v-1h2zM223 444h1v2h2v1h-2v2h-1v-2h-2v-1h2zM223 442h1v2h2v1h-2v2h-1v-2h-2v-1h2zM223 439h1v2h2v1h-2v2h-1v-2h-2v-1h2zM223 437h1v2h2v1h-2v2h-1v-2h-2v-1h2zM223 435h1v2h2v1h-2v2h-1v-2h-2v-1h2zM223 433h1v2h2v1h-2v2h-1v-2h-2v-1h2zM223 431h1v2h2v1h-2v2h-1v-2h-2v-1h2zM223 429h1v2h2v1h-2v2h-1v-2h-2v-1h2zM223 426h1v2h2v1h-2v2h-1v-2h-2v-1h2zM223 424h1v2h2v1h-2v2h-1v-2h-2v-1h2zM223 422h1v2h2v1h-2v2h-1v-2h-2v-1h2zM223 420h1v2h2v1h-2v2h-1v-2h-2v-1h2zM223 418h1v2h2v1h-2v2h-1v-2h-2v-1h2zM223 416h1v2h2v1h-2v2h-1v-2h-2v-1h2zM223 413h1v2h2v1h-2v2h-1v-2h-2v-1h2zM223 411h1v2h2v1h-2v2h-1v-2h-2v-1h2zM223 409h1v2h2v1h-2v2h-1v-2h-2v-1h2zM223 407h1v2h2v1h-2v2h-1v-2h-2v-1h2zM223 405h1v2h2v1h-2v2h-1v-2h-2v-1h2zM223 403h1v2h2v1h-2v2h-1v-2h-2v-1h2zM223 400h1v2h2v1h-2v2h-1v-2h-2v-1h2zM223 398h1v2h2v1h-2v2h-1v-2h-2v-1h2zM223 396h1v2h2v1h-2v2h-1v-2h-2v-1h2zM223 394h1v2h2v1h-2v2h-1v-2h-2v-1h2zM223 390h1v2h2v1h-2v2h-1v-2h-2v-1h2zM223 388h1v2h2v1h-2v2h-1v-2h-2v-1h2zM223 375h1v2h2v1h-2v2h-1v-2h-2v-1h2zM226 483h1v2h2v1h-2v2h-1v-2h-2v-1h2zM226 481h1v2h2v1h-2v2h-1v-2h-2v-1h2zM226 474h1v2h2v1h-2v2h-1v-2h-2v-1h2zM226 470h1v2h2v1h-2v2h-1v-2h-2v-1h2zM226 468h1v2h2v1h-2v2h-1v-2h-2v-1h2zM226 465h1v2h2v1h-2v2h-1v-2h-2v-1h2zM226 463h1v2h2v1h-2v2h-1v-2h-2v-1h2zM226 461h1v2h2v1h-2v2h-1v-2h-2v-1h2zM226 459h1v2h2v1h-2v2h-1v-2h-2v-1h2zM226 457h1v2h2v1h-2v2h-1v-2h-2v-1h2zM226 455h1v2h2v1h-2v2h-1v-2h-2v-1h2zM226 452h1v2h2v1h-2v2h-1v-2h-2v-1h2zM226 448h1v2h2v1h-2v2h-1v-2h-2v-1h2zM226 446h1v2h2v1h-2v2h-1v-2h-2v-1h2zM226 444h1v2h2v1h-2v2h-1v-2h-2v-1h2zM226 442h1v2h2v1h-2v2h-1v-2h-2v-1h2zM226 439h1v2h2v1h-2v2h-1v-2h-2v-1h2zM226 437h1v2h2v1h-2v2h-1v-2h-2v-1h2zM226 435h1v2h2v1h-2v2h-1v-2h-2v-1h2zM226 433h1v2h2v1h-2v2h-1v-2h-2v-1h2zM226 431h1v2h2v1h-2v2h-1v-2h-2v-1h2zM226 429h1v2h2v1h-2v2h-1v-2h-2v-1h2zM226 426h1v2h2v1h-2v2h-1v-2h-2v-1h2zM226 424h1v2h2v1h-2v2h-1v-2h-2v-1h2zM226 422h1v2h2v1h-2v2h-1v-2h-2v-1h2zM226 420h1v2h2v1h-2v2h-1v-2h-2v-1h2zM226 418h1v2h2v1h-2v2h-1v-2h-2v-1h2zM226 416h1v2h2v1h-2v2h-1v-2h-2v-1h2zM226 413h1v2h2v1h-2v2h-1v-2h-2v-1h2zM226 411h1v2h2v1h-2v2h-1v-2h-2v-1h2zM226 409h1v2h2v1h-2v2h-1v-2h-2v-1h2zM226 407h1v2h2v1h-2v2h-1v-2h-2v-1h2zM226 405h1v2h2v1h-2v2h-1v-2h-2v-1h2zM226 403h1v2h2v1h-2v2h-1v-2h-2v-1h2zM226 400h1v2h2v1h-2v2h-1v-2h-2v-1h2zM226 398h1v2h2v1h-2v2h-1v-2h-2v-1h2zM226 396h1v2h2v1h-2v2h-1v-2h-2v-1h2zM226 394h1v2h2v1h-2v2h-1v-2h-2v-1h2zM226 390h1v2h2v1h-2v2h-1v-2h-2v-1h2zM226 383h1v2h2v1h-2v2h-1v-2h-2v-1h2zM226 303h1v2h2v1h-2v2h-1v-2h-2v-1h2zM230 504h1v2h2v1h-2v2h-1v-2h-2v-1h2zM230 478h1v2h2v1h-2v2h-1v-2h-2v-1h2zM230 476h1v2h2v1h-2v2h-1v-2h-2v-1h2zM230 474h1v2h2v1h-2v2h-1v-2h-2v-1h2zM230 472h1v2h2v1h-2v2h-1v-2h-2v-1h2zM230 470h1v2h2v1h-2v2h-1v-2h-2v-1h2zM230 468h1v2h2v1h-2v2h-1v-2h-2v-1h2zM230 465h1v2h2v1h-2v2h-1v-2h-2v-1h2zM230 463h1v2h2v1h-2v2h-1v-2h-2v-1h2zM230 461h1v2h2v1h-2v2h-1v-2h-2v-1h2zM230 459h1v2h2v1h-2v2h-1v-2h-2v-1h2zM230 457h1v2h2v1h-2v2h-1v-2h-2v-1h2zM230 455h1v2h2v1h-2v2h-1v-2h-2v-1h2zM230 452h1v2h2v1h-2v2h-1v-2h-2v-1h2zM230 450h1v2h2v1h-2v2h-1v-2h-2v-1h2zM230 448h1v2h2v1h-2v2h-1v-2h-2v-1h2zM230 446h1v2h2v1h-2v2h-1v-2h-2v-1h2zM230 444h1v2h2v1h-2v2h-1v-2h-2v-1h2zM230 442h1v2h2v1h-2v2h-1v-2h-2v-1h2zM230 439h1v2h2v1h-2v2h-1v-2h-2v-1h2zM230 437h1v2h2v1h-2v2h-1v-2h-2v-1h2zM230 435h1v2h2v1h-2v2h-1v-2h-2v-1h2zM230 433h1v2h2v1h-2v2h-1v-2h-2v-1h2zM230 431h1v2h2v1h-2v2h-1v-2h-2v-1h2zM230 429h1v2h2v1h-2v2h-1v-2h-2v-1h2zM230 426h1v2h2v1h-2v2h-1v-2h-2v-1h2zM230 424h1v2h2v1h-2v2h-1v-2h-2v-1h2zM230 420h1v2h2v1h-2v2h-1v-2h-2v-1h2zM230 418h1v2h2v1h-2v2h-1v-2h-2v-1h2zM230 413h1v2h2v1h-2v2h-1v-2h-2v-1h2zM230 411h1v2h2v1h-2v2h-1v-2h-2v-1h2zM230 407h1v2h2v1h-2v2h-1v-2h-2v-1h2zM230 405h1v2h2v1h-2v2h-1v-2h-2v-1h2zM230 403h1v2h2v1h-2v2h-1v-2h-2v-1h2zM230 400h1v2h2v1h-2v2h-1v-2h-2v-1h2zM230 398h1v2h2v1h-2v2h-1v-2h-2v-1h2zM230 396h1v2h2v1h-2v2h-1v-2h-2v-1h2zM230 394h1v2h2v1h-2v2h-1v-2h-2v-1h2zM230 392h1v2h2v1h-2v2h-1v-2h-2v-1h2zM230 390h1v2h2v1h-2v2h-1v-2h-2v-1h2zM230 377h1v2h2v1h-2v2h-1v-2h-2v-1h2zM230 368h1v2h2v1h-2v2h-1v-2h-2v-1h2zM230 316h1v2h2v1h-2v2h-1v-2h-2v-1h2zM230 301h1v2h2v1h-2v2h-1v-2h-2v-1h2zM230 273h1v2h2v1h-2v2h-1v-2h-2v-1h2zM233 478h1v2h2v1h-2v2h-1v-2h-2v-1h2zM233 476h1v2h2v1h-2v2h-1v-2h-2v-1h2zM233 474h1v2h2v1h-2v2h-1v-2h-2v-1h2zM233 472h1v2h2v1h-2v2h-1v-2h-2v-1h2zM233 470h1v2h2v1h-2v2h-1v-2h-2v-1h2zM233 468h1v2h2v1h-2v2h-1v-2h-2v-1h2zM233 465h1v2h2v1h-2v2h-1v-2h-2v-1h2zM233 463h1v2h2v1h-2v2h-1v-2h-2v-1h2zM233 461h1v2h2v1h-2v2h-1v-2h-2v-1h2zM233 459h1v2h2v1h-2v2h-1v-2h-2v-1h2zM233 457h1v2h2v1h-2v2h-1v-2h-2v-1h2zM233 455h1v2h2v1h-2v2h-1v-2h-2v-1h2zM233 452h1v2h2v1h-2v2h-1v-2h-2v-1h2zM233 450h1v2h2v1h-2v2h-1v-2h-2v-1h2zM233 448h1v2h2v1h-2v2h-1v-2h-2v-1h2zM233 446h1v2h2v1h-2v2h-1v-2h-2v-1h2zM233 444h1v2h2v1h-2v2h-1v-2h-2v-1h2zM233 442h1v2h2v1h-2v2h-1v-2h-2v-1h2zM233 439h1v2h2v1h-2v2h-1v-2h-2v-1h2zM233 437h1v2h2v1h-2v2h-1v-2h-2v-1h2zM233 435h1v2h2v1h-2v2h-1v-2h-2v-1h2zM233 433h1v2h2v1h-2v2h-1v-2h-2v-1h2zM233 431h1v2h2v1h-2v2h-1v-2h-2v-1h2zM233 429h1v2h2v1h-2v2h-1v-2h-2v-1h2zM233 426h1v2h2v1h-2v2h-1v-2h-2v-1h2zM233 424h1v2h2v1h-2v2h-1v-2h-2v-1h2zM233 422h1v2h2v1h-2v2h-1v-2h-2v-1h2zM233 420h1v2h2v1h-2v2h-1v-2h-2v-1h2zM233 418h1v2h2v1h-2v2h-1v-2h-2v-1h2zM233 416h1v2h2v1h-2v2h-1v-2h-2v-1h2zM233 411h1v2h2v1h-2v2h-1v-2h-2v-1h2zM233 409h1v2h2v1h-2v2h-1v-2h-2v-1h2zM233 407h1v2h2v1h-2v2h-1v-2h-2v-1h2zM233 405h1v2h2v1h-2v2h-1v-2h-2v-1h2zM233 403h1v2h2v1h-2v2h-1v-2h-2v-1h2zM233 400h1v2h2v1h-2v2h-1v-2h-2v-1h2zM233 398h1v2h2v1h-2v2h-1v-2h-2v-1h2zM237 513h1v2h2v1h-2v2h-1v-2h-2v-1h2zM237 487h1v2h2v1h-2v2h-1v-2h-2v-1h2zM237 483h1v2h2v1h-2v2h-1v-2h-2v-1h2zM237 481h1v2h2v1h-2v2h-1v-2h-2v-1h2zM237 478h1v2h2v1h-2v2h-1v-2h-2v-1h2zM237 476h1v2h2v1h-2v2h-1v-2h-2v-1h2zM237 474h1v2h2v1h-2v2h-1v-2h-2v-1h2zM237 472h1v2h2v1h-2v2h-1v-2h-2v-1h2zM237 470h1v2h2v1h-2v2h-1v-2h-2v-1h2zM237 468h1v2h2v1h-2v2h-1v-2h-2v-1h2zM237 465h1v2h2v1h-2v2h-1v-2h-2v-1h2zM237 463h1v2h2v1h-2v2h-1v-2h-2v-1h2zM237 461h1v2h2v1h-2v2h-1v-2h-2v-1h2zM237 459h1v2h2v1h-2v2h-1v-2h-2v-1h2zM237 457h1v2h2v1h-2v2h-1v-2h-2v-1h2zM237 455h1v2h2v1h-2v2h-1v-2h-2v-1h2zM237 452h1v2h2v1h-2v2h-1v-2h-2v-1h2zM237 450h1v2h2v1h-2v2h-1v-2h-2v-1h2zM237 448h1v2h2v1h-2v2h-1v-2h-2v-1h2zM237 446h1v2h2v1h-2v2h-1v-2h-2v-1h2zM237 444h1v2h2v1h-2v2h-1v-2h-2v-1h2zM237 442h1v2h2v1h-2v2h-1v-2h-2v-1h2zM237 439h1v2h2v1h-2v2h-1v-2h-2v-1h2zM237 437h1v2h2v1h-2v2h-1v-2h-2v-1h2zM237 435h1v2h2v1h-2v2h-1v-2h-2v-1h2zM237 433h1v2h2v1h-2v2h-1v-2h-2v-1h2zM237 431h1v2h2v1h-2v2h-1v-2h-2v-1h2zM237 426h1v2h2v1h-2v2h-1v-2h-2v-1h2zM237 424h1v2h2v1h-2v2h-1v-2h-2v-1h2zM237 422h1v2h2v1h-2v2h-1v-2h-2v-1h2zM237 420h1v2h2v1h-2v2h-1v-2h-2v-1h2zM237 418h1v2h2v1h-2v2h-1v-2h-2v-1h2zM237 416h1v2h2v1h-2v2h-1v-2h-2v-1h2zM237 413h1v2h2v1h-2v2h-1v-2h-2v-1h2zM237 411h1v2h2v1h-2v2h-1v-2h-2v-1h2zM237 409h1v2h2v1h-2v2h-1v-2h-2v-1h2zM237 407h1v2h2v1h-2v2h-1v-2h-2v-1h2zM237 405h1v2h2v1h-2v2h-1v-2h-2v-1h2zM237 403h1v2h2v1h-2v2h-1v-2h-2v-1h2zM237 400h1v2h2v1h-2v2h-1v-2h-2v-1h2zM237 398h1v2h2v1h-2v2h-1v-2h-2v-1h2zM237 392h1v2h2v1h-2v2h-1v-2h-2v-1h2zM237 357h1v2h2v1h-2v2h-1v-2h-2v-1h2zM240 487h1v2h2v1h-2v2h-1v-2h-2v-1h2zM240 483h1v2h2v1h-2v2h-1v-2h-2v-1h2zM240 481h1v2h2v1h-2v2h-1v-2h-2v-1h2zM240 478h1v2h2v1h-2v2h-1v-2h-2v-1h2zM240 476h1v2h2v1h-2v2h-1v-2h-2v-1h2zM240 474h1v2h2v1h-2v2h-1v-2h-2v-1h2zM240 472h1v2h2v1h-2v2h-1v-2h-2v-1h2zM240 470h1v2h2v1h-2v2h-1v-2h-2v-1h2zM240 465h1v2h2v1h-2v2h-1v-2h-2v-1h2zM240 463h1v2h2v1h-2v2h-1v-2h-2v-1h2zM240 461h1v2h2v1h-2v2h-1v-2h-2v-1h2zM240 459h1v2h2v1h-2v2h-1v-2h-2v-1h2zM240 457h1v2h2v1h-2v2h-1v-2h-2v-1h2zM240 455h1v2h2v1h-2v2h-1v-2h-2v-1h2zM240 452h1v2h2v1h-2v2h-1v-2h-2v-1h2zM240 450h1v2h2v1h-2v2h-1v-2h-2v-1h2zM240 448h1v2h2v1h-2v2h-1v-2h-2v-1h2zM240 446h1v2h2v1h-2v2h-1v-2h-2v-1h2zM240 444h1v2h2v1h-2v2h-1v-2h-2v-1h2zM240 442h1v2h2v1h-2v2h-1v-2h-2v-1h2zM240 439h1v2h2v1h-2v2h-1v-2h-2v-1h2zM240 437h1v2h2v1h-2v2h-1v-2h-2v-1h2zM240 435h1v2h2v1h-2v2h-1v-2h-2v-1h2zM240 433h1v2h2v1h-2v2h-1v-2h-2v-1h2zM240 431h1v2h2v1h-2v2h-1v-2h-2v-1h2zM240 429h1v2h2v1h-2v2h-1v-2h-2v-1h2zM240 426h1v2h2v1h-2v2h-1v-2h-2v-1h2zM240 424h1v2h2v1h-2v2h-1v-2h-2v-1h2zM240 422h1v2h2v1h-2v2h-1v-2h-2v-1h2zM240 420h1v2h2v1h-2v2h-1v-2h-2v-1h2zM240 418h1v2h2v1h-2v2h-1v-2h-2v-1h2zM240 416h1v2h2v1h-2v2h-1v-2h-2v-1h2zM240 413h1v2h2v1h-2v2h-1v-2h-2v-1h2zM240 411h1v2h2v1h-2v2h-1v-2h-2v-1h2zM240 409h1v2h2v1h-2v2h-1v-2h-2v-1h2zM240 407h1v2h2v1h-2v2h-1v-2h-2v-1h2zM240 403h1v2h2v1h-2v2h-1v-2h-2v-1h2zM240 398h1v2h2v1h-2v2h-1v-2h-2v-1h2zM240 388h1v2h2v1h-2v2h-1v-2h-2v-1h2zM240 333h1v2h2v1h-2v2h-1v-2h-2v-1h2zM243 491h1v2h2v1h-2v2h-1v-2h-2v-1h2zM243 485h1v2h2v1h-2v2h-1v-2h-2v-1h2zM243 483h1v2h2v1h-2v2h-1v-2h-2v-1h2zM243 481h1v2h2v1h-2v2h-1v-2h-2v-1h2zM243 478h1v2h2v1h-2v2h-1v-2h-2v-1h2zM243 476h1v2h2v1h-2v2h-1v-2h-2v-1h2zM243 472h1v2h2v1h-2v2h-1v-2h-2v-1h2zM243 470h1v2h2v1h-2v2h-1v-2h-2v-1h2zM243 468h1v2h2v1h-2v2h-1v-2h-2v-1h2zM243 465h1v2h2v1h-2v2h-1v-2h-2v-1h2zM243 463h1v2h2v1h-2v2h-1v-2h-2v-1h2zM243 461h1v2h2v1h-2v2h-1v-2h-2v-1h2zM243 459h1v2h2v1h-2v2h-1v-2h-2v-1h2zM243 457h1v2h2v1h-2v2h-1v-2h-2v-1h2zM243 455h1v2h2v1h-2v2h-1v-2h-2v-1h2zM243 452h1v2h2v1h-2v2h-1v-2h-2v-1h2zM243 450h1v2h2v1h-2v2h-1v-2h-2v-1h2zM243 448h1v2h2v1h-2v2h-1v-2h-2v-1h2zM243 446h1v2h2v1h-2v2h-1v-2h-2v-1h2zM243 444h1v2h2v1h-2v2h-1v-2h-2v-1h2zM243 442h1v2h2v1h-2v2h-1v-2h-2v-1h2zM243 439h1v2h2v1h-2v2h-1v-2h-2v-1h2zM243 437h1v2h2v1h-2v2h-1v-2h-2v-1h2zM243 435h1v2h2v1h-2v2h-1v-2h-2v-1h2zM243 433h1v2h2v1h-2v2h-1v-2h-2v-1h2zM243 431h1v2h2v1h-2v2h-1v-2h-2v-1h2zM243 429h1v2h2v1h-2v2h-1v-2h-2v-1h2zM243 426h1v2h2v1h-2v2h-1v-2h-2v-1h2zM243 424h1v2h2v1h-2v2h-1v-2h-2v-1h2zM243 416h1v2h2v1h-2v2h-1v-2h-2v-1h2zM243 413h1v2h2v1h-2v2h-1v-2h-2v-1h2zM243 411h1v2h2v1h-2v2h-1v-2h-2v-1h2zM243 403h1v2h2v1h-2v2h-1v-2h-2v-1h2zM243 394h1v2h2v1h-2v2h-1v-2h-2v-1h2zM243 390h1v2h2v1h-2v2h-1v-2h-2v-1h2zM247 526h1v2h2v1h-2v2h-1v-2h-2v-1h2zM247 487h1v2h2v1h-2v2h-1v-2h-2v-1h2zM247 485h1v2h2v1h-2v2h-1v-2h-2v-1h2zM247 483h1v2h2v1h-2v2h-1v-2h-2v-1h2zM247 481h1v2h2v1h-2v2h-1v-2h-2v-1h2zM247 478h1v2h2v1h-2v2h-1v-2h-2v-1h2zM247 476h1v2h2v1h-2v2h-1v-2h-2v-1h2zM247 474h1v2h2v1h-2v2h-1v-2h-2v-1h2zM247 472h1v2h2v1h-2v2h-1v-2h-2v-1h2zM247 470h1v2h2v1h-2v2h-1v-2h-2v-1h2zM247 468h1v2h2v1h-2v2h-1v-2h-2v-1h2zM247 465h1v2h2v1h-2v2h-1v-2h-2v-1h2zM247 463h1v2h2v1h-2v2h-1v-2h-2v-1h2zM247 461h1v2h2v1h-2v2h-1v-2h-2v-1h2zM247 459h1v2h2v1h-2v2h-1v-2h-2v-1h2zM247 457h1v2h2v1h-2v2h-1v-2h-2v-1h2zM247 455h1v2h2v1h-2v2h-1v-2h-2v-1h2zM247 452h1v2h2v1h-2v2h-1v-2h-2v-1h2zM247 450h1v2h2v1h-2v2h-1v-2h-2v-1h2zM247 448h1v2h2v1h-2v2h-1v-2h-2v-1h2zM247 446h1v2h2v1h-2v2h-1v-2h-2v-1h2zM247 444h1v2h2v1h-2v2h-1v-2h-2v-1h2zM247 442h1v2h2v1h-2v2h-1v-2h-2v-1h2zM247 439h1v2h2v1h-2v2h-1v-2h-2v-1h2zM247 437h1v2h2v1h-2v2h-1v-2h-2v-1h2zM247 435h1v2h2v1h-2v2h-1v-2h-2v-1h2zM247 433h1v2h2v1h-2v2h-1v-2h-2v-1h2zM247 431h1v2h2v1h-2v2h-1v-2h-2v-1h2zM247 420h1v2h2v1h-2v2h-1v-2h-2v-1h2zM247 418h1v2h2v1h-2v2h-1v-2h-2v-1h2zM247 407h1v2h2v1h-2v2h-1v-2h-2v-1h2zM247 405h1v2h2v1h-2v2h-1v-2h-2v-1h2zM247 400h1v2h2v1h-2v2h-1v-2h-2v-1h2zM247 396h1v2h2v1h-2v2h-1v-2h-2v-1h2zM247 394h1v2h2v1h-2v2h-1v-2h-2v-1h2zM250 513h1v2h2v1h-2v2h-1v-2h-2v-1h2zM250 498h1v2h2v1h-2v2h-1v-2h-2v-1h2zM250 489h1v2h2v1h-2v2h-1v-2h-2v-1h2zM250 487h1v2h2v1h-2v2h-1v-2h-2v-1h2zM250 485h1v2h2v1h-2v2h-1v-2h-2v-1h2zM250 483h1v2h2v1h-2v2h-1v-2h-2v-1h2zM250 481h1v2h2v1h-2v2h-1v-2h-2v-1h2zM250 478h1v2h2v1h-2v2h-1v-2h-2v-1h2zM250 476h1v2h2v1h-2v2h-1v-2h-2v-1h2zM250 474h1v2h2v1h-2v2h-1v-2h-2v-1h2zM250 472h1v2h2v1h-2v2h-1v-2h-2v-1h2zM250 470h1v2h2v1h-2v2h-1v-2h-2v-1h2zM250 468h1v2h2v1h-2v2h-1v-2h-2v-1h2zM250 465h1v2h2v1h-2v2h-1v-2h-2v-1h2zM250 461h1v2h2v1h-2v2h-1v-2h-2v-1h2zM250 459h1v2h2v1h-2v2h-1v-2h-2v-1h2zM250 457h1v2h2v1h-2v2h-1v-2h-2v-1h2zM250 455h1v2h2v1h-2v2h-1v-2h-2v-1h2zM250 452h1v2h2v1h-2v2h-1v-2h-2v-1h2zM250 450h1v2h2v1h-2v2h-1v-2h-2v-1h2zM250 448h1v2h2v1h-2v2h-1v-2h-2v-1h2zM250 446h1v2h2v1h-2v2h-1v-2h-2v-1h2zM250 444h1v2h2v1h-2v2h-1v-2h-2v-1h2zM250 442h1v2h2v1h-2v2h-1v-2h-2v-1h2zM250 439h1v2h2v1h-2v2h-1v-2h-2v-1h2zM250 437h1v2h2v1h-2v2h-1v-2h-2v-1h2zM250 435h1v2h2v1h-2v2h-1v-2h-2v-1h2zM250 426h1v2h2v1h-2v2h-1v-2h-2v-1h2zM250 422h1v2h2v1h-2v2h-1v-2h-2v-1h2zM250 416h1v2h2v1h-2v2h-1v-2h-2v-1h2zM250 413h1v2h2v1h-2v2h-1v-2h-2v-1h2zM250 403h1v2h2v1h-2v2h-1v-2h-2v-1h2zM250 400h1v2h2v1h-2v2h-1v-2h-2v-1h2zM253 491h1v2h2v1h-2v2h-1v-2h-2v-1h2zM253 487h1v2h2v1h-2v2h-1v-2h-2v-1h2zM253 485h1v2h2v1h-2v2h-1v-2h-2v-1h2zM253 483h1v2h2v1h-2v2h-1v-2h-2v-1h2zM253 481h1v2h2v1h-2v2h-1v-2h-2v-1h2zM253 478h1v2h2v1h-2v2h-1v-2h-2v-1h2zM253 476h1v2h2v1h-2v2h-1v-2h-2v-1h2zM253 474h1v2h2v1h-2v2h-1v-2h-2v-1h2zM253 472h1v2h2v1h-2v2h-1v-2h-2v-1h2zM253 470h1v2h2v1h-2v2h-1v-2h-2v-1h2zM253 468h1v2h2v1h-2v2h-1v-2h-2v-1h2zM253 465h1v2h2v1h-2v2h-1v-2h-2v-1h2zM253 463h1v2h2v1h-2v2h-1v-2h-2v-1h2zM253 461h1v2h2v1h-2v2h-1v-2h-2v-1h2zM253 459h1v2h2v1h-2v2h-1v-2h-2v-1h2zM253 457h1v2h2v1h-2v2h-1v-2h-2v-1h2zM253 455h1v2h2v1h-2v2h-1v-2h-2v-1h2zM253 452h1v2h2v1h-2v2h-1v-2h-2v-1h2zM253 450h1v2h2v1h-2v2h-1v-2h-2v-1h2zM253 448h1v2h2v1h-2v2h-1v-2h-2v-1h2zM253 446h1v2h2v1h-2v2h-1v-2h-2v-1h2zM253 444h1v2h2v1h-2v2h-1v-2h-2v-1h2zM253 442h1v2h2v1h-2v2h-1v-2h-2v-1h2zM253 435h1v2h2v1h-2v2h-1v-2h-2v-1h2zM253 429h1v2h2v1h-2v2h-1v-2h-2v-1h2zM253 420h1v2h2v1h-2v2h-1v-2h-2v-1h2zM253 418h1v2h2v1h-2v2h-1v-2h-2v-1h2zM253 409h1v2h2v1h-2v2h-1v-2h-2v-1h2zM257 537h1v2h2v1h-2v2h-1v-2h-2v-1h2zM257 489h1v2h2v1h-2v2h-1v-2h-2v-1h2zM257 487h1v2h2v1h-2v2h-1v-2h-2v-1h2zM257 485h1v2h2v1h-2v2h-1v-2h-2v-1h2zM257 483h1v2h2v1h-2v2h-1v-2h-2v-1h2zM257 478h1v2h2v1h-2v2h-1v-2h-2v-1h2zM257 476h1v2h2v1h-2v2h-1v-2h-2v-1h2zM257 474h1v2h2v1h-2v2h-1v-2h-2v-1h2zM257 472h1v2h2v1h-2v2h-1v-2h-2v-1h2zM257 470h1v2h2v1h-2v2h-1v-2h-2v-1h2zM257 468h1v2h2v1h-2v2h-1v-2h-2v-1h2zM257 465h1v2h2v1h-2v2h-1v-2h-2v-1h2zM257 463h1v2h2v1h-2v2h-1v-2h-2v-1h2zM257 461h1v2h2v1h-2v2h-1v-2h-2v-1h2zM257 459h1v2h2v1h-2v2h-1v-2h-2v-1h2zM257 455h1v2h2v1h-2v2h-1v-2h-2v-1h2zM257 452h1v2h2v1h-2v2h-1v-2h-2v-1h2zM257 450h1v2h2v1h-2v2h-1v-2h-2v-1h2zM257 448h1v2h2v1h-2v2h-1v-2h-2v-1h2zM257 446h1v2h2v1h-2v2h-1v-2h-2v-1h2zM257 433h1v2h2v1h-2v2h-1v-2h-2v-1h2zM257 431h1v2h2v1h-2v2h-1v-2h-2v-1h2zM257 429h1v2h2v1h-2v2h-1v-2h-2v-1h2zM257 426h1v2h2v1h-2v2h-1v-2h-2v-1h2zM257 424h1v2h2v1h-2v2h-1v-2h-2v-1h2zM257 422h1v2h2v1h-2v2h-1v-2h-2v-1h2zM257 409h1v2h2v1h-2v2h-1v-2h-2v-1h2zM260 496h1v2h2v1h-2v2h-1v-2h-2v-1h2zM260 489h1v2h2v1h-2v2h-1v-2h-2v-1h2zM260 487h1v2h2v1h-2v2h-1v-2h-2v-1h2zM260 485h1v2h2v1h-2v2h-1v-2h-2v-1h2zM260 483h1v2h2v1h-2v2h-1v-2h-2v-1h2zM260 481h1v2h2v1h-2v2h-1v-2h-2v-1h2zM260 478h1v2h2v1h-2v2h-1v-2h-2v-1h2zM260 476h1v2h2v1h-2v2h-1v-2h-2v-1h2zM260 474h1v2h2v1h-2v2h-1v-2h-2v-1h2zM260 472h1v2h2v1h-2v2h-1v-2h-2v-1h2zM260 470h1v2h2v1h-2v2h-1v-2h-2v-1h2zM260 468h1v2h2v1h-2v2h-1v-2h-2v-1h2zM260 463h1v2h2v1h-2v2h-1v-2h-2v-1h2zM260 461h1v2h2v1h-2v2h-1v-2h-2v-1h2zM260 459h1v2h2v1h-2v2h-1v-2h-2v-1h2zM260 457h1v2h2v1h-2v2h-1v-2h-2v-1h2zM260 455h1v2h2v1h-2v2h-1v-2h-2v-1h2zM260 452h1v2h2v1h-2v2h-1v-2h-2v-1h2zM260 450h1v2h2v1h-2v2h-1v-2h-2v-1h2zM260 446h1v2h2v1h-2v2h-1v-2h-2v-1h2zM260 444h1v2h2v1h-2v2h-1v-2h-2v-1h2zM260 442h1v2h2v1h-2v2h-1v-2h-2v-1h2zM260 439h1v2h2v1h-2v2h-1v-2h-2v-1h2zM260 435h1v2h2v1h-2v2h-1v-2h-2v-1h2zM260 433h1v2h2v1h-2v2h-1v-2h-2v-1h2zM260 431h1v2h2v1h-2v2h-1v-2h-2v-1h2zM260 426h1v2h2v1h-2v2h-1v-2h-2v-1h2zM260 422h1v2h2v1h-2v2h-1v-2h-2v-1h2zM260 420h1v2h2v1h-2v2h-1v-2h-2v-1h2zM260 416h1v2h2v1h-2v2h-1v-2h-2v-1h2zM264 496h1v2h2v1h-2v2h-1v-2h-2v-1h2zM264 494h1v2h2v1h-2v2h-1v-2h-2v-1h2zM264 491h1v2h2v1h-2v2h-1v-2h-2v-1h2zM264 489h1v2h2v1h-2v2h-1v-2h-2v-1h2zM264 487h1v2h2v1h-2v2h-1v-2h-2v-1h2zM264 485h1v2h2v1h-2v2h-1v-2h-2v-1h2zM264 483h1v2h2v1h-2v2h-1v-2h-2v-1h2zM264 481h1v2h2v1h-2v2h-1v-2h-2v-1h2zM264 478h1v2h2v1h-2v2h-1v-2h-2v-1h2zM264 476h1v2h2v1h-2v2h-1v-2h-2v-1h2zM264 474h1v2h2v1h-2v2h-1v-2h-2v-1h2zM264 472h1v2h2v1h-2v2h-1v-2h-2v-1h2zM264 470h1v2h2v1h-2v2h-1v-2h-2v-1h2zM264 468h1v2h2v1h-2v2h-1v-2h-2v-1h2zM264 465h1v2h2v1h-2v2h-1v-2h-2v-1h2zM264 463h1v2h2v1h-2v2h-1v-2h-2v-1h2zM264 461h1v2h2v1h-2v2h-1v-2h-2v-1h2zM264 459h1v2h2v1h-2v2h-1v-2h-2v-1h2zM264 455h1v2h2v1h-2v2h-1v-2h-2v-1h2zM264 452h1v2h2v1h-2v2h-1v-2h-2v-1h2zM264 448h1v2h2v1h-2v2h-1v-2h-2v-1h2zM264 444h1v2h2v1h-2v2h-1v-2h-2v-1h2zM264 442h1v2h2v1h-2v2h-1v-2h-2v-1h2zM264 439h1v2h2v1h-2v2h-1v-2h-2v-1h2zM264 437h1v2h2v1h-2v2h-1v-2h-2v-1h2zM264 429h1v2h2v1h-2v2h-1v-2h-2v-1h2zM264 426h1v2h2v1h-2v2h-1v-2h-2v-1h2zM264 422h1v2h2v1h-2v2h-1v-2h-2v-1h2zM264 413h1v2h2v1h-2v2h-1v-2h-2v-1h2zM264 405h1v2h2v1h-2v2h-1v-2h-2v-1h2zM264 388h1v2h2v1h-2v2h-1v-2h-2v-1h2zM264 377h1v2h2v1h-2v2h-1v-2h-2v-1h2zM264 366h1v2h2v1h-2v2h-1v-2h-2v-1h2zM264 353h1v2h2v1h-2v2h-1v-2h-2v-1h2zM264 333h1v2h2v1h-2v2h-1v-2h-2v-1h2zM264 171h1v2h2v1h-2v2h-1v-2h-2v-1h2zM267 539h1v2h2v1h-2v2h-1v-2h-2v-1h2zM267 502h1v2h2v1h-2v2h-1v-2h-2v-1h2zM267 500h1v2h2v1h-2v2h-1v-2h-2v-1h2zM267 494h1v2h2v1h-2v2h-1v-2h-2v-1h2zM267 491h1v2h2v1h-2v2h-1v-2h-2v-1h2zM267 489h1v2h2v1h-2v2h-1v-2h-2v-1h2zM267 487h1v2h2v1h-2v2h-1v-2h-2v-1h2zM267 485h1v2h2v1h-2v2h-1v-2h-2v-1h2zM267 483h1v2h2v1h-2v2h-1v-2h-2v-1h2zM267 481h1v2h2v1h-2v2h-1v-2h-2v-1h2zM267 478h1v2h2v1h-2v2h-1v-2h-2v-1h2zM267 476h1v2h2v1h-2v2h-1v-2h-2v-1h2zM267 474h1v2h2v1h-2v2h-1v-2h-2v-1h2zM267 472h1v2h2v1h-2v2h-1v-2h-2v-1h2zM267 470h1v2h2v1h-2v2h-1v-2h-2v-1h2zM267 468h1v2h2v1h-2v2h-1v-2h-2v-1h2zM267 465h1v2h2v1h-2v2h-1v-2h-2v-1h2zM267 463h1v2h2v1h-2v2h-1v-2h-2v-1h2zM267 461h1v2h2v1h-2v2h-1v-2h-2v-1h2zM267 459h1v2h2v1h-2v2h-1v-2h-2v-1h2zM267 457h1v2h2v1h-2v2h-1v-2h-2v-1h2zM267 455h1v2h2v1h-2v2h-1v-2h-2v-1h2zM267 446h1v2h2v1h-2v2h-1v-2h-2v-1h2zM267 437h1v2h2v1h-2v2h-1v-2h-2v-1h2zM267 435h1v2h2v1h-2v2h-1v-2h-2v-1h2zM267 422h1v2h2v1h-2v2h-1v-2h-2v-1h2zM267 396h1v2h2v1h-2v2h-1v-2h-2v-1h2zM270 530h1v2h2v1h-2v2h-1v-2h-2v-1h2zM270 496h1v2h2v1h-2v2h-1v-2h-2v-1h2zM270 491h1v2h2v1h-2v2h-1v-2h-2v-1h2zM270 489h1v2h2v1h-2v2h-1v-2h-2v-1h2zM270 487h1v2h2v1h-2v2h-1v-2h-2v-1h2zM270 485h1v2h2v1h-2v2h-1v-2h-2v-1h2zM270 483h1v2h2v1h-2v2h-1v-2h-2v-1h2zM270 481h1v2h2v1h-2v2h-1v-2h-2v-1h2zM270 478h1v2h2v1h-2v2h-1v-2h-2v-1h2zM270 476h1v2h2v1h-2v2h-1v-2h-2v-1h2zM270 474h1v2h2v1h-2v2h-1v-2h-2v-1h2zM270 472h1v2h2v1h-2v2h-1v-2h-2v-1h2zM270 470h1v2h2v1h-2v2h-1v-2h-2v-1h2zM270 468h1v2h2v1h-2v2h-1v-2h-2v-1h2zM270 465h1v2h2v1h-2v2h-1v-2h-2v-1h2zM270 463h1v2h2v1h-2v2h-1v-2h-2v-1h2zM270 461h1v2h2v1h-2v2h-1v-2h-2v-1h2zM270 455h1v2h2v1h-2v2h-1v-2h-2v-1h2zM270 452h1v2h2v1h-2v2h-1v-2h-2v-1h2zM270 446h1v2h2v1h-2v2h-1v-2h-2v-1h2zM270 444h1v2h2v1h-2v2h-1v-2h-2v-1h2zM274 498h1v2h2v1h-2v2h-1v-2h-2v-1h2zM274 489h1v2h2v1h-2v2h-1v-2h-2v-1h2zM274 485h1v2h2v1h-2v2h-1v-2h-2v-1h2zM274 483h1v2h2v1h-2v2h-1v-2h-2v-1h2zM274 481h1v2h2v1h-2v2h-1v-2h-2v-1h2zM274 478h1v2h2v1h-2v2h-1v-2h-2v-1h2zM274 476h1v2h2v1h-2v2h-1v-2h-2v-1h2zM274 474h1v2h2v1h-2v2h-1v-2h-2v-1h2zM274 472h1v2h2v1h-2v2h-1v-2h-2v-1h2zM274 470h1v2h2v1h-2v2h-1v-2h-2v-1h2zM274 452h1v2h2v1h-2v2h-1v-2h-2v-1h2zM274 448h1v2h2v1h-2v2h-1v-2h-2v-1h2zM274 359h1v2h2v1h-2v2h-1v-2h-2v-1h2zM277 526h1v2h2v1h-2v2h-1v-2h-2v-1h2zM277 513h1v2h2v1h-2v2h-1v-2h-2v-1h2zM277 511h1v2h2v1h-2v2h-1v-2h-2v-1h2zM277 507h1v2h2v1h-2v2h-1v-2h-2v-1h2zM277 504h1v2h2v1h-2v2h-1v-2h-2v-1h2zM277 502h1v2h2v1h-2v2h-1v-2h-2v-1h2zM277 489h1v2h2v1h-2v2h-1v-2h-2v-1h2zM277 478h1v2h2v1h-2v2h-1v-2h-2v-1h2zM277 476h1v2h2v1h-2v2h-1v-2h-2v-1h2zM277 474h1v2h2v1h-2v2h-1v-2h-2v-1h2zM277 472h1v2h2v1h-2v2h-1v-2h-2v-1h2zM277 468h1v2h2v1h-2v2h-1v-2h-2v-1h2zM277 463h1v2h2v1h-2v2h-1v-2h-2v-1h2zM277 461h1v2h2v1h-2v2h-1v-2h-2v-1h2zM277 457h1v2h2v1h-2v2h-1v-2h-2v-1h2zM277 439h1v2h2v1h-2v2h-1v-2h-2v-1h2zM277 433h1v2h2v1h-2v2h-1v-2h-2v-1h2zM277 409h1v2h2v1h-2v2h-1v-2h-2v-1h2zM280 498h1v2h2v1h-2v2h-1v-2h-2v-1h2zM280 494h1v2h2v1h-2v2h-1v-2h-2v-1h2zM280 481h1v2h2v1h-2v2h-1v-2h-2v-1h2zM280 472h1v2h2v1h-2v2h-1v-2h-2v-1h2zM280 463h1v2h2v1h-2v2h-1v-2h-2v-1h2zM280 461h1v2h2v1h-2v2h-1v-2h-2v-1h2zM280 437h1v2h2v1h-2v2h-1v-2h-2v-1h2zM280 413h1v2h2v1h-2v2h-1v-2h-2v-1h2zM280 411h1v2h2v1h-2v2h-1v-2h-2v-1h2zM280 388h1v2h2v1h-2v2h-1v-2h-2v-1h2zM284 489h1v2h2v1h-2v2h-1v-2h-2v-1h2zM284 485h1v2h2v1h-2v2h-1v-2h-2v-1h2zM284 465h1v2h2v1h-2v2h-1v-2h-2v-1h2zM284 459h1v2h2v1h-2v2h-1v-2h-2v-1h2zM284 409h1v2h2v1h-2v2h-1v-2h-2v-1h2zM287 520h1v2h2v1h-2v2h-1v-2h-2v-1h2zM287 515h1v2h2v1h-2v2h-1v-2h-2v-1h2zM287 513h1v2h2v1h-2v2h-1v-2h-2v-1h2zM287 504h1v2h2v1h-2v2h-1v-2h-2v-1h2zM287 485h1v2h2v1h-2v2h-1v-2h-2v-1h2zM287 483h1v2h2v1h-2v2h-1v-2h-2v-1h2zM287 478h1v2h2v1h-2v2h-1v-2h-2v-1h2zM287 476h1v2h2v1h-2v2h-1v-2h-2v-1h2zM287 474h1v2h2v1h-2v2h-1v-2h-2v-1h2zM287 463h1v2h2v1h-2v2h-1v-2h-2v-1h2zM287 461h1v2h2v1h-2v2h-1v-2h-2v-1h2zM287 435h1v2h2v1h-2v2h-1v-2h-2v-1h2zM287 433h1v2h2v1h-2v2h-1v-2h-2v-1h2zM287 420h1v2h2v1h-2v2h-1v-2h-2v-1h2zM287 418h1v2h2v1h-2v2h-1v-2h-2v-1h2zM290 513h1v2h2v1h-2v2h-1v-2h-2v-1h2zM290 507h1v2h2v1h-2v2h-1v-2h-2v-1h2zM290 504h1v2h2v1h-2v2h-1v-2h-2v-1h2zM290 494h1v2h2v1h-2v2h-1v-2h-2v-1h2zM290 481h1v2h2v1h-2v2h-1v-2h-2v-1h2zM290 472h1v2h2v1h-2v2h-1v-2h-2v-1h2zM290 470h1v2h2v1h-2v2h-1v-2h-2v-1h2zM290 455h1v2h2v1h-2v2h-1v-2h-2v-1h2zM290 420h1v2h2v1h-2v2h-1v-2h-2v-1h2zM290 411h1v2h2v1h-2v2h-1v-2h-2v-1h2zM294 522h1v2h2v1h-2v2h-1v-2h-2v-1h2zM294 513h1v2h2v1h-2v2h-1v-2h-2v-1h2zM294 509h1v2h2v1h-2v2h-1v-2h-2v-1h2zM294 481h1v2h2v1h-2v2h-1v-2h-2v-1h2zM294 478h1v2h2v1h-2v2h-1v-2h-2v-1h2zM294 470h1v2h2v1h-2v2h-1v-2h-2v-1h2zM294 459h1v2h2v1h-2v2h-1v-2h-2v-1h2zM294 431h1v2h2v1h-2v2h-1v-2h-2v-1h2zM297 524h1v2h2v1h-2v2h-1v-2h-2v-1h2zM297 515h1v2h2v1h-2v2h-1v-2h-2v-1h2zM297 513h1v2h2v1h-2v2h-1v-2h-2v-1h2zM297 511h1v2h2v1h-2v2h-1v-2h-2v-1h2zM297 509h1v2h2v1h-2v2h-1v-2h-2v-1h2zM297 496h1v2h2v1h-2v2h-1v-2h-2v-1h2zM297 489h1v2h2v1h-2v2h-1v-2h-2v-1h2zM297 474h1v2h2v1h-2v2h-1v-2h-2v-1h2zM297 472h1v2h2v1h-2v2h-1v-2h-2v-1h2zM297 463h1v2h2v1h-2v2h-1v-2h-2v-1h2zM297 457h1v2h2v1h-2v2h-1v-2h-2v-1h2zM297 452h1v2h2v1h-2v2h-1v-2h-2v-1h2zM297 433h1v2h2v1h-2v2h-1v-2h-2v-1h2zM297 431h1v2h2v1h-2v2h-1v-2h-2v-1h2zM297 388h1v2h2v1h-2v2h-1v-2h-2v-1h2zM301 515h1v2h2v1h-2v2h-1v-2h-2v-1h2zM301 500h1v2h2v1h-2v2h-1v-2h-2v-1h2zM301 496h1v2h2v1h-2v2h-1v-2h-2v-1h2zM301 481h1v2h2v1h-2v2h-1v-2h-2v-1h2zM301 470h1v2h2v1h-2v2h-1v-2h-2v-1h2zM301 468h1v2h2v1h-2v2h-1v-2h-2v-1h2zM301 439h1v2h2v1h-2v2h-1v-2h-2v-1h2zM304 494h1v2h2v1h-2v2h-1v-2h-2v-1h2zM304 485h1v2h2v1h-2v2h-1v-2h-2v-1h2zM304 483h1v2h2v1h-2v2h-1v-2h-2v-1h2zM304 481h1v2h2v1h-2v2h-1v-2h-2v-1h2zM304 474h1v2h2v1h-2v2h-1v-2h-2v-1h2zM304 465h1v2h2v1h-2v2h-1v-2h-2v-1h2zM304 457h1v2h2v1h-2v2h-1v-2h-2v-1h2zM304 455h1v2h2v1h-2v2h-1v-2h-2v-1h2zM304 435h1v2h2v1h-2v2h-1v-2h-2v-1h2zM307 507h1v2h2v1h-2v2h-1v-2h-2v-1h2zM307 478h1v2h2v1h-2v2h-1v-2h-2v-1h2zM307 448h1v2h2v1h-2v2h-1v-2h-2v-1h2zM307 439h1v2h2v1h-2v2h-1v-2h-2v-1h2zM307 431h1v2h2v1h-2v2h-1v-2h-2v-1h2zM311 543h1v2h2v1h-2v2h-1v-2h-2v-1h2zM311 485h1v2h2v1h-2v2h-1v-2h-2v-1h2zM311 481h1v2h2v1h-2v2h-1v-2h-2v-1h2zM311 472h1v2h2v1h-2v2h-1v-2h-2v-1h2zM311 431h1v2h2v1h-2v2h-1v-2h-2v-1h2zM311 426h1v2h2v1h-2v2h-1v-2h-2v-1h2zM314 539h1v2h2v1h-2v2h-1v-2h-2v-1h2zM314 530h1v2h2v1h-2v2h-1v-2h-2v-1h2zM314 481h1v2h2v1h-2v2h-1v-2h-2v-1h2zM314 474h1v2h2v1h-2v2h-1v-2h-2v-1h2zM314 472h1v2h2v1h-2v2h-1v-2h-2v-1h2zM314 468h1v2h2v1h-2v2h-1v-2h-2v-1h2zM314 465h1v2h2v1h-2v2h-1v-2h-2v-1h2zM314 422h1v2h2v1h-2v2h-1v-2h-2v-1h2zM317 524h1v2h2v1h-2v2h-1v-2h-2v-1h2zM317 472h1v2h2v1h-2v2h-1v-2h-2v-1h2zM317 461h1v2h2v1h-2v2h-1v-2h-2v-1h2zM317 388h1v2h2v1h-2v2h-1v-2h-2v-1h2zM321 526h1v2h2v1h-2v2h-1v-2h-2v-1h2zM321 494h1v2h2v1h-2v2h-1v-2h-2v-1h2zM321 463h1v2h2v1h-2v2h-1v-2h-2v-1h2zM321 433h1v2h2v1h-2v2h-1v-2h-2v-1h2zM321 388h1v2h2v1h-2v2h-1v-2h-2v-1h2zM324 485h1v2h2v1h-2v2h-1v-2h-2v-1h2zM324 450h1v2h2v1h-2v2h-1v-2h-2v-1h2zM324 435h1v2h2v1h-2v2h-1v-2h-2v-1h2zM328 504h1v2h2v1h-2v2h-1v-2h-2v-1h2zM328 487h1v2h2v1h-2v2h-1v-2h-2v-1h2zM328 481h1v2h2v1h-2v2h-1v-2h-2v-1h2zM328 457h1v2h2v1h-2v2h-1v-2h-2v-1h2zM328 416h1v2h2v1h-2v2h-1v-2h-2v-1h2zM331 496h1v2h2v1h-2v2h-1v-2h-2v-1h2zM331 455h1v2h2v1h-2v2h-1v-2h-2v-1h2zM331 442h1v2h2v1h-2v2h-1v-2h-2v-1h2zM338 396h1v2h2v1h-2v2h-1v-2h-2v-1h2zM344 400h1v2h2v1h-2v2h-1v-2h-2v-1h2zM344 388h1v2h2v1h-2v2h-1v-2h-2v-1h2zM348 390h1v2h2v1h-2v2h-1v-2h-2v-1h2zM348 388h1v2h2v1h-2v2h-1v-2h-2v-1h2zM351 491h1v2h2v1h-2v2h-1v-2h-2v-1h2zM351 489h1v2h2v1h-2v2h-1v-2h-2v-1h2zM351 413h1v2h2v1h-2v2h-1v-2h-2v-1h2zM351 388h1v2h2v1h-2v2h-1v-2h-2v-1h2zM358 400h1v2h2v1h-2v2h-1v-2h-2v-1h2zM358 388h1v2h2v1h-2v2h-1v-2h-2v-1h2zM361 496h1v2h2v1h-2v2h-1v-2h-2v-1h2zM365 546h1v2h2v1h-2v2h-1v-2h-2v-1h2zM365 463h1v2h2v1h-2v2h-1v-2h-2v-1h2zM365 388h1v2h2v1h-2v2h-1v-2h-2v-1h2zM368 388h1v2h2v1h-2v2h-1v-2h-2v-1h2zM375 388h1v2h2v1h-2v2h-1v-2h-2v-1h2zM378 388h1v2h2v1h-2v2h-1v-2h-2v-1h2zM381 388h1v2h2v1h-2v2h-1v-2h-2v-1h2zM395 390h1v2h2v1h-2v2h-1v-2h-2v-1h2zM398 431h1v2h2v1h-2v2h-1v-2h-2v-1h2zM408 500h1v2h2v1h-2v2h-1v-2h-2v-1h2zM419 500h1v2h2v1h-2v2h-1v-2h-2v-1h2zM419 496h1v2h2v1h-2v2h-1v-2h-2v-1h2z" fill="#808040"/><path d="M210.5 358.5L214.1 364.5L206.9 364.5Z" fill="#ff0000" shape-rendering="geometricPrecision"/><path d="M213.5 378.5L217.1 384.5L209.9 384.5Z" fill="#ff0000" shape-rendering="geometricPrecision"/><path d="M216.5 399.5L220.1 405.5L212.9 405.5Z" fill="#ff0000" shape-rendering="geometricPrecision"/><path d="M220.5 432.5L224.1 438.5L216.9 438.5Z" fill="#ff0000" shape-rendering="geometricPrecision"/><path d="M230.5 467.5L234.1 473.5L226.9 473.5Z" fill="#ff0000" shape-rendering="geometricPrecision"/><path d="M253.5 488.5L257.1 494.5L249.9 494.5Z" fill="#ff0000" shape-rendering="geometricPrecision"/><path d="M321.5 512.5L325.1 518.5L317.9 518.5Z" fill="#ff0000" shape-rendering="geometricPrecision"/><path d="M388.5 529.5L392.1 535.5L384.9 535.5Z" fill="#ff0000" shape-rendering="geometricPrecision"/><path d="M469.5 536.5L473.1 542.5L465.9 542.5Z" fill="#ff0000" shape-rendering="geometricPrecision"/><path d="M526.5 538.5L530.1 544.5L522.9 544.5Z" fill="#ff0000" shape-rendering="geometricPrecision"/><path d="M257.5 366.9L261.1 370.5L257.5 374.1L253.9 370.5Z" fill="#1e9090" shape-rendering="geometricPrecision"/><path d="M260.5 388.9L264.1 392.5L260.5 396.1L256.9 392.5Z" fill="#1e9090" shape-rendering="geometricPrecision"/><path d="M267.5 414.9L271.1 418.5L267.5 422.1L263.9 418.5Z" fill="#1e9090" shape-rendering="geometricPrecision"/><path d="M277.5 448.9L281.1 452.5L277.5 456.1L273.9 452.5Z" fill="#1e9090" shape-rendering="geometricPrecision"/><path d="M290.5 476.9L294.1 480.5L290.5 484.1L286.9 480.5Z" fill="#1e9090" shape-rendering="geometricPrecision"/><path d="M287.5 531.9L291.1 535.5L287.5 539.1L283.9 535.5Z" fill="#1e9090" shape-rendering="geometricPrecision"/><path d="M354.5 559.9L358.1 563.5L354.5 567.1L350.9 563.5Z" fill="#1e9090" shape-rendering="geometricPrecision"/><path d="M429.5 565.9L433.1 569.5L429.5 573.1L425.9 569.5Z" fill="#1e9090" shape-rendering="geometricPrecision"/><path d="M496.5 567.9L500.1 571.5L496.5 575.1L492.9 571.5Z" fill="#1e9090" shape-rendering="geometricPrecision"/><path d="M560.5 567.9L564.1 571.5L560.5 575.1L556.9 571.5Z" fill="#1e9090" shape-rendering="geometricPrecision"/><path d="M210.5 361.5L257.5 361.5L257.5 381.5L260.5 381.5L260.5 402.5L267.5 402.5L267.5 435.5L277.5 435.5L277.5 470.5L290.5 470.5L290.5 491.5L321.5 491.5L321.5 515.5L388.5 515.5L388.5 532.5L469.5 532.5L469.5 539.5L526.5 539.5L526.5 541.5L560.5 541.5L560.5 571.5L526.5 571.5L469.5 571.5L469.5 569.5L388.5 569.5L388.5 563.5L321.5 563.5L321.5 535.5L253.5 535.5L253.5 491.5L230.5 491.5L230.5 470.5L220.5 470.5L220.5 435.5L216.5 435.5L216.5 402.5L213.5 402.5L213.5 381.5L210.5 381.5Z" fill="none" stroke="#b4b4b4" stroke-width="1" stroke-dasharray="2 2"/><path d="M233.5 370.5C234.2 375.8 236.8 392.9 238 402C239.2 411.1 239.0 417.0 241 425C243.0 433.0 246.9 442.0 250 450C253.1 458.0 255.7 465.2 259.3 473C262.9 480.8 266.4 489.6 271.5 497C276.6 504.4 281.8 512.0 290 517.3C298.2 522.6 310.0 525.3 320.7 528.7C331.4 532.1 343.6 534.8 354 537.5C364.4 540.2 371.1 542.7 383.4 544.7C395.7 546.7 413.6 548.3 428 549.5C442.4 550.7 458.7 551.2 470 552C481.3 552.8 483.3 553.8 496 554.5C508.7 555.2 537.7 555.8 546 556" fill="none" stroke="#9a9a9a" stroke-width="1" stroke-dasharray="3 1" shape-rendering="geometricPrecision"/><path d="M216.5 402.5L267.5 402.5L267.5 435.5L277.5 435.5L277.5 470.5L290.5 470.5L290.5 491.5L321.5 491.5L321.5 515.5L388.5 515.5L388.5 532.5L469.5 532.5L469.5 569.5L388.5 569.5L388.5 563.5L321.5 563.5L321.5 535.5L253.5 535.5L253.5 491.5L230.5 491.5L230.5 470.5L220.5 470.5L220.5 435.5L216.5 435.5Z" fill="none" stroke="#0000ff" stroke-width="1"/><text x="240" y="373.3" font-size="12.5" text-anchor="middle" fill="#000" >0</text><text x="243.5" y="396.3" font-size="12.5" text-anchor="middle" fill="#000" >1</text><text x="246" y="421.3" font-size="12.5" text-anchor="middle" fill="#000" >2</text><text x="253.2" y="455.5" font-size="12.5" text-anchor="middle" fill="#000" >3</text><text x="267.2" y="483.7" font-size="12.5" text-anchor="middle" fill="#000" >4</text><text x="294.1" y="516.5999999999999" font-size="12.5" text-anchor="middle" fill="#000" >5</text><text x="354.1" y="542.3" font-size="12.5" text-anchor="middle" fill="#000" >6</text><text x="428.1" y="552.3" font-size="12.5" text-anchor="middle" fill="#000" >7</text><text x="496" y="557.3" font-size="12.5" text-anchor="middle" fill="#000" >8</text><text x="543" y="559.3" font-size="12.5" text-anchor="middle" fill="#000" >9</text></svg>
</body></html>
